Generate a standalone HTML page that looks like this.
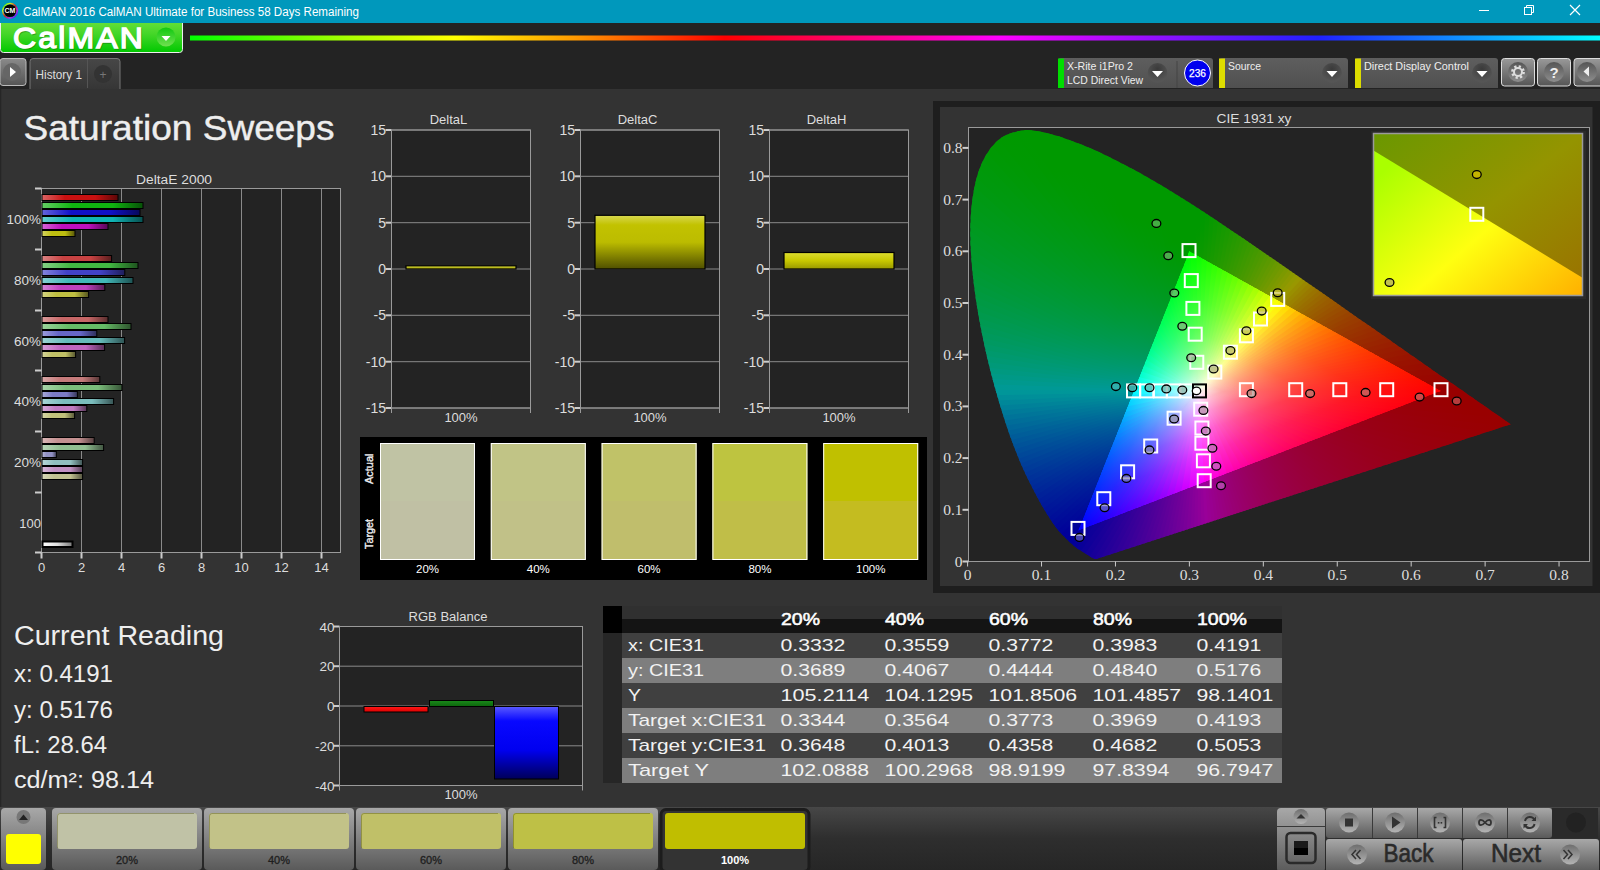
<!DOCTYPE html><html><head><meta charset="utf-8"><style>html,body{margin:0;padding:0;background:#333;overflow:hidden}svg{display:block;font-family:"Liberation Sans",sans-serif}</style></head><body><svg width="1600" height="870" viewBox="0 0 1600 870"><defs><linearGradient id="gbtn" x1="0" x2="0" y1="0" y2="1"><stop offset="0" stop-color="#74e442"/><stop offset="0.5" stop-color="#44d628"/><stop offset="1" stop-color="#00c800"/></linearGradient>
<linearGradient id="gcirc" x1="0" x2="0" y1="0" y2="1"><stop offset="0" stop-color="#10c810"/><stop offset="1" stop-color="#70e050"/></linearGradient>
<linearGradient id="rainbow" x1="0" x2="1" y1="0" y2="0"><stop offset="0" stop-color="#00ff00"/><stop offset="0.113" stop-color="#aaff00"/><stop offset="0.188" stop-color="#ffff00"/><stop offset="0.273" stop-color="#ff9900"/><stop offset="0.379" stop-color="#ff0000"/><stop offset="0.504" stop-color="#ff00a0"/><stop offset="0.574" stop-color="#ff00ff"/><stop offset="0.8" stop-color="#2020ff"/><stop offset="1" stop-color="#00ffff"/></linearGradient>
<linearGradient id="rainbowc" x1="0" x2="1" y1="0" y2="1"><stop offset="0" stop-color="#00ff00"/><stop offset="0.25" stop-color="#ffff00"/><stop offset="0.5" stop-color="#ff0000"/><stop offset="0.75" stop-color="#ff00ff"/><stop offset="1" stop-color="#0000ff"/></linearGradient>
<linearGradient id="gray1" x1="0" x2="0" y1="0" y2="1"><stop offset="0" stop-color="#8a8a8a"/><stop offset="1" stop-color="#555"/></linearGradient>
<linearGradient id="tabg" x1="0" x2="0" y1="0" y2="1"><stop offset="0" stop-color="#474747"/><stop offset="1" stop-color="#333"/></linearGradient>
<linearGradient id="tb" x1="0" x2="0" y1="0" y2="1"><stop offset="0" stop-color="#5e5e5e"/><stop offset="1" stop-color="#505050"/></linearGradient>
<radialGradient id="ddc" cx="0.5" cy="0.3" r="0.6"><stop offset="0" stop-color="#3a3a3a"/><stop offset="1" stop-color="#555"/></radialGradient>
<linearGradient id="btn2" x1="0" x2="0" y1="0" y2="1"><stop offset="0" stop-color="#999"/><stop offset="1" stop-color="#555"/></linearGradient>
<linearGradient id="tcg" x1="0" x2="0" y1="0" y2="1"><stop offset="0" stop-color="#555"/><stop offset="1" stop-color="#8e8e8e"/></linearGradient>
<linearGradient id="deb1" x1="0" x2="1" y1="0" y2="0"><stop offset="0" stop-color="#db6464"/><stop offset="0.3" stop-color="#c81010"/><stop offset="0.7" stop-color="#c81010"/><stop offset="1" stop-color="#5a0707"/></linearGradient>
<linearGradient id="deb2" x1="0" x2="1" y1="0" y2="0"><stop offset="0" stop-color="#64ce64"/><stop offset="0.3" stop-color="#10b410"/><stop offset="0.7" stop-color="#10b410"/><stop offset="1" stop-color="#075107"/></linearGradient>
<linearGradient id="deb3" x1="0" x2="1" y1="0" y2="0"><stop offset="0" stop-color="#6464db"/><stop offset="0.3" stop-color="#1010c8"/><stop offset="0.7" stop-color="#1010c8"/><stop offset="1" stop-color="#07075a"/></linearGradient>
<linearGradient id="deb4" x1="0" x2="1" y1="0" y2="0"><stop offset="0" stop-color="#64cece"/><stop offset="0.3" stop-color="#10b4b4"/><stop offset="0.7" stop-color="#10b4b4"/><stop offset="1" stop-color="#075151"/></linearGradient>
<linearGradient id="deb5" x1="0" x2="1" y1="0" y2="0"><stop offset="0" stop-color="#d564d5"/><stop offset="0.3" stop-color="#be10be"/><stop offset="0.7" stop-color="#be10be"/><stop offset="1" stop-color="#550755"/></linearGradient>
<linearGradient id="deb6" x1="0" x2="1" y1="0" y2="0"><stop offset="0" stop-color="#d5d564"/><stop offset="0.3" stop-color="#bebe10"/><stop offset="0.7" stop-color="#bebe10"/><stop offset="1" stop-color="#555507"/></linearGradient>
<linearGradient id="deb7" x1="0" x2="1" y1="0" y2="0"><stop offset="0" stop-color="#db8484"/><stop offset="0.3" stop-color="#c74242"/><stop offset="0.7" stop-color="#c74242"/><stop offset="1" stop-color="#5a1e1e"/></linearGradient>
<linearGradient id="deb8" x1="0" x2="1" y1="0" y2="0"><stop offset="0" stop-color="#84d184"/><stop offset="0.3" stop-color="#42b842"/><stop offset="0.7" stop-color="#42b842"/><stop offset="1" stop-color="#1e531e"/></linearGradient>
<linearGradient id="deb9" x1="0" x2="1" y1="0" y2="0"><stop offset="0" stop-color="#8484db"/><stop offset="0.3" stop-color="#4242c7"/><stop offset="0.7" stop-color="#4242c7"/><stop offset="1" stop-color="#1e1e5a"/></linearGradient>
<linearGradient id="deb10" x1="0" x2="1" y1="0" y2="0"><stop offset="0" stop-color="#84d1d1"/><stop offset="0.3" stop-color="#42b8b8"/><stop offset="0.7" stop-color="#42b8b8"/><stop offset="1" stop-color="#1e5353"/></linearGradient>
<linearGradient id="deb11" x1="0" x2="1" y1="0" y2="0"><stop offset="0" stop-color="#d584d5"/><stop offset="0.3" stop-color="#bf42bf"/><stop offset="0.7" stop-color="#bf42bf"/><stop offset="1" stop-color="#561e56"/></linearGradient>
<linearGradient id="deb12" x1="0" x2="1" y1="0" y2="0"><stop offset="0" stop-color="#d5d584"/><stop offset="0.3" stop-color="#bfbf42"/><stop offset="0.7" stop-color="#bfbf42"/><stop offset="1" stop-color="#56561e"/></linearGradient>
<linearGradient id="deb13" x1="0" x2="1" y1="0" y2="0"><stop offset="0" stop-color="#da9c9c"/><stop offset="0.3" stop-color="#c66666"/><stop offset="0.7" stop-color="#c66666"/><stop offset="1" stop-color="#592e2e"/></linearGradient>
<linearGradient id="deb14" x1="0" x2="1" y1="0" y2="0"><stop offset="0" stop-color="#9cd39c"/><stop offset="0.3" stop-color="#66bb66"/><stop offset="0.7" stop-color="#66bb66"/><stop offset="1" stop-color="#2e542e"/></linearGradient>
<linearGradient id="deb15" x1="0" x2="1" y1="0" y2="0"><stop offset="0" stop-color="#9c9cda"/><stop offset="0.3" stop-color="#6666c6"/><stop offset="0.7" stop-color="#6666c6"/><stop offset="1" stop-color="#2e2e59"/></linearGradient>
<linearGradient id="deb16" x1="0" x2="1" y1="0" y2="0"><stop offset="0" stop-color="#9cd3d3"/><stop offset="0.3" stop-color="#66bbbb"/><stop offset="0.7" stop-color="#66bbbb"/><stop offset="1" stop-color="#2e5454"/></linearGradient>
<linearGradient id="deb17" x1="0" x2="1" y1="0" y2="0"><stop offset="0" stop-color="#d69cd6"/><stop offset="0.3" stop-color="#c066c0"/><stop offset="0.7" stop-color="#c066c0"/><stop offset="1" stop-color="#562e56"/></linearGradient>
<linearGradient id="deb18" x1="0" x2="1" y1="0" y2="0"><stop offset="0" stop-color="#d6d69c"/><stop offset="0.3" stop-color="#c0c066"/><stop offset="0.7" stop-color="#c0c066"/><stop offset="1" stop-color="#56562e"/></linearGradient>
<linearGradient id="deb19" x1="0" x2="1" y1="0" y2="0"><stop offset="0" stop-color="#d9a9a9"/><stop offset="0.3" stop-color="#c57b7b"/><stop offset="0.7" stop-color="#c57b7b"/><stop offset="1" stop-color="#593737"/></linearGradient>
<linearGradient id="deb20" x1="0" x2="1" y1="0" y2="0"><stop offset="0" stop-color="#a9d4a9"/><stop offset="0.3" stop-color="#7bbd7b"/><stop offset="0.7" stop-color="#7bbd7b"/><stop offset="1" stop-color="#375537"/></linearGradient>
<linearGradient id="deb21" x1="0" x2="1" y1="0" y2="0"><stop offset="0" stop-color="#a9a9d9"/><stop offset="0.3" stop-color="#7b7bc5"/><stop offset="0.7" stop-color="#7b7bc5"/><stop offset="1" stop-color="#373759"/></linearGradient>
<linearGradient id="deb22" x1="0" x2="1" y1="0" y2="0"><stop offset="0" stop-color="#a9d4d4"/><stop offset="0.3" stop-color="#7bbdbd"/><stop offset="0.7" stop-color="#7bbdbd"/><stop offset="1" stop-color="#375555"/></linearGradient>
<linearGradient id="deb23" x1="0" x2="1" y1="0" y2="0"><stop offset="0" stop-color="#d7a9d7"/><stop offset="0.3" stop-color="#c17bc1"/><stop offset="0.7" stop-color="#c17bc1"/><stop offset="1" stop-color="#573757"/></linearGradient>
<linearGradient id="deb24" x1="0" x2="1" y1="0" y2="0"><stop offset="0" stop-color="#d7d7a9"/><stop offset="0.3" stop-color="#c1c17b"/><stop offset="0.7" stop-color="#c1c17b"/><stop offset="1" stop-color="#575737"/></linearGradient>
<linearGradient id="deb25" x1="0" x2="1" y1="0" y2="0"><stop offset="0" stop-color="#d9b8b8"/><stop offset="0.3" stop-color="#c49191"/><stop offset="0.7" stop-color="#c49191"/><stop offset="1" stop-color="#584141"/></linearGradient>
<linearGradient id="deb26" x1="0" x2="1" y1="0" y2="0"><stop offset="0" stop-color="#b8d5b8"/><stop offset="0.3" stop-color="#91bf91"/><stop offset="0.7" stop-color="#91bf91"/><stop offset="1" stop-color="#415641"/></linearGradient>
<linearGradient id="deb27" x1="0" x2="1" y1="0" y2="0"><stop offset="0" stop-color="#b8b8d9"/><stop offset="0.3" stop-color="#9191c4"/><stop offset="0.7" stop-color="#9191c4"/><stop offset="1" stop-color="#414158"/></linearGradient>
<linearGradient id="deb28" x1="0" x2="1" y1="0" y2="0"><stop offset="0" stop-color="#b8d5d5"/><stop offset="0.3" stop-color="#91bfbf"/><stop offset="0.7" stop-color="#91bfbf"/><stop offset="1" stop-color="#415656"/></linearGradient>
<linearGradient id="deb29" x1="0" x2="1" y1="0" y2="0"><stop offset="0" stop-color="#d7b8d7"/><stop offset="0.3" stop-color="#c291c2"/><stop offset="0.7" stop-color="#c291c2"/><stop offset="1" stop-color="#574157"/></linearGradient>
<linearGradient id="deb30" x1="0" x2="1" y1="0" y2="0"><stop offset="0" stop-color="#d7d7b8"/><stop offset="0.3" stop-color="#c2c291"/><stop offset="0.7" stop-color="#c2c291"/><stop offset="1" stop-color="#575741"/></linearGradient>
<linearGradient id="debw" x1="0" x2="1" y1="0" y2="0"><stop offset="0" stop-color="#fff"/><stop offset="0.5" stop-color="#ddd"/><stop offset="1" stop-color="#777"/></linearGradient>
<linearGradient id="dyl" x1="0" x2="0" y1="0" y2="1"><stop offset="0" stop-color="#dede40"/><stop offset="1" stop-color="#a0a000"/></linearGradient>
<linearGradient id="dyc" x1="0" x2="0" y1="0" y2="1"><stop offset="0" stop-color="#d8d850"/><stop offset="0.18" stop-color="#c2c200"/><stop offset="0.5" stop-color="#bcbc00"/><stop offset="0.8" stop-color="#7a7a00"/><stop offset="1" stop-color="#505000"/></linearGradient>
<linearGradient id="dyh" x1="0" x2="0" y1="0" y2="1"><stop offset="0" stop-color="#dcdc30"/><stop offset="0.5" stop-color="#c8c800"/><stop offset="1" stop-color="#989800"/></linearGradient>
<clipPath id="horse"><path d="M1096.3 558.9 C1096.3 558.9 1096.2 558.9 1096.1 559.0 C1096.0 559.0 1095.9 559.0 1095.7 559.0 C1095.6 559.0 1095.4 559.0 1095.2 559.0 C1095.0 559.0 1094.8 559.0 1094.3 558.9 C1093.9 558.7 1093.3 558.4 1092.5 557.9 C1091.6 557.4 1090.7 556.8 1089.1 555.9 C1087.6 554.9 1085.9 554.0 1083.4 552.3 C1080.9 550.7 1078.1 549.6 1074.1 546.1 C1070.1 542.7 1063.6 536.5 1059.3 531.6 C1055.1 526.7 1052.7 523.1 1048.6 516.6 C1044.6 510.2 1040.1 502.7 1035.1 492.9 C1030.1 483.1 1024.0 471.7 1018.4 457.7 C1012.7 443.8 1006.7 427.3 1001.2 409.0 C995.6 390.7 989.6 369.1 985.0 348.1 C980.4 327.2 976.1 304.0 973.7 283.1 C971.2 262.3 969.8 241.2 970.5 223.0 C971.2 204.7 973.6 187.2 977.9 173.6 C982.2 160.1 988.9 148.9 996.4 141.7 C1003.8 134.5 1013.3 131.6 1022.5 130.4 C1031.8 129.2 1042.1 132.0 1052.0 134.4 C1061.9 136.8 1072.3 141.0 1082.0 144.8 C1091.7 148.7 1101.0 153.0 1110.2 157.4 C1119.4 161.9 1128.4 166.6 1137.3 171.5 C1146.3 176.5 1155.2 181.7 1164.1 187.0 C1173.0 192.4 1181.8 197.9 1190.6 203.6 C1199.4 209.2 1208.2 215.0 1217.0 220.8 C1225.8 226.7 1234.6 232.7 1243.4 238.6 C1252.2 244.6 1261.0 250.7 1269.8 256.7 C1278.5 262.7 1287.3 268.7 1295.9 274.7 C1304.6 280.7 1313.1 286.7 1321.6 292.6 C1330.0 298.4 1338.4 304.3 1346.5 309.9 C1354.6 315.6 1362.6 321.2 1370.4 326.6 C1378.1 332.0 1385.7 337.2 1392.8 342.2 C1400.0 347.2 1406.9 352.1 1413.3 356.5 C1419.7 361.0 1425.6 365.0 1431.1 368.9 C1436.7 372.8 1442.0 376.5 1446.8 379.8 C1451.6 383.1 1455.9 386.1 1459.8 388.8 C1463.8 391.6 1467.2 394.0 1470.4 396.2 C1473.6 398.4 1476.3 400.4 1478.8 402.1 C1481.4 403.9 1483.5 405.4 1485.6 406.8 C1487.6 408.2 1489.3 409.4 1491.0 410.5 C1492.6 411.7 1494.1 412.7 1495.5 413.7 C1496.8 414.6 1498.0 415.5 1499.2 416.3 C1500.3 417.0 1501.3 417.7 1502.1 418.3 C1503.0 418.9 1503.7 419.4 1504.3 419.8 C1505.0 420.3 1505.5 420.7 1506.0 421.0 C1506.5 421.4 1506.5 421.4 1507.3 421.9 C1508.1 422.5 1510.2 423.9 1510.8 424.3 Z"/></clipPath>
<linearGradient id="w1" gradientUnits="userSpaceOnUse" x1="1198.8" y1="391.4" x2="1438.1" y2="389.4"><stop offset="0" stop-color="#ffffff"/><stop offset="0.1" stop-color="#ffa8a8"/><stop offset="0.25" stop-color="#ff6564"/><stop offset="0.45" stop-color="#ff3635"/><stop offset="0.7" stop-color="#ff1715"/><stop offset="1.0" stop-color="#ff0100"/></linearGradient>
<linearGradient id="w2" gradientUnits="userSpaceOnUse" x1="1198.8" y1="391.4" x2="1432.9" y2="386.5"><stop offset="0" stop-color="#ffffff"/><stop offset="0.1" stop-color="#ffaba9"/><stop offset="0.25" stop-color="#ff6865"/><stop offset="0.45" stop-color="#ff3936"/><stop offset="0.7" stop-color="#ff1a16"/><stop offset="1.0" stop-color="#ff0400"/></linearGradient>
<linearGradient id="w3" gradientUnits="userSpaceOnUse" x1="1198.8" y1="391.4" x2="1427.7" y2="383.6"><stop offset="0" stop-color="#ffffff"/><stop offset="0.1" stop-color="#ffadaa"/><stop offset="0.25" stop-color="#ff6b66"/><stop offset="0.45" stop-color="#ff3d37"/><stop offset="0.7" stop-color="#ff1d16"/><stop offset="1.0" stop-color="#ff0800"/></linearGradient>
<linearGradient id="w4" gradientUnits="userSpaceOnUse" x1="1198.8" y1="391.4" x2="1422.4" y2="380.7"><stop offset="0" stop-color="#ffffff"/><stop offset="0.1" stop-color="#ffafac"/><stop offset="0.25" stop-color="#ff6e68"/><stop offset="0.45" stop-color="#ff4038"/><stop offset="0.7" stop-color="#ff2117"/><stop offset="1.0" stop-color="#ff0b00"/></linearGradient>
<linearGradient id="w5" gradientUnits="userSpaceOnUse" x1="1198.8" y1="391.4" x2="1417.2" y2="377.8"><stop offset="0" stop-color="#ffffff"/><stop offset="0.1" stop-color="#ffb2ad"/><stop offset="0.25" stop-color="#ff7269"/><stop offset="0.45" stop-color="#ff4439"/><stop offset="0.7" stop-color="#ff2417"/><stop offset="1.0" stop-color="#ff0e00"/></linearGradient>
<linearGradient id="w6" gradientUnits="userSpaceOnUse" x1="1198.8" y1="391.4" x2="1412.0" y2="374.9"><stop offset="0" stop-color="#ffffff"/><stop offset="0.1" stop-color="#ffb4ae"/><stop offset="0.25" stop-color="#ff756b"/><stop offset="0.45" stop-color="#ff483a"/><stop offset="0.7" stop-color="#ff2818"/><stop offset="1.0" stop-color="#ff1200"/></linearGradient>
<linearGradient id="w7" gradientUnits="userSpaceOnUse" x1="1198.8" y1="391.4" x2="1406.7" y2="372.0"><stop offset="0" stop-color="#ffffff"/><stop offset="0.1" stop-color="#ffb6b0"/><stop offset="0.25" stop-color="#ff796c"/><stop offset="0.45" stop-color="#ff4b3b"/><stop offset="0.7" stop-color="#ff2c18"/><stop offset="1.0" stop-color="#ff1600"/></linearGradient>
<linearGradient id="w8" gradientUnits="userSpaceOnUse" x1="1198.8" y1="391.4" x2="1401.5" y2="369.1"><stop offset="0" stop-color="#ffffff"/><stop offset="0.1" stop-color="#ffb9b1"/><stop offset="0.25" stop-color="#ff7c6e"/><stop offset="0.45" stop-color="#ff4f3c"/><stop offset="0.7" stop-color="#ff3019"/><stop offset="1.0" stop-color="#ff1a00"/></linearGradient>
<linearGradient id="w9" gradientUnits="userSpaceOnUse" x1="1198.8" y1="391.4" x2="1396.2" y2="366.2"><stop offset="0" stop-color="#ffffff"/><stop offset="0.1" stop-color="#ffbbb2"/><stop offset="0.25" stop-color="#ff806f"/><stop offset="0.45" stop-color="#ff543d"/><stop offset="0.7" stop-color="#ff3419"/><stop offset="1.0" stop-color="#ff1e00"/></linearGradient>
<linearGradient id="w10" gradientUnits="userSpaceOnUse" x1="1198.8" y1="391.4" x2="1391.0" y2="363.3"><stop offset="0" stop-color="#ffffff"/><stop offset="0.1" stop-color="#ffbeb4"/><stop offset="0.25" stop-color="#ff8471"/><stop offset="0.45" stop-color="#ff583e"/><stop offset="0.7" stop-color="#ff391a"/><stop offset="1.0" stop-color="#ff2200"/></linearGradient>
<linearGradient id="w11" gradientUnits="userSpaceOnUse" x1="1198.8" y1="391.4" x2="1385.8" y2="360.4"><stop offset="0" stop-color="#ffffff"/><stop offset="0.1" stop-color="#ffc0b5"/><stop offset="0.25" stop-color="#ff8872"/><stop offset="0.45" stop-color="#ff5d40"/><stop offset="0.7" stop-color="#ff3d1b"/><stop offset="1.0" stop-color="#ff2700"/></linearGradient>
<linearGradient id="w12" gradientUnits="userSpaceOnUse" x1="1198.8" y1="391.4" x2="1380.5" y2="357.4"><stop offset="0" stop-color="#ffffff"/><stop offset="0.1" stop-color="#ffc3b6"/><stop offset="0.25" stop-color="#ff8c74"/><stop offset="0.45" stop-color="#ff6141"/><stop offset="0.7" stop-color="#ff421b"/><stop offset="1.0" stop-color="#ff2b00"/></linearGradient>
<linearGradient id="w13" gradientUnits="userSpaceOnUse" x1="1198.8" y1="391.4" x2="1375.3" y2="354.5"><stop offset="0" stop-color="#ffffff"/><stop offset="0.1" stop-color="#ffc5b8"/><stop offset="0.25" stop-color="#ff9076"/><stop offset="0.45" stop-color="#ff6642"/><stop offset="0.7" stop-color="#ff471c"/><stop offset="1.0" stop-color="#ff3100"/></linearGradient>
<linearGradient id="w14" gradientUnits="userSpaceOnUse" x1="1198.8" y1="391.4" x2="1370.1" y2="351.6"><stop offset="0" stop-color="#ffffff"/><stop offset="0.1" stop-color="#ffc8b9"/><stop offset="0.25" stop-color="#ff9478"/><stop offset="0.45" stop-color="#ff6b44"/><stop offset="0.7" stop-color="#ff4d1d"/><stop offset="1.0" stop-color="#ff3600"/></linearGradient>
<linearGradient id="w15" gradientUnits="userSpaceOnUse" x1="1198.8" y1="391.4" x2="1364.8" y2="348.7"><stop offset="0" stop-color="#ffffff"/><stop offset="0.1" stop-color="#ffcbbb"/><stop offset="0.25" stop-color="#ff997a"/><stop offset="0.45" stop-color="#ff7145"/><stop offset="0.7" stop-color="#ff521d"/><stop offset="1.0" stop-color="#ff3c00"/></linearGradient>
<linearGradient id="w16" gradientUnits="userSpaceOnUse" x1="1198.8" y1="391.4" x2="1359.6" y2="345.8"><stop offset="0" stop-color="#ffffff"/><stop offset="0.1" stop-color="#ffcdbc"/><stop offset="0.25" stop-color="#ff9d7c"/><stop offset="0.45" stop-color="#ff7647"/><stop offset="0.7" stop-color="#ff581e"/><stop offset="1.0" stop-color="#ff4200"/></linearGradient>
<linearGradient id="w17" gradientUnits="userSpaceOnUse" x1="1198.8" y1="391.4" x2="1354.3" y2="342.9"><stop offset="0" stop-color="#ffffff"/><stop offset="0.1" stop-color="#ffd0be"/><stop offset="0.25" stop-color="#ffa27e"/><stop offset="0.45" stop-color="#ff7c48"/><stop offset="0.7" stop-color="#ff5e1f"/><stop offset="1.0" stop-color="#ff4800"/></linearGradient>
<linearGradient id="w18" gradientUnits="userSpaceOnUse" x1="1198.8" y1="391.4" x2="1349.1" y2="340.0"><stop offset="0" stop-color="#ffffff"/><stop offset="0.1" stop-color="#ffd3bf"/><stop offset="0.25" stop-color="#ffa780"/><stop offset="0.45" stop-color="#ff824a"/><stop offset="0.7" stop-color="#ff6520"/><stop offset="1.0" stop-color="#ff4f00"/></linearGradient>
<linearGradient id="w19" gradientUnits="userSpaceOnUse" x1="1198.8" y1="391.4" x2="1343.9" y2="337.1"><stop offset="0" stop-color="#ffffff"/><stop offset="0.1" stop-color="#ffd6c1"/><stop offset="0.25" stop-color="#ffac82"/><stop offset="0.45" stop-color="#ff884c"/><stop offset="0.7" stop-color="#ff6c21"/><stop offset="1.0" stop-color="#ff5600"/></linearGradient>
<linearGradient id="w20" gradientUnits="userSpaceOnUse" x1="1198.8" y1="391.4" x2="1338.6" y2="334.2"><stop offset="0" stop-color="#ffffff"/><stop offset="0.1" stop-color="#ffd9c3"/><stop offset="0.25" stop-color="#ffb184"/><stop offset="0.45" stop-color="#ff8f4d"/><stop offset="0.7" stop-color="#ff7422"/><stop offset="1.0" stop-color="#ff5e00"/></linearGradient>
<linearGradient id="w21" gradientUnits="userSpaceOnUse" x1="1198.8" y1="391.4" x2="1333.4" y2="331.3"><stop offset="0" stop-color="#ffffff"/><stop offset="0.1" stop-color="#ffdcc4"/><stop offset="0.25" stop-color="#ffb786"/><stop offset="0.45" stop-color="#ff964f"/><stop offset="0.7" stop-color="#ff7c23"/><stop offset="1.0" stop-color="#ff6700"/></linearGradient>
<linearGradient id="w22" gradientUnits="userSpaceOnUse" x1="1198.8" y1="391.4" x2="1328.2" y2="328.4"><stop offset="0" stop-color="#ffffff"/><stop offset="0.1" stop-color="#ffdfc6"/><stop offset="0.25" stop-color="#ffbd89"/><stop offset="0.45" stop-color="#ff9e51"/><stop offset="0.7" stop-color="#ff8424"/><stop offset="1.0" stop-color="#ff7000"/></linearGradient>
<linearGradient id="w23" gradientUnits="userSpaceOnUse" x1="1198.8" y1="391.4" x2="1322.9" y2="325.5"><stop offset="0" stop-color="#ffffff"/><stop offset="0.1" stop-color="#ffe2c8"/><stop offset="0.25" stop-color="#ffc28b"/><stop offset="0.45" stop-color="#ffa554"/><stop offset="0.7" stop-color="#ff8d25"/><stop offset="1.0" stop-color="#ff7a00"/></linearGradient>
<linearGradient id="w24" gradientUnits="userSpaceOnUse" x1="1198.8" y1="391.4" x2="1317.7" y2="322.5"><stop offset="0" stop-color="#ffffff"/><stop offset="0.1" stop-color="#ffe5c9"/><stop offset="0.25" stop-color="#ffc88d"/><stop offset="0.45" stop-color="#ffae56"/><stop offset="0.7" stop-color="#ff9727"/><stop offset="1.0" stop-color="#ff8400"/></linearGradient>
<linearGradient id="w25" gradientUnits="userSpaceOnUse" x1="1198.8" y1="391.4" x2="1312.5" y2="319.6"><stop offset="0" stop-color="#ffffff"/><stop offset="0.1" stop-color="#ffe8cb"/><stop offset="0.25" stop-color="#ffcf90"/><stop offset="0.45" stop-color="#ffb658"/><stop offset="0.7" stop-color="#ffa128"/><stop offset="1.0" stop-color="#ff9000"/></linearGradient>
<linearGradient id="w26" gradientUnits="userSpaceOnUse" x1="1198.8" y1="391.4" x2="1307.2" y2="316.7"><stop offset="0" stop-color="#ffffff"/><stop offset="0.1" stop-color="#ffeccd"/><stop offset="0.25" stop-color="#ffd593"/><stop offset="0.45" stop-color="#ffbf5b"/><stop offset="0.7" stop-color="#ffac29"/><stop offset="1.0" stop-color="#ff9c00"/></linearGradient>
<linearGradient id="w27" gradientUnits="userSpaceOnUse" x1="1198.8" y1="391.4" x2="1302.0" y2="313.8"><stop offset="0" stop-color="#ffffff"/><stop offset="0.1" stop-color="#ffefcf"/><stop offset="0.25" stop-color="#ffdc96"/><stop offset="0.45" stop-color="#ffc95d"/><stop offset="0.7" stop-color="#ffb82b"/><stop offset="1.0" stop-color="#ffaa00"/></linearGradient>
<linearGradient id="w28" gradientUnits="userSpaceOnUse" x1="1198.8" y1="391.4" x2="1296.7" y2="310.9"><stop offset="0" stop-color="#ffffff"/><stop offset="0.1" stop-color="#fff2d0"/><stop offset="0.25" stop-color="#ffe399"/><stop offset="0.45" stop-color="#ffd360"/><stop offset="0.7" stop-color="#ffc52d"/><stop offset="1.0" stop-color="#ffb900"/></linearGradient>
<linearGradient id="w29" gradientUnits="userSpaceOnUse" x1="1198.8" y1="391.4" x2="1291.5" y2="308.0"><stop offset="0" stop-color="#ffffff"/><stop offset="0.1" stop-color="#fff6d2"/><stop offset="0.25" stop-color="#ffea9c"/><stop offset="0.45" stop-color="#ffde63"/><stop offset="0.7" stop-color="#ffd32f"/><stop offset="1.0" stop-color="#ffca00"/></linearGradient>
<linearGradient id="w30" gradientUnits="userSpaceOnUse" x1="1198.8" y1="391.4" x2="1286.3" y2="305.1"><stop offset="0" stop-color="#ffffff"/><stop offset="0.1" stop-color="#fff9d4"/><stop offset="0.25" stop-color="#fff29f"/><stop offset="0.45" stop-color="#ffea67"/><stop offset="0.7" stop-color="#ffe331"/><stop offset="1.0" stop-color="#ffdc00"/></linearGradient>
<linearGradient id="w31" gradientUnits="userSpaceOnUse" x1="1198.8" y1="391.4" x2="1281.0" y2="302.2"><stop offset="0" stop-color="#ffffff"/><stop offset="0.1" stop-color="#fffdd6"/><stop offset="0.25" stop-color="#fffaa2"/><stop offset="0.45" stop-color="#fff66a"/><stop offset="0.7" stop-color="#fff333"/><stop offset="1.0" stop-color="#fff000"/></linearGradient>
<linearGradient id="w32" gradientUnits="userSpaceOnUse" x1="1198.8" y1="391.4" x2="1275.8" y2="299.3"><stop offset="0" stop-color="#ffffff"/><stop offset="0.1" stop-color="#feffd7"/><stop offset="0.25" stop-color="#fcffa4"/><stop offset="0.45" stop-color="#faff6c"/><stop offset="0.7" stop-color="#f9ff34"/><stop offset="1.0" stop-color="#f7ff00"/></linearGradient>
<linearGradient id="w33" gradientUnits="userSpaceOnUse" x1="1198.8" y1="391.4" x2="1270.6" y2="296.4"><stop offset="0" stop-color="#ffffff"/><stop offset="0.1" stop-color="#faffd6"/><stop offset="0.25" stop-color="#f4ffa2"/><stop offset="0.45" stop-color="#edff6a"/><stop offset="0.7" stop-color="#e7ff33"/><stop offset="1.0" stop-color="#e1ff00"/></linearGradient>
<linearGradient id="w34" gradientUnits="userSpaceOnUse" x1="1198.8" y1="391.4" x2="1265.3" y2="293.5"><stop offset="0" stop-color="#ffffff"/><stop offset="0.1" stop-color="#f7ffd5"/><stop offset="0.25" stop-color="#ecffa0"/><stop offset="0.45" stop-color="#e1ff68"/><stop offset="0.7" stop-color="#d6ff31"/><stop offset="1.0" stop-color="#ccff00"/></linearGradient>
<linearGradient id="w35" gradientUnits="userSpaceOnUse" x1="1198.8" y1="391.4" x2="1260.1" y2="290.6"><stop offset="0" stop-color="#ffffff"/><stop offset="0.1" stop-color="#f3ffd4"/><stop offset="0.25" stop-color="#e4ff9e"/><stop offset="0.45" stop-color="#d5ff66"/><stop offset="0.7" stop-color="#c6ff30"/><stop offset="1.0" stop-color="#b9ff00"/></linearGradient>
<linearGradient id="w36" gradientUnits="userSpaceOnUse" x1="1198.8" y1="391.4" x2="1254.8" y2="287.7"><stop offset="0" stop-color="#ffffff"/><stop offset="0.1" stop-color="#f0ffd3"/><stop offset="0.25" stop-color="#ddff9d"/><stop offset="0.45" stop-color="#c9ff64"/><stop offset="0.7" stop-color="#b7ff2f"/><stop offset="1.0" stop-color="#a6ff00"/></linearGradient>
<linearGradient id="w37" gradientUnits="userSpaceOnUse" x1="1198.8" y1="391.4" x2="1249.6" y2="284.7"><stop offset="0" stop-color="#ffffff"/><stop offset="0.1" stop-color="#ecffd2"/><stop offset="0.25" stop-color="#d5ff9b"/><stop offset="0.45" stop-color="#beff63"/><stop offset="0.7" stop-color="#a8ff2e"/><stop offset="1.0" stop-color="#95ff00"/></linearGradient>
<linearGradient id="w38" gradientUnits="userSpaceOnUse" x1="1198.8" y1="391.4" x2="1244.4" y2="281.8"><stop offset="0" stop-color="#ffffff"/><stop offset="0.1" stop-color="#e9ffd1"/><stop offset="0.25" stop-color="#ceff99"/><stop offset="0.45" stop-color="#b3ff61"/><stop offset="0.7" stop-color="#9aff2d"/><stop offset="1.0" stop-color="#84ff00"/></linearGradient>
<linearGradient id="w39" gradientUnits="userSpaceOnUse" x1="1198.8" y1="391.4" x2="1239.1" y2="278.9"><stop offset="0" stop-color="#ffffff"/><stop offset="0.1" stop-color="#e5ffd0"/><stop offset="0.25" stop-color="#c7ff98"/><stop offset="0.45" stop-color="#a8ff5f"/><stop offset="0.7" stop-color="#8cff2c"/><stop offset="1.0" stop-color="#74ff00"/></linearGradient>
<linearGradient id="w40" gradientUnits="userSpaceOnUse" x1="1198.8" y1="391.4" x2="1233.9" y2="276.0"><stop offset="0" stop-color="#ffffff"/><stop offset="0.1" stop-color="#e2ffcf"/><stop offset="0.25" stop-color="#c0ff96"/><stop offset="0.45" stop-color="#9eff5e"/><stop offset="0.7" stop-color="#80ff2b"/><stop offset="1.0" stop-color="#65ff00"/></linearGradient>
<linearGradient id="w41" gradientUnits="userSpaceOnUse" x1="1198.8" y1="391.4" x2="1228.7" y2="273.1"><stop offset="0" stop-color="#ffffff"/><stop offset="0.1" stop-color="#dfffce"/><stop offset="0.25" stop-color="#b9ff95"/><stop offset="0.45" stop-color="#94ff5c"/><stop offset="0.7" stop-color="#73ff2a"/><stop offset="1.0" stop-color="#57ff00"/></linearGradient>
<linearGradient id="w42" gradientUnits="userSpaceOnUse" x1="1198.8" y1="391.4" x2="1223.4" y2="270.2"><stop offset="0" stop-color="#ffffff"/><stop offset="0.1" stop-color="#dbffcd"/><stop offset="0.25" stop-color="#b2ff93"/><stop offset="0.45" stop-color="#8aff5b"/><stop offset="0.7" stop-color="#67ff2a"/><stop offset="1.0" stop-color="#4aff00"/></linearGradient>
<linearGradient id="w43" gradientUnits="userSpaceOnUse" x1="1198.8" y1="391.4" x2="1218.2" y2="267.3"><stop offset="0" stop-color="#ffffff"/><stop offset="0.1" stop-color="#d8ffcc"/><stop offset="0.25" stop-color="#acff92"/><stop offset="0.45" stop-color="#81ff5a"/><stop offset="0.7" stop-color="#5cff29"/><stop offset="1.0" stop-color="#3dff00"/></linearGradient>
<linearGradient id="w44" gradientUnits="userSpaceOnUse" x1="1198.8" y1="391.4" x2="1213.0" y2="264.4"><stop offset="0" stop-color="#ffffff"/><stop offset="0.1" stop-color="#d5ffcb"/><stop offset="0.25" stop-color="#a5ff90"/><stop offset="0.45" stop-color="#78ff58"/><stop offset="0.7" stop-color="#51ff28"/><stop offset="1.0" stop-color="#31ff00"/></linearGradient>
<linearGradient id="w45" gradientUnits="userSpaceOnUse" x1="1198.8" y1="391.4" x2="1207.7" y2="261.5"><stop offset="0" stop-color="#ffffff"/><stop offset="0.1" stop-color="#d2ffca"/><stop offset="0.25" stop-color="#9fff8f"/><stop offset="0.45" stop-color="#6fff57"/><stop offset="0.7" stop-color="#47ff27"/><stop offset="1.0" stop-color="#25ff00"/></linearGradient>
<linearGradient id="w46" gradientUnits="userSpaceOnUse" x1="1198.8" y1="391.4" x2="1202.5" y2="258.6"><stop offset="0" stop-color="#ffffff"/><stop offset="0.1" stop-color="#ceffc9"/><stop offset="0.25" stop-color="#99ff8d"/><stop offset="0.45" stop-color="#67ff56"/><stop offset="0.7" stop-color="#3cff26"/><stop offset="1.0" stop-color="#1aff00"/></linearGradient>
<linearGradient id="w47" gradientUnits="userSpaceOnUse" x1="1198.8" y1="391.4" x2="1197.2" y2="255.7"><stop offset="0" stop-color="#ffffff"/><stop offset="0.1" stop-color="#cbffc8"/><stop offset="0.25" stop-color="#93ff8c"/><stop offset="0.45" stop-color="#5fff54"/><stop offset="0.7" stop-color="#33ff26"/><stop offset="1.0" stop-color="#0fff00"/></linearGradient>
<linearGradient id="w48" gradientUnits="userSpaceOnUse" x1="1198.8" y1="391.4" x2="1192.0" y2="252.8"><stop offset="0" stop-color="#ffffff"/><stop offset="0.1" stop-color="#c8ffc7"/><stop offset="0.25" stop-color="#8dff8b"/><stop offset="0.45" stop-color="#57ff53"/><stop offset="0.7" stop-color="#29ff25"/><stop offset="1.0" stop-color="#05ff00"/></linearGradient>
<linearGradient id="w49" gradientUnits="userSpaceOnUse" x1="1198.8" y1="391.4" x2="1188.2" y2="254.2"><stop offset="0" stop-color="#ffffff"/><stop offset="0.1" stop-color="#c7ffc8"/><stop offset="0.25" stop-color="#8aff8c"/><stop offset="0.45" stop-color="#53ff55"/><stop offset="0.7" stop-color="#25ff27"/><stop offset="1.0" stop-color="#00ff03"/></linearGradient>
<linearGradient id="w50" gradientUnits="userSpaceOnUse" x1="1198.8" y1="391.4" x2="1185.9" y2="260.0"><stop offset="0" stop-color="#ffffff"/><stop offset="0.1" stop-color="#c8ffca"/><stop offset="0.25" stop-color="#8cff90"/><stop offset="0.45" stop-color="#54ff5a"/><stop offset="0.7" stop-color="#26ff2d"/><stop offset="1.0" stop-color="#00ff08"/></linearGradient>
<linearGradient id="w51" gradientUnits="userSpaceOnUse" x1="1198.8" y1="391.4" x2="1183.6" y2="265.8"><stop offset="0" stop-color="#ffffff"/><stop offset="0.1" stop-color="#c9ffcc"/><stop offset="0.25" stop-color="#8dff93"/><stop offset="0.45" stop-color="#56ff5f"/><stop offset="0.7" stop-color="#26ff32"/><stop offset="1.0" stop-color="#00ff0e"/></linearGradient>
<linearGradient id="w52" gradientUnits="userSpaceOnUse" x1="1198.8" y1="391.4" x2="1181.3" y2="271.7"><stop offset="0" stop-color="#ffffff"/><stop offset="0.1" stop-color="#caffce"/><stop offset="0.25" stop-color="#8fff97"/><stop offset="0.45" stop-color="#57ff64"/><stop offset="0.7" stop-color="#27ff38"/><stop offset="1.0" stop-color="#00ff14"/></linearGradient>
<linearGradient id="w53" gradientUnits="userSpaceOnUse" x1="1198.8" y1="391.4" x2="1179.0" y2="277.5"><stop offset="0" stop-color="#ffffff"/><stop offset="0.1" stop-color="#cbffd0"/><stop offset="0.25" stop-color="#90ff9b"/><stop offset="0.45" stop-color="#58ff69"/><stop offset="0.7" stop-color="#28ff3e"/><stop offset="1.0" stop-color="#00ff1a"/></linearGradient>
<linearGradient id="w54" gradientUnits="userSpaceOnUse" x1="1198.8" y1="391.4" x2="1176.7" y2="283.3"><stop offset="0" stop-color="#ffffff"/><stop offset="0.1" stop-color="#ccffd2"/><stop offset="0.25" stop-color="#91ffa0"/><stop offset="0.45" stop-color="#5aff6f"/><stop offset="0.7" stop-color="#29ff44"/><stop offset="1.0" stop-color="#00ff21"/></linearGradient>
<linearGradient id="w55" gradientUnits="userSpaceOnUse" x1="1198.8" y1="391.4" x2="1174.4" y2="289.1"><stop offset="0" stop-color="#ffffff"/><stop offset="0.1" stop-color="#cdffd5"/><stop offset="0.25" stop-color="#93ffa4"/><stop offset="0.45" stop-color="#5bff74"/><stop offset="0.7" stop-color="#29ff4b"/><stop offset="1.0" stop-color="#00ff28"/></linearGradient>
<linearGradient id="w56" gradientUnits="userSpaceOnUse" x1="1198.8" y1="391.4" x2="1172.1" y2="294.9"><stop offset="0" stop-color="#ffffff"/><stop offset="0.1" stop-color="#ceffd7"/><stop offset="0.25" stop-color="#94ffa8"/><stop offset="0.45" stop-color="#5cff7a"/><stop offset="0.7" stop-color="#2aff51"/><stop offset="1.0" stop-color="#00ff2f"/></linearGradient>
<linearGradient id="w57" gradientUnits="userSpaceOnUse" x1="1198.8" y1="391.4" x2="1169.8" y2="300.7"><stop offset="0" stop-color="#ffffff"/><stop offset="0.1" stop-color="#cfffd9"/><stop offset="0.25" stop-color="#96ffac"/><stop offset="0.45" stop-color="#5eff80"/><stop offset="0.7" stop-color="#2bff58"/><stop offset="1.0" stop-color="#00ff36"/></linearGradient>
<linearGradient id="w58" gradientUnits="userSpaceOnUse" x1="1198.8" y1="391.4" x2="1167.4" y2="306.6"><stop offset="0" stop-color="#ffffff"/><stop offset="0.1" stop-color="#d0ffdb"/><stop offset="0.25" stop-color="#98ffb1"/><stop offset="0.45" stop-color="#5fff86"/><stop offset="0.7" stop-color="#2cff60"/><stop offset="1.0" stop-color="#00ff3e"/></linearGradient>
<linearGradient id="w59" gradientUnits="userSpaceOnUse" x1="1198.8" y1="391.4" x2="1165.1" y2="312.4"><stop offset="0" stop-color="#ffffff"/><stop offset="0.1" stop-color="#d1ffde"/><stop offset="0.25" stop-color="#99ffb5"/><stop offset="0.45" stop-color="#61ff8d"/><stop offset="0.7" stop-color="#2dff67"/><stop offset="1.0" stop-color="#00ff47"/></linearGradient>
<linearGradient id="w60" gradientUnits="userSpaceOnUse" x1="1198.8" y1="391.4" x2="1162.8" y2="318.2"><stop offset="0" stop-color="#ffffff"/><stop offset="0.1" stop-color="#d2ffe0"/><stop offset="0.25" stop-color="#9bffba"/><stop offset="0.45" stop-color="#63ff93"/><stop offset="0.7" stop-color="#2eff6f"/><stop offset="1.0" stop-color="#00ff50"/></linearGradient>
<linearGradient id="w61" gradientUnits="userSpaceOnUse" x1="1198.8" y1="391.4" x2="1160.5" y2="324.0"><stop offset="0" stop-color="#ffffff"/><stop offset="0.1" stop-color="#d3ffe2"/><stop offset="0.25" stop-color="#9dffbf"/><stop offset="0.45" stop-color="#64ff9a"/><stop offset="0.7" stop-color="#2fff78"/><stop offset="1.0" stop-color="#00ff59"/></linearGradient>
<linearGradient id="w62" gradientUnits="userSpaceOnUse" x1="1198.8" y1="391.4" x2="1158.2" y2="329.8"><stop offset="0" stop-color="#ffffff"/><stop offset="0.1" stop-color="#d4ffe5"/><stop offset="0.25" stop-color="#9effc4"/><stop offset="0.45" stop-color="#66ffa1"/><stop offset="0.7" stop-color="#30ff80"/><stop offset="1.0" stop-color="#00ff63"/></linearGradient>
<linearGradient id="w63" gradientUnits="userSpaceOnUse" x1="1198.8" y1="391.4" x2="1155.9" y2="335.6"><stop offset="0" stop-color="#ffffff"/><stop offset="0.1" stop-color="#d5ffe7"/><stop offset="0.25" stop-color="#a0ffc9"/><stop offset="0.45" stop-color="#68ffa9"/><stop offset="0.7" stop-color="#31ff8a"/><stop offset="1.0" stop-color="#00ff6d"/></linearGradient>
<linearGradient id="w64" gradientUnits="userSpaceOnUse" x1="1198.8" y1="391.4" x2="1153.6" y2="341.5"><stop offset="0" stop-color="#ffffff"/><stop offset="0.1" stop-color="#d6ffe9"/><stop offset="0.25" stop-color="#a2ffce"/><stop offset="0.45" stop-color="#6affb0"/><stop offset="0.7" stop-color="#33ff93"/><stop offset="1.0" stop-color="#00ff78"/></linearGradient>
<linearGradient id="w65" gradientUnits="userSpaceOnUse" x1="1198.8" y1="391.4" x2="1151.3" y2="347.3"><stop offset="0" stop-color="#ffffff"/><stop offset="0.1" stop-color="#d7ffec"/><stop offset="0.25" stop-color="#a4ffd3"/><stop offset="0.45" stop-color="#6cffb8"/><stop offset="0.7" stop-color="#34ff9d"/><stop offset="1.0" stop-color="#00ff84"/></linearGradient>
<linearGradient id="w66" gradientUnits="userSpaceOnUse" x1="1198.8" y1="391.4" x2="1149.0" y2="353.1"><stop offset="0" stop-color="#ffffff"/><stop offset="0.1" stop-color="#d8ffee"/><stop offset="0.25" stop-color="#a6ffd8"/><stop offset="0.45" stop-color="#6effc0"/><stop offset="0.7" stop-color="#35ffa8"/><stop offset="1.0" stop-color="#00ff91"/></linearGradient>
<linearGradient id="w67" gradientUnits="userSpaceOnUse" x1="1198.8" y1="391.4" x2="1146.6" y2="358.9"><stop offset="0" stop-color="#ffffff"/><stop offset="0.1" stop-color="#d9fff1"/><stop offset="0.25" stop-color="#a7ffde"/><stop offset="0.45" stop-color="#70ffc9"/><stop offset="0.7" stop-color="#37ffb3"/><stop offset="1.0" stop-color="#00ff9e"/></linearGradient>
<linearGradient id="w68" gradientUnits="userSpaceOnUse" x1="1198.8" y1="391.4" x2="1144.3" y2="364.7"><stop offset="0" stop-color="#ffffff"/><stop offset="0.1" stop-color="#dafff3"/><stop offset="0.25" stop-color="#a9ffe3"/><stop offset="0.45" stop-color="#72ffd2"/><stop offset="0.7" stop-color="#38ffbf"/><stop offset="1.0" stop-color="#00ffad"/></linearGradient>
<linearGradient id="w69" gradientUnits="userSpaceOnUse" x1="1198.8" y1="391.4" x2="1142.0" y2="370.5"><stop offset="0" stop-color="#ffffff"/><stop offset="0.1" stop-color="#dbfff6"/><stop offset="0.25" stop-color="#abffe9"/><stop offset="0.45" stop-color="#74ffdb"/><stop offset="0.7" stop-color="#3affcb"/><stop offset="1.0" stop-color="#00ffbc"/></linearGradient>
<linearGradient id="w70" gradientUnits="userSpaceOnUse" x1="1198.8" y1="391.4" x2="1139.7" y2="376.3"><stop offset="0" stop-color="#ffffff"/><stop offset="0.1" stop-color="#dcfff8"/><stop offset="0.25" stop-color="#aeffef"/><stop offset="0.45" stop-color="#76ffe4"/><stop offset="0.7" stop-color="#3bffd9"/><stop offset="1.0" stop-color="#00ffcd"/></linearGradient>
<linearGradient id="w71" gradientUnits="userSpaceOnUse" x1="1198.8" y1="391.4" x2="1137.4" y2="382.2"><stop offset="0" stop-color="#ffffff"/><stop offset="0.1" stop-color="#defffb"/><stop offset="0.25" stop-color="#b0fff5"/><stop offset="0.45" stop-color="#79ffee"/><stop offset="0.7" stop-color="#3dffe7"/><stop offset="1.0" stop-color="#00ffdf"/></linearGradient>
<linearGradient id="w72" gradientUnits="userSpaceOnUse" x1="1198.8" y1="391.4" x2="1135.1" y2="388.0"><stop offset="0" stop-color="#ffffff"/><stop offset="0.1" stop-color="#dffffd"/><stop offset="0.25" stop-color="#b2fffb"/><stop offset="0.45" stop-color="#7bfff8"/><stop offset="0.7" stop-color="#3ffff5"/><stop offset="1.0" stop-color="#00fff2"/></linearGradient>
<linearGradient id="w73" gradientUnits="userSpaceOnUse" x1="1198.8" y1="391.4" x2="1132.8" y2="393.8"><stop offset="0" stop-color="#ffffff"/><stop offset="0.1" stop-color="#dffeff"/><stop offset="0.25" stop-color="#b2fdff"/><stop offset="0.45" stop-color="#7cfbff"/><stop offset="0.7" stop-color="#40f9ff"/><stop offset="1.0" stop-color="#00f7ff"/></linearGradient>
<linearGradient id="w74" gradientUnits="userSpaceOnUse" x1="1198.8" y1="391.4" x2="1130.5" y2="399.6"><stop offset="0" stop-color="#ffffff"/><stop offset="0.1" stop-color="#defbff"/><stop offset="0.25" stop-color="#b0f6ff"/><stop offset="0.45" stop-color="#7af0ff"/><stop offset="0.7" stop-color="#3eeaff"/><stop offset="1.0" stop-color="#00e3ff"/></linearGradient>
<linearGradient id="w75" gradientUnits="userSpaceOnUse" x1="1198.8" y1="391.4" x2="1128.2" y2="405.4"><stop offset="0" stop-color="#ffffff"/><stop offset="0.1" stop-color="#ddf9ff"/><stop offset="0.25" stop-color="#aef0ff"/><stop offset="0.45" stop-color="#77e6ff"/><stop offset="0.7" stop-color="#3cdcff"/><stop offset="1.0" stop-color="#00d1ff"/></linearGradient>
<linearGradient id="w76" gradientUnits="userSpaceOnUse" x1="1198.8" y1="391.4" x2="1125.9" y2="411.2"><stop offset="0" stop-color="#ffffff"/><stop offset="0.1" stop-color="#dcf6ff"/><stop offset="0.25" stop-color="#aceaff"/><stop offset="0.45" stop-color="#75ddff"/><stop offset="0.7" stop-color="#3aceff"/><stop offset="1.0" stop-color="#00c0ff"/></linearGradient>
<linearGradient id="w77" gradientUnits="userSpaceOnUse" x1="1198.8" y1="391.4" x2="1123.5" y2="417.1"><stop offset="0" stop-color="#ffffff"/><stop offset="0.1" stop-color="#dbf4ff"/><stop offset="0.25" stop-color="#aae5ff"/><stop offset="0.45" stop-color="#72d4ff"/><stop offset="0.7" stop-color="#39c2ff"/><stop offset="1.0" stop-color="#00b0ff"/></linearGradient>
<linearGradient id="w78" gradientUnits="userSpaceOnUse" x1="1198.8" y1="391.4" x2="1121.2" y2="422.9"><stop offset="0" stop-color="#ffffff"/><stop offset="0.1" stop-color="#d9f1ff"/><stop offset="0.25" stop-color="#a8dfff"/><stop offset="0.45" stop-color="#70cbff"/><stop offset="0.7" stop-color="#37b6ff"/><stop offset="1.0" stop-color="#00a1ff"/></linearGradient>
<linearGradient id="w79" gradientUnits="userSpaceOnUse" x1="1198.8" y1="391.4" x2="1118.9" y2="428.7"><stop offset="0" stop-color="#ffffff"/><stop offset="0.1" stop-color="#d8efff"/><stop offset="0.25" stop-color="#a6daff"/><stop offset="0.45" stop-color="#6ec2ff"/><stop offset="0.7" stop-color="#36aaff"/><stop offset="1.0" stop-color="#0094ff"/></linearGradient>
<linearGradient id="w80" gradientUnits="userSpaceOnUse" x1="1198.8" y1="391.4" x2="1116.6" y2="434.5"><stop offset="0" stop-color="#ffffff"/><stop offset="0.1" stop-color="#d7ecff"/><stop offset="0.25" stop-color="#a4d4ff"/><stop offset="0.45" stop-color="#6cbaff"/><stop offset="0.7" stop-color="#34a0ff"/><stop offset="1.0" stop-color="#0087ff"/></linearGradient>
<linearGradient id="w81" gradientUnits="userSpaceOnUse" x1="1198.8" y1="391.4" x2="1114.3" y2="440.3"><stop offset="0" stop-color="#ffffff"/><stop offset="0.1" stop-color="#d6eaff"/><stop offset="0.25" stop-color="#a2cfff"/><stop offset="0.45" stop-color="#6ab2ff"/><stop offset="0.7" stop-color="#3395ff"/><stop offset="1.0" stop-color="#007bff"/></linearGradient>
<linearGradient id="w82" gradientUnits="userSpaceOnUse" x1="1198.8" y1="391.4" x2="1112.0" y2="446.1"><stop offset="0" stop-color="#ffffff"/><stop offset="0.1" stop-color="#d5e7ff"/><stop offset="0.25" stop-color="#a1caff"/><stop offset="0.45" stop-color="#68aaff"/><stop offset="0.7" stop-color="#328bff"/><stop offset="1.0" stop-color="#006fff"/></linearGradient>
<linearGradient id="w83" gradientUnits="userSpaceOnUse" x1="1198.8" y1="391.4" x2="1109.7" y2="452.0"><stop offset="0" stop-color="#ffffff"/><stop offset="0.1" stop-color="#d4e5ff"/><stop offset="0.25" stop-color="#9fc5ff"/><stop offset="0.45" stop-color="#67a3ff"/><stop offset="0.7" stop-color="#3182ff"/><stop offset="1.0" stop-color="#0065ff"/></linearGradient>
<linearGradient id="w84" gradientUnits="userSpaceOnUse" x1="1198.8" y1="391.4" x2="1107.4" y2="457.8"><stop offset="0" stop-color="#ffffff"/><stop offset="0.1" stop-color="#d3e3ff"/><stop offset="0.25" stop-color="#9dc0ff"/><stop offset="0.45" stop-color="#659cff"/><stop offset="0.7" stop-color="#3079ff"/><stop offset="1.0" stop-color="#005bff"/></linearGradient>
<linearGradient id="w85" gradientUnits="userSpaceOnUse" x1="1198.8" y1="391.4" x2="1105.1" y2="463.6"><stop offset="0" stop-color="#ffffff"/><stop offset="0.1" stop-color="#d2e0ff"/><stop offset="0.25" stop-color="#9bbbff"/><stop offset="0.45" stop-color="#6395ff"/><stop offset="0.7" stop-color="#2e71ff"/><stop offset="1.0" stop-color="#0051ff"/></linearGradient>
<linearGradient id="w86" gradientUnits="userSpaceOnUse" x1="1198.8" y1="391.4" x2="1102.8" y2="469.4"><stop offset="0" stop-color="#ffffff"/><stop offset="0.1" stop-color="#d1deff"/><stop offset="0.25" stop-color="#9ab6ff"/><stop offset="0.45" stop-color="#618eff"/><stop offset="0.7" stop-color="#2d69ff"/><stop offset="1.0" stop-color="#0048ff"/></linearGradient>
<linearGradient id="w87" gradientUnits="userSpaceOnUse" x1="1198.8" y1="391.4" x2="1100.4" y2="475.2"><stop offset="0" stop-color="#ffffff"/><stop offset="0.1" stop-color="#d0dcff"/><stop offset="0.25" stop-color="#98b2ff"/><stop offset="0.45" stop-color="#6088ff"/><stop offset="0.7" stop-color="#2d61ff"/><stop offset="1.0" stop-color="#0040ff"/></linearGradient>
<linearGradient id="w88" gradientUnits="userSpaceOnUse" x1="1198.8" y1="391.4" x2="1098.1" y2="481.0"><stop offset="0" stop-color="#ffffff"/><stop offset="0.1" stop-color="#cfdaff"/><stop offset="0.25" stop-color="#97adff"/><stop offset="0.45" stop-color="#5e81ff"/><stop offset="0.7" stop-color="#2c5aff"/><stop offset="1.0" stop-color="#0037ff"/></linearGradient>
<linearGradient id="w89" gradientUnits="userSpaceOnUse" x1="1198.8" y1="391.4" x2="1095.8" y2="486.9"><stop offset="0" stop-color="#ffffff"/><stop offset="0.1" stop-color="#ced7ff"/><stop offset="0.25" stop-color="#95a9ff"/><stop offset="0.45" stop-color="#5d7bff"/><stop offset="0.7" stop-color="#2b52ff"/><stop offset="1.0" stop-color="#0030ff"/></linearGradient>
<linearGradient id="w90" gradientUnits="userSpaceOnUse" x1="1198.8" y1="391.4" x2="1093.5" y2="492.7"><stop offset="0" stop-color="#ffffff"/><stop offset="0.1" stop-color="#cdd5ff"/><stop offset="0.25" stop-color="#94a5ff"/><stop offset="0.45" stop-color="#5b75ff"/><stop offset="0.7" stop-color="#2a4cff"/><stop offset="1.0" stop-color="#0028ff"/></linearGradient>
<linearGradient id="w91" gradientUnits="userSpaceOnUse" x1="1198.8" y1="391.4" x2="1091.2" y2="498.5"><stop offset="0" stop-color="#ffffff"/><stop offset="0.1" stop-color="#ccd3ff"/><stop offset="0.25" stop-color="#92a0ff"/><stop offset="0.45" stop-color="#5a70ff"/><stop offset="0.7" stop-color="#2945ff"/><stop offset="1.0" stop-color="#0021ff"/></linearGradient>
<linearGradient id="w92" gradientUnits="userSpaceOnUse" x1="1198.8" y1="391.4" x2="1088.9" y2="504.3"><stop offset="0" stop-color="#ffffff"/><stop offset="0.1" stop-color="#cbd1ff"/><stop offset="0.25" stop-color="#919cff"/><stop offset="0.45" stop-color="#596aff"/><stop offset="0.7" stop-color="#283fff"/><stop offset="1.0" stop-color="#001bff"/></linearGradient>
<linearGradient id="w93" gradientUnits="userSpaceOnUse" x1="1198.8" y1="391.4" x2="1086.6" y2="510.1"><stop offset="0" stop-color="#ffffff"/><stop offset="0.1" stop-color="#cacfff"/><stop offset="0.25" stop-color="#8f98ff"/><stop offset="0.45" stop-color="#5765ff"/><stop offset="0.7" stop-color="#2739ff"/><stop offset="1.0" stop-color="#0014ff"/></linearGradient>
<linearGradient id="w94" gradientUnits="userSpaceOnUse" x1="1198.8" y1="391.4" x2="1084.3" y2="515.9"><stop offset="0" stop-color="#ffffff"/><stop offset="0.1" stop-color="#c9ccff"/><stop offset="0.25" stop-color="#8e94ff"/><stop offset="0.45" stop-color="#5660ff"/><stop offset="0.7" stop-color="#2733ff"/><stop offset="1.0" stop-color="#000eff"/></linearGradient>
<linearGradient id="w95" gradientUnits="userSpaceOnUse" x1="1198.8" y1="391.4" x2="1082.0" y2="521.8"><stop offset="0" stop-color="#ffffff"/><stop offset="0.1" stop-color="#c8caff"/><stop offset="0.25" stop-color="#8c90ff"/><stop offset="0.45" stop-color="#555aff"/><stop offset="0.7" stop-color="#262dff"/><stop offset="1.0" stop-color="#0008ff"/></linearGradient>
<linearGradient id="w96" gradientUnits="userSpaceOnUse" x1="1198.8" y1="391.4" x2="1079.7" y2="527.6"><stop offset="0" stop-color="#ffffff"/><stop offset="0.1" stop-color="#c8c8ff"/><stop offset="0.25" stop-color="#8b8cff"/><stop offset="0.45" stop-color="#5456ff"/><stop offset="0.7" stop-color="#2528ff"/><stop offset="1.0" stop-color="#0003ff"/></linearGradient>
<linearGradient id="w97" gradientUnits="userSpaceOnUse" x1="1198.8" y1="391.4" x2="1082.3" y2="529.0"><stop offset="0" stop-color="#ffffff"/><stop offset="0.1" stop-color="#c9c8ff"/><stop offset="0.25" stop-color="#8d8bff"/><stop offset="0.45" stop-color="#5754ff"/><stop offset="0.7" stop-color="#2a25ff"/><stop offset="1.0" stop-color="#0500ff"/></linearGradient>
<linearGradient id="w98" gradientUnits="userSpaceOnUse" x1="1198.8" y1="391.4" x2="1089.8" y2="526.1"><stop offset="0" stop-color="#ffffff"/><stop offset="0.1" stop-color="#ccc8ff"/><stop offset="0.25" stop-color="#938cff"/><stop offset="0.45" stop-color="#5f55ff"/><stop offset="0.7" stop-color="#3326ff"/><stop offset="1.0" stop-color="#0f00ff"/></linearGradient>
<linearGradient id="w99" gradientUnits="userSpaceOnUse" x1="1198.8" y1="391.4" x2="1097.4" y2="523.2"><stop offset="0" stop-color="#ffffff"/><stop offset="0.1" stop-color="#cfc9ff"/><stop offset="0.25" stop-color="#998eff"/><stop offset="0.45" stop-color="#6756ff"/><stop offset="0.7" stop-color="#3d27ff"/><stop offset="1.0" stop-color="#1a00ff"/></linearGradient>
<linearGradient id="w100" gradientUnits="userSpaceOnUse" x1="1198.8" y1="391.4" x2="1104.9" y2="520.3"><stop offset="0" stop-color="#ffffff"/><stop offset="0.1" stop-color="#d2caff"/><stop offset="0.25" stop-color="#a08fff"/><stop offset="0.45" stop-color="#7057ff"/><stop offset="0.7" stop-color="#4727ff"/><stop offset="1.0" stop-color="#2500ff"/></linearGradient>
<linearGradient id="w101" gradientUnits="userSpaceOnUse" x1="1198.8" y1="391.4" x2="1112.5" y2="517.4"><stop offset="0" stop-color="#ffffff"/><stop offset="0.1" stop-color="#d5cbff"/><stop offset="0.25" stop-color="#a691ff"/><stop offset="0.45" stop-color="#7959ff"/><stop offset="0.7" stop-color="#5228ff"/><stop offset="1.0" stop-color="#3100ff"/></linearGradient>
<linearGradient id="w102" gradientUnits="userSpaceOnUse" x1="1198.8" y1="391.4" x2="1120.0" y2="514.5"><stop offset="0" stop-color="#ffffff"/><stop offset="0.1" stop-color="#d8ccff"/><stop offset="0.25" stop-color="#ac92ff"/><stop offset="0.45" stop-color="#825aff"/><stop offset="0.7" stop-color="#5d29ff"/><stop offset="1.0" stop-color="#3e00ff"/></linearGradient>
<linearGradient id="w103" gradientUnits="userSpaceOnUse" x1="1198.8" y1="391.4" x2="1127.6" y2="511.6"><stop offset="0" stop-color="#ffffff"/><stop offset="0.1" stop-color="#dccdff"/><stop offset="0.25" stop-color="#b394ff"/><stop offset="0.45" stop-color="#8b5cff"/><stop offset="0.7" stop-color="#682aff"/><stop offset="1.0" stop-color="#4b00ff"/></linearGradient>
<linearGradient id="w104" gradientUnits="userSpaceOnUse" x1="1198.8" y1="391.4" x2="1135.1" y2="508.7"><stop offset="0" stop-color="#ffffff"/><stop offset="0.1" stop-color="#dfceff"/><stop offset="0.25" stop-color="#ba95ff"/><stop offset="0.45" stop-color="#955dff"/><stop offset="0.7" stop-color="#742bff"/><stop offset="1.0" stop-color="#5800ff"/></linearGradient>
<linearGradient id="w105" gradientUnits="userSpaceOnUse" x1="1198.8" y1="391.4" x2="1142.6" y2="505.8"><stop offset="0" stop-color="#ffffff"/><stop offset="0.1" stop-color="#e2cfff"/><stop offset="0.25" stop-color="#c197ff"/><stop offset="0.45" stop-color="#9f5eff"/><stop offset="0.7" stop-color="#812cff"/><stop offset="1.0" stop-color="#6600ff"/></linearGradient>
<linearGradient id="w106" gradientUnits="userSpaceOnUse" x1="1198.8" y1="391.4" x2="1150.2" y2="502.9"><stop offset="0" stop-color="#ffffff"/><stop offset="0.1" stop-color="#e6d0ff"/><stop offset="0.25" stop-color="#c898ff"/><stop offset="0.45" stop-color="#a960ff"/><stop offset="0.7" stop-color="#8d2dff"/><stop offset="1.0" stop-color="#7500ff"/></linearGradient>
<linearGradient id="w107" gradientUnits="userSpaceOnUse" x1="1198.8" y1="391.4" x2="1157.7" y2="499.9"><stop offset="0" stop-color="#ffffff"/><stop offset="0.1" stop-color="#e9d1ff"/><stop offset="0.25" stop-color="#cf9aff"/><stop offset="0.45" stop-color="#b462ff"/><stop offset="0.7" stop-color="#9b2eff"/><stop offset="1.0" stop-color="#8500ff"/></linearGradient>
<linearGradient id="w108" gradientUnits="userSpaceOnUse" x1="1198.8" y1="391.4" x2="1165.3" y2="497.0"><stop offset="0" stop-color="#ffffff"/><stop offset="0.1" stop-color="#ecd2ff"/><stop offset="0.25" stop-color="#d69bff"/><stop offset="0.45" stop-color="#bf63ff"/><stop offset="0.7" stop-color="#a92fff"/><stop offset="1.0" stop-color="#9600ff"/></linearGradient>
<linearGradient id="w109" gradientUnits="userSpaceOnUse" x1="1198.8" y1="391.4" x2="1172.8" y2="494.1"><stop offset="0" stop-color="#ffffff"/><stop offset="0.1" stop-color="#f0d3ff"/><stop offset="0.25" stop-color="#dd9dff"/><stop offset="0.45" stop-color="#ca65ff"/><stop offset="0.7" stop-color="#b830ff"/><stop offset="1.0" stop-color="#a800ff"/></linearGradient>
<linearGradient id="w110" gradientUnits="userSpaceOnUse" x1="1198.8" y1="391.4" x2="1180.4" y2="491.2"><stop offset="0" stop-color="#ffffff"/><stop offset="0.1" stop-color="#f3d4ff"/><stop offset="0.25" stop-color="#e59fff"/><stop offset="0.45" stop-color="#d667ff"/><stop offset="0.7" stop-color="#c731ff"/><stop offset="1.0" stop-color="#ba00ff"/></linearGradient>
<linearGradient id="w111" gradientUnits="userSpaceOnUse" x1="1198.8" y1="391.4" x2="1187.9" y2="488.3"><stop offset="0" stop-color="#ffffff"/><stop offset="0.1" stop-color="#f7d5ff"/><stop offset="0.25" stop-color="#eda1ff"/><stop offset="0.45" stop-color="#e268ff"/><stop offset="0.7" stop-color="#d832ff"/><stop offset="1.0" stop-color="#ce00ff"/></linearGradient>
<linearGradient id="w112" gradientUnits="userSpaceOnUse" x1="1198.8" y1="391.4" x2="1195.5" y2="485.4"><stop offset="0" stop-color="#ffffff"/><stop offset="0.1" stop-color="#fad6ff"/><stop offset="0.25" stop-color="#f5a2ff"/><stop offset="0.45" stop-color="#ef6aff"/><stop offset="0.7" stop-color="#e933ff"/><stop offset="1.0" stop-color="#e300ff"/></linearGradient>
<linearGradient id="w113" gradientUnits="userSpaceOnUse" x1="1198.8" y1="391.4" x2="1203.0" y2="482.5"><stop offset="0" stop-color="#ffffff"/><stop offset="0.1" stop-color="#fed7ff"/><stop offset="0.25" stop-color="#fda4ff"/><stop offset="0.45" stop-color="#fc6cff"/><stop offset="0.7" stop-color="#fb34ff"/><stop offset="1.0" stop-color="#f900ff"/></linearGradient>
<linearGradient id="w114" gradientUnits="userSpaceOnUse" x1="1198.8" y1="391.4" x2="1210.6" y2="479.6"><stop offset="0" stop-color="#ffffff"/><stop offset="0.1" stop-color="#ffd6fc"/><stop offset="0.25" stop-color="#ffa2f9"/><stop offset="0.45" stop-color="#ff6af5"/><stop offset="0.7" stop-color="#ff33f1"/><stop offset="1.0" stop-color="#ff00ee"/></linearGradient>
<linearGradient id="w115" gradientUnits="userSpaceOnUse" x1="1198.8" y1="391.4" x2="1218.1" y2="476.7"><stop offset="0" stop-color="#ffffff"/><stop offset="0.1" stop-color="#ffd4f9"/><stop offset="0.25" stop-color="#ff9ff1"/><stop offset="0.45" stop-color="#ff67e9"/><stop offset="0.7" stop-color="#ff31e1"/><stop offset="1.0" stop-color="#ff00da"/></linearGradient>
<linearGradient id="w116" gradientUnits="userSpaceOnUse" x1="1198.8" y1="391.4" x2="1225.7" y2="473.8"><stop offset="0" stop-color="#ffffff"/><stop offset="0.1" stop-color="#ffd2f5"/><stop offset="0.25" stop-color="#ff9ce9"/><stop offset="0.45" stop-color="#ff63dd"/><stop offset="0.7" stop-color="#ff2fd2"/><stop offset="1.0" stop-color="#ff00c8"/></linearGradient>
<linearGradient id="w117" gradientUnits="userSpaceOnUse" x1="1198.8" y1="391.4" x2="1233.2" y2="470.9"><stop offset="0" stop-color="#ffffff"/><stop offset="0.1" stop-color="#ffd0f2"/><stop offset="0.25" stop-color="#ff99e2"/><stop offset="0.45" stop-color="#ff60d2"/><stop offset="0.7" stop-color="#ff2dc4"/><stop offset="1.0" stop-color="#ff00b7"/></linearGradient>
<linearGradient id="w118" gradientUnits="userSpaceOnUse" x1="1198.8" y1="391.4" x2="1240.8" y2="468.0"><stop offset="0" stop-color="#ffffff"/><stop offset="0.1" stop-color="#ffcfef"/><stop offset="0.25" stop-color="#ff96db"/><stop offset="0.45" stop-color="#ff5dc8"/><stop offset="0.7" stop-color="#ff2bb7"/><stop offset="1.0" stop-color="#ff00a8"/></linearGradient>
<linearGradient id="w119" gradientUnits="userSpaceOnUse" x1="1198.8" y1="391.4" x2="1248.3" y2="465.0"><stop offset="0" stop-color="#ffffff"/><stop offset="0.1" stop-color="#ffcdeb"/><stop offset="0.25" stop-color="#ff93d5"/><stop offset="0.45" stop-color="#ff5bbe"/><stop offset="0.7" stop-color="#ff29ab"/><stop offset="1.0" stop-color="#ff009b"/></linearGradient>
<linearGradient id="w120" gradientUnits="userSpaceOnUse" x1="1198.8" y1="391.4" x2="1255.8" y2="462.1"><stop offset="0" stop-color="#ffffff"/><stop offset="0.1" stop-color="#ffcbe8"/><stop offset="0.25" stop-color="#ff90ce"/><stop offset="0.45" stop-color="#ff58b5"/><stop offset="0.7" stop-color="#ff28a0"/><stop offset="1.0" stop-color="#ff008e"/></linearGradient>
<linearGradient id="w121" gradientUnits="userSpaceOnUse" x1="1198.8" y1="391.4" x2="1263.4" y2="459.2"><stop offset="0" stop-color="#ffffff"/><stop offset="0.1" stop-color="#ffc9e5"/><stop offset="0.25" stop-color="#ff8ec8"/><stop offset="0.45" stop-color="#ff56ad"/><stop offset="0.7" stop-color="#ff2796"/><stop offset="1.0" stop-color="#ff0083"/></linearGradient>
<linearGradient id="w122" gradientUnits="userSpaceOnUse" x1="1198.8" y1="391.4" x2="1270.9" y2="456.3"><stop offset="0" stop-color="#ffffff"/><stop offset="0.1" stop-color="#ffc8e2"/><stop offset="0.25" stop-color="#ff8bc2"/><stop offset="0.45" stop-color="#ff54a5"/><stop offset="0.7" stop-color="#ff258c"/><stop offset="1.0" stop-color="#ff0079"/></linearGradient>
<linearGradient id="w123" gradientUnits="userSpaceOnUse" x1="1198.8" y1="391.4" x2="1278.5" y2="453.4"><stop offset="0" stop-color="#ffffff"/><stop offset="0.1" stop-color="#ffc6df"/><stop offset="0.25" stop-color="#ff89bc"/><stop offset="0.45" stop-color="#ff519d"/><stop offset="0.7" stop-color="#ff2483"/><stop offset="1.0" stop-color="#ff006f"/></linearGradient>
<linearGradient id="w124" gradientUnits="userSpaceOnUse" x1="1198.8" y1="391.4" x2="1286.0" y2="450.5"><stop offset="0" stop-color="#ffffff"/><stop offset="0.1" stop-color="#ffc4dc"/><stop offset="0.25" stop-color="#ff86b6"/><stop offset="0.45" stop-color="#ff4f96"/><stop offset="0.7" stop-color="#ff237b"/><stop offset="1.0" stop-color="#ff0066"/></linearGradient>
<linearGradient id="w125" gradientUnits="userSpaceOnUse" x1="1198.8" y1="391.4" x2="1293.6" y2="447.6"><stop offset="0" stop-color="#ffffff"/><stop offset="0.1" stop-color="#ffc3d9"/><stop offset="0.25" stop-color="#ff84b1"/><stop offset="0.45" stop-color="#ff4e8f"/><stop offset="0.7" stop-color="#ff2273"/><stop offset="1.0" stop-color="#ff005d"/></linearGradient>
<linearGradient id="w126" gradientUnits="userSpaceOnUse" x1="1198.8" y1="391.4" x2="1301.1" y2="444.7"><stop offset="0" stop-color="#ffffff"/><stop offset="0.1" stop-color="#ffc1d6"/><stop offset="0.25" stop-color="#ff82ac"/><stop offset="0.45" stop-color="#ff4c88"/><stop offset="0.7" stop-color="#ff216b"/><stop offset="1.0" stop-color="#ff0056"/></linearGradient>
<linearGradient id="w127" gradientUnits="userSpaceOnUse" x1="1198.8" y1="391.4" x2="1308.7" y2="441.8"><stop offset="0" stop-color="#ffffff"/><stop offset="0.1" stop-color="#ffbfd3"/><stop offset="0.25" stop-color="#ff80a7"/><stop offset="0.45" stop-color="#ff4a82"/><stop offset="0.7" stop-color="#ff2064"/><stop offset="1.0" stop-color="#ff004e"/></linearGradient>
<linearGradient id="w128" gradientUnits="userSpaceOnUse" x1="1198.8" y1="391.4" x2="1316.2" y2="438.9"><stop offset="0" stop-color="#ffffff"/><stop offset="0.1" stop-color="#ffbed0"/><stop offset="0.25" stop-color="#ff7ea2"/><stop offset="0.45" stop-color="#ff487b"/><stop offset="0.7" stop-color="#ff1f5e"/><stop offset="1.0" stop-color="#ff0048"/></linearGradient>
<linearGradient id="w129" gradientUnits="userSpaceOnUse" x1="1198.8" y1="391.4" x2="1323.8" y2="436.0"><stop offset="0" stop-color="#ffffff"/><stop offset="0.1" stop-color="#ffbccd"/><stop offset="0.25" stop-color="#ff7c9d"/><stop offset="0.45" stop-color="#ff4776"/><stop offset="0.7" stop-color="#ff1e58"/><stop offset="1.0" stop-color="#ff0041"/></linearGradient>
<linearGradient id="w130" gradientUnits="userSpaceOnUse" x1="1198.8" y1="391.4" x2="1331.3" y2="433.1"><stop offset="0" stop-color="#ffffff"/><stop offset="0.1" stop-color="#ffbbcb"/><stop offset="0.25" stop-color="#ff7a99"/><stop offset="0.45" stop-color="#ff4570"/><stop offset="0.7" stop-color="#ff1d52"/><stop offset="1.0" stop-color="#ff003b"/></linearGradient>
<linearGradient id="w131" gradientUnits="userSpaceOnUse" x1="1198.8" y1="391.4" x2="1338.9" y2="430.1"><stop offset="0" stop-color="#ffffff"/><stop offset="0.1" stop-color="#ffb9c8"/><stop offset="0.25" stop-color="#ff7894"/><stop offset="0.45" stop-color="#ff446b"/><stop offset="0.7" stop-color="#ff1d4c"/><stop offset="1.0" stop-color="#ff0035"/></linearGradient>
<linearGradient id="w132" gradientUnits="userSpaceOnUse" x1="1198.8" y1="391.4" x2="1346.4" y2="427.2"><stop offset="0" stop-color="#ffffff"/><stop offset="0.1" stop-color="#ffb8c5"/><stop offset="0.25" stop-color="#ff7690"/><stop offset="0.45" stop-color="#ff4266"/><stop offset="0.7" stop-color="#ff1c47"/><stop offset="1.0" stop-color="#ff0030"/></linearGradient>
<linearGradient id="w133" gradientUnits="userSpaceOnUse" x1="1198.8" y1="391.4" x2="1354.0" y2="424.3"><stop offset="0" stop-color="#ffffff"/><stop offset="0.1" stop-color="#ffb6c3"/><stop offset="0.25" stop-color="#ff748c"/><stop offset="0.45" stop-color="#ff4161"/><stop offset="0.7" stop-color="#ff1b42"/><stop offset="1.0" stop-color="#ff002b"/></linearGradient>
<linearGradient id="w134" gradientUnits="userSpaceOnUse" x1="1198.8" y1="391.4" x2="1361.5" y2="421.4"><stop offset="0" stop-color="#ffffff"/><stop offset="0.1" stop-color="#ffb5c0"/><stop offset="0.25" stop-color="#ff7288"/><stop offset="0.45" stop-color="#ff405c"/><stop offset="0.7" stop-color="#ff1b3d"/><stop offset="1.0" stop-color="#ff0026"/></linearGradient>
<linearGradient id="w135" gradientUnits="userSpaceOnUse" x1="1198.8" y1="391.4" x2="1369.1" y2="418.5"><stop offset="0" stop-color="#ffffff"/><stop offset="0.1" stop-color="#ffb4be"/><stop offset="0.25" stop-color="#ff7184"/><stop offset="0.45" stop-color="#ff3e58"/><stop offset="0.7" stop-color="#ff1a38"/><stop offset="1.0" stop-color="#ff0022"/></linearGradient>
<linearGradient id="w136" gradientUnits="userSpaceOnUse" x1="1198.8" y1="391.4" x2="1376.6" y2="415.6"><stop offset="0" stop-color="#ffffff"/><stop offset="0.1" stop-color="#ffb2bb"/><stop offset="0.25" stop-color="#ff6f80"/><stop offset="0.45" stop-color="#ff3d53"/><stop offset="0.7" stop-color="#ff1934"/><stop offset="1.0" stop-color="#ff001d"/></linearGradient>
<linearGradient id="w137" gradientUnits="userSpaceOnUse" x1="1198.8" y1="391.4" x2="1384.1" y2="412.7"><stop offset="0" stop-color="#ffffff"/><stop offset="0.1" stop-color="#ffb1b9"/><stop offset="0.25" stop-color="#ff6e7c"/><stop offset="0.45" stop-color="#ff3c4f"/><stop offset="0.7" stop-color="#ff1930"/><stop offset="1.0" stop-color="#ff0019"/></linearGradient>
<linearGradient id="w138" gradientUnits="userSpaceOnUse" x1="1198.8" y1="391.4" x2="1391.7" y2="409.8"><stop offset="0" stop-color="#ffffff"/><stop offset="0.1" stop-color="#ffb0b6"/><stop offset="0.25" stop-color="#ff6c78"/><stop offset="0.45" stop-color="#ff3b4b"/><stop offset="0.7" stop-color="#ff182c"/><stop offset="1.0" stop-color="#ff0015"/></linearGradient>
<linearGradient id="w139" gradientUnits="userSpaceOnUse" x1="1198.8" y1="391.4" x2="1399.2" y2="406.9"><stop offset="0" stop-color="#ffffff"/><stop offset="0.1" stop-color="#ffaeb4"/><stop offset="0.25" stop-color="#ff6b75"/><stop offset="0.45" stop-color="#ff3a47"/><stop offset="0.7" stop-color="#ff1828"/><stop offset="1.0" stop-color="#ff0012"/></linearGradient>
<linearGradient id="w140" gradientUnits="userSpaceOnUse" x1="1198.8" y1="391.4" x2="1406.8" y2="404.0"><stop offset="0" stop-color="#ffffff"/><stop offset="0.1" stop-color="#ffadb1"/><stop offset="0.25" stop-color="#ff6971"/><stop offset="0.45" stop-color="#ff3944"/><stop offset="0.7" stop-color="#ff1724"/><stop offset="1.0" stop-color="#ff000e"/></linearGradient>
<linearGradient id="w141" gradientUnits="userSpaceOnUse" x1="1198.8" y1="391.4" x2="1414.3" y2="401.1"><stop offset="0" stop-color="#ffffff"/><stop offset="0.1" stop-color="#ffacaf"/><stop offset="0.25" stop-color="#ff686e"/><stop offset="0.45" stop-color="#ff3840"/><stop offset="0.7" stop-color="#ff1721"/><stop offset="1.0" stop-color="#ff000b"/></linearGradient>
<linearGradient id="w142" gradientUnits="userSpaceOnUse" x1="1198.8" y1="391.4" x2="1421.9" y2="398.2"><stop offset="0" stop-color="#ffffff"/><stop offset="0.1" stop-color="#ffaaad"/><stop offset="0.25" stop-color="#ff666b"/><stop offset="0.45" stop-color="#ff373d"/><stop offset="0.7" stop-color="#ff161d"/><stop offset="1.0" stop-color="#ff0008"/></linearGradient>
<linearGradient id="w143" gradientUnits="userSpaceOnUse" x1="1198.8" y1="391.4" x2="1429.4" y2="395.3"><stop offset="0" stop-color="#ffffff"/><stop offset="0.1" stop-color="#ffa9ab"/><stop offset="0.25" stop-color="#ff6568"/><stop offset="0.45" stop-color="#ff3639"/><stop offset="0.7" stop-color="#ff161a"/><stop offset="1.0" stop-color="#ff0004"/></linearGradient>
<linearGradient id="w144" gradientUnits="userSpaceOnUse" x1="1198.8" y1="391.4" x2="1437.0" y2="392.3"><stop offset="0" stop-color="#ffffff"/><stop offset="0.1" stop-color="#ffa8a8"/><stop offset="0.25" stop-color="#ff6465"/><stop offset="0.45" stop-color="#ff3536"/><stop offset="0.7" stop-color="#ff1517"/><stop offset="1.0" stop-color="#ff0001"/></linearGradient>
<linearGradient id="o145" gradientUnits="userSpaceOnUse" x1="1436.1" y1="388.3" x2="1458.6" y2="388.0"><stop offset="0.00" stop-color="#990200"/><stop offset="0.20" stop-color="#990100"/><stop offset="0.40" stop-color="#990000"/><stop offset="0.60" stop-color="#990000"/><stop offset="0.80" stop-color="#990000"/><stop offset="1.00" stop-color="#990000"/></linearGradient>
<linearGradient id="o146" gradientUnits="userSpaceOnUse" x1="1425.6" y1="382.5" x2="1449.3" y2="381.6"><stop offset="0.00" stop-color="#990500"/><stop offset="0.20" stop-color="#990500"/><stop offset="0.40" stop-color="#990400"/><stop offset="0.60" stop-color="#990300"/><stop offset="0.80" stop-color="#990300"/><stop offset="1.00" stop-color="#990200"/></linearGradient>
<linearGradient id="o147" gradientUnits="userSpaceOnUse" x1="1416.0" y1="377.2" x2="1440.7" y2="375.6"><stop offset="0.00" stop-color="#990900"/><stop offset="0.20" stop-color="#990800"/><stop offset="0.40" stop-color="#990800"/><stop offset="0.60" stop-color="#990700"/><stop offset="0.80" stop-color="#990600"/><stop offset="1.00" stop-color="#990600"/></linearGradient>
<linearGradient id="o148" gradientUnits="userSpaceOnUse" x1="1407.2" y1="372.3" x2="1432.6" y2="369.9"><stop offset="0.00" stop-color="#990d00"/><stop offset="0.20" stop-color="#990c00"/><stop offset="0.40" stop-color="#990b00"/><stop offset="0.60" stop-color="#990a00"/><stop offset="0.80" stop-color="#990a00"/><stop offset="1.00" stop-color="#990900"/></linearGradient>
<linearGradient id="o149" gradientUnits="userSpaceOnUse" x1="1399.0" y1="367.7" x2="1425.0" y2="364.6"><stop offset="0.00" stop-color="#991000"/><stop offset="0.20" stop-color="#991000"/><stop offset="0.40" stop-color="#990f00"/><stop offset="0.60" stop-color="#990e00"/><stop offset="0.80" stop-color="#990d00"/><stop offset="1.00" stop-color="#990c00"/></linearGradient>
<linearGradient id="o150" gradientUnits="userSpaceOnUse" x1="1391.4" y1="363.5" x2="1417.8" y2="359.6"><stop offset="0.00" stop-color="#991400"/><stop offset="0.20" stop-color="#991300"/><stop offset="0.40" stop-color="#991200"/><stop offset="0.60" stop-color="#991200"/><stop offset="0.80" stop-color="#991100"/><stop offset="1.00" stop-color="#991000"/></linearGradient>
<linearGradient id="o151" gradientUnits="userSpaceOnUse" x1="1384.3" y1="359.5" x2="1411.1" y2="354.9"><stop offset="0.00" stop-color="#991800"/><stop offset="0.20" stop-color="#991700"/><stop offset="0.40" stop-color="#991600"/><stop offset="0.60" stop-color="#991500"/><stop offset="0.80" stop-color="#991400"/><stop offset="1.00" stop-color="#991300"/></linearGradient>
<linearGradient id="o152" gradientUnits="userSpaceOnUse" x1="1377.6" y1="355.8" x2="1404.7" y2="350.5"><stop offset="0.00" stop-color="#991c00"/><stop offset="0.20" stop-color="#991b00"/><stop offset="0.40" stop-color="#991a00"/><stop offset="0.60" stop-color="#991900"/><stop offset="0.80" stop-color="#991800"/><stop offset="1.00" stop-color="#991700"/></linearGradient>
<linearGradient id="o153" gradientUnits="userSpaceOnUse" x1="1371.4" y1="352.4" x2="1398.6" y2="346.2"><stop offset="0.00" stop-color="#992000"/><stop offset="0.20" stop-color="#991e00"/><stop offset="0.40" stop-color="#991d00"/><stop offset="0.60" stop-color="#991c00"/><stop offset="0.80" stop-color="#991b00"/><stop offset="1.00" stop-color="#991b00"/></linearGradient>
<linearGradient id="o154" gradientUnits="userSpaceOnUse" x1="1365.5" y1="349.1" x2="1392.8" y2="342.1"><stop offset="0.00" stop-color="#992300"/><stop offset="0.20" stop-color="#992200"/><stop offset="0.40" stop-color="#992100"/><stop offset="0.60" stop-color="#992000"/><stop offset="0.80" stop-color="#991f00"/><stop offset="1.00" stop-color="#991e00"/></linearGradient>
<linearGradient id="o155" gradientUnits="userSpaceOnUse" x1="1359.9" y1="346.0" x2="1387.2" y2="338.3"><stop offset="0.00" stop-color="#992700"/><stop offset="0.20" stop-color="#992600"/><stop offset="0.40" stop-color="#992500"/><stop offset="0.60" stop-color="#992400"/><stop offset="0.80" stop-color="#992300"/><stop offset="1.00" stop-color="#992200"/></linearGradient>
<linearGradient id="o156" gradientUnits="userSpaceOnUse" x1="1354.6" y1="343.0" x2="1381.9" y2="334.6"><stop offset="0.00" stop-color="#992b00"/><stop offset="0.20" stop-color="#992a00"/><stop offset="0.40" stop-color="#992900"/><stop offset="0.60" stop-color="#992800"/><stop offset="0.80" stop-color="#992700"/><stop offset="1.00" stop-color="#992600"/></linearGradient>
<linearGradient id="o157" gradientUnits="userSpaceOnUse" x1="1349.5" y1="340.2" x2="1376.7" y2="331.0"><stop offset="0.00" stop-color="#992f00"/><stop offset="0.20" stop-color="#992e00"/><stop offset="0.40" stop-color="#992d00"/><stop offset="0.60" stop-color="#992c00"/><stop offset="0.80" stop-color="#992a00"/><stop offset="1.00" stop-color="#992900"/></linearGradient>
<linearGradient id="o158" gradientUnits="userSpaceOnUse" x1="1344.7" y1="337.6" x2="1371.8" y2="327.6"><stop offset="0.00" stop-color="#993300"/><stop offset="0.20" stop-color="#993200"/><stop offset="0.40" stop-color="#993100"/><stop offset="0.60" stop-color="#993000"/><stop offset="0.80" stop-color="#992e00"/><stop offset="1.00" stop-color="#992d00"/></linearGradient>
<linearGradient id="o159" gradientUnits="userSpaceOnUse" x1="1340.1" y1="335.0" x2="1367.1" y2="324.3"><stop offset="0.00" stop-color="#993700"/><stop offset="0.20" stop-color="#993600"/><stop offset="0.40" stop-color="#993500"/><stop offset="0.60" stop-color="#993400"/><stop offset="0.80" stop-color="#993200"/><stop offset="1.00" stop-color="#993100"/></linearGradient>
<linearGradient id="o160" gradientUnits="userSpaceOnUse" x1="1335.7" y1="332.6" x2="1362.5" y2="321.1"><stop offset="0.00" stop-color="#993b00"/><stop offset="0.20" stop-color="#993a00"/><stop offset="0.40" stop-color="#993900"/><stop offset="0.60" stop-color="#993800"/><stop offset="0.80" stop-color="#993700"/><stop offset="1.00" stop-color="#993500"/></linearGradient>
<linearGradient id="o161" gradientUnits="userSpaceOnUse" x1="1331.5" y1="330.2" x2="1358.0" y2="318.0"><stop offset="0.00" stop-color="#994000"/><stop offset="0.20" stop-color="#993e00"/><stop offset="0.40" stop-color="#993d00"/><stop offset="0.60" stop-color="#993c00"/><stop offset="0.80" stop-color="#993b00"/><stop offset="1.00" stop-color="#993a00"/></linearGradient>
<linearGradient id="o162" gradientUnits="userSpaceOnUse" x1="1327.4" y1="328.0" x2="1353.7" y2="315.0"><stop offset="0.00" stop-color="#994400"/><stop offset="0.20" stop-color="#994300"/><stop offset="0.40" stop-color="#994100"/><stop offset="0.60" stop-color="#994000"/><stop offset="0.80" stop-color="#993f00"/><stop offset="1.00" stop-color="#993e00"/></linearGradient>
<linearGradient id="o163" gradientUnits="userSpaceOnUse" x1="1323.5" y1="325.8" x2="1349.6" y2="312.1"><stop offset="0.00" stop-color="#994800"/><stop offset="0.20" stop-color="#994700"/><stop offset="0.40" stop-color="#994600"/><stop offset="0.60" stop-color="#994500"/><stop offset="0.80" stop-color="#994300"/><stop offset="1.00" stop-color="#994200"/></linearGradient>
<linearGradient id="o164" gradientUnits="userSpaceOnUse" x1="1319.7" y1="323.7" x2="1345.5" y2="309.2"><stop offset="0.00" stop-color="#994d00"/><stop offset="0.20" stop-color="#994c00"/><stop offset="0.40" stop-color="#994a00"/><stop offset="0.60" stop-color="#994900"/><stop offset="0.80" stop-color="#994800"/><stop offset="1.00" stop-color="#994700"/></linearGradient>
<linearGradient id="o165" gradientUnits="userSpaceOnUse" x1="1316.0" y1="321.6" x2="1341.5" y2="306.5"><stop offset="0.00" stop-color="#995100"/><stop offset="0.20" stop-color="#995000"/><stop offset="0.40" stop-color="#994f00"/><stop offset="0.60" stop-color="#994e00"/><stop offset="0.80" stop-color="#994d00"/><stop offset="1.00" stop-color="#994c00"/></linearGradient>
<linearGradient id="o166" gradientUnits="userSpaceOnUse" x1="1312.5" y1="319.7" x2="1337.7" y2="303.8"><stop offset="0.00" stop-color="#995600"/><stop offset="0.20" stop-color="#995500"/><stop offset="0.40" stop-color="#995400"/><stop offset="0.60" stop-color="#995300"/><stop offset="0.80" stop-color="#995200"/><stop offset="1.00" stop-color="#995100"/></linearGradient>
<linearGradient id="o167" gradientUnits="userSpaceOnUse" x1="1309.0" y1="317.7" x2="1333.9" y2="301.1"><stop offset="0.00" stop-color="#995b00"/><stop offset="0.20" stop-color="#995a00"/><stop offset="0.40" stop-color="#995900"/><stop offset="0.60" stop-color="#995800"/><stop offset="0.80" stop-color="#995700"/><stop offset="1.00" stop-color="#995600"/></linearGradient>
<linearGradient id="o168" gradientUnits="userSpaceOnUse" x1="1305.7" y1="315.9" x2="1330.2" y2="298.5"><stop offset="0.00" stop-color="#996000"/><stop offset="0.20" stop-color="#995f00"/><stop offset="0.40" stop-color="#995e00"/><stop offset="0.60" stop-color="#995d00"/><stop offset="0.80" stop-color="#995c00"/><stop offset="1.00" stop-color="#995b00"/></linearGradient>
<linearGradient id="o169" gradientUnits="userSpaceOnUse" x1="1302.4" y1="314.0" x2="1326.5" y2="296.0"><stop offset="0.00" stop-color="#996500"/><stop offset="0.20" stop-color="#996400"/><stop offset="0.40" stop-color="#996300"/><stop offset="0.60" stop-color="#996200"/><stop offset="0.80" stop-color="#996100"/><stop offset="1.00" stop-color="#996000"/></linearGradient>
<linearGradient id="o170" gradientUnits="userSpaceOnUse" x1="1299.2" y1="312.3" x2="1323.0" y2="293.5"><stop offset="0.00" stop-color="#996b00"/><stop offset="0.20" stop-color="#996a00"/><stop offset="0.40" stop-color="#996900"/><stop offset="0.60" stop-color="#996800"/><stop offset="0.80" stop-color="#996700"/><stop offset="1.00" stop-color="#996600"/></linearGradient>
<linearGradient id="o171" gradientUnits="userSpaceOnUse" x1="1296.0" y1="310.5" x2="1319.4" y2="291.1"><stop offset="0.00" stop-color="#997000"/><stop offset="0.20" stop-color="#996f00"/><stop offset="0.40" stop-color="#996e00"/><stop offset="0.60" stop-color="#996e00"/><stop offset="0.80" stop-color="#996d00"/><stop offset="1.00" stop-color="#996c00"/></linearGradient>
<linearGradient id="o172" gradientUnits="userSpaceOnUse" x1="1293.0" y1="308.8" x2="1316.0" y2="288.6"><stop offset="0.00" stop-color="#997600"/><stop offset="0.20" stop-color="#997500"/><stop offset="0.40" stop-color="#997400"/><stop offset="0.60" stop-color="#997400"/><stop offset="0.80" stop-color="#997300"/><stop offset="1.00" stop-color="#997200"/></linearGradient>
<linearGradient id="o173" gradientUnits="userSpaceOnUse" x1="1289.9" y1="307.1" x2="1312.5" y2="286.3"><stop offset="0.00" stop-color="#997c00"/><stop offset="0.20" stop-color="#997b00"/><stop offset="0.40" stop-color="#997b00"/><stop offset="0.60" stop-color="#997a00"/><stop offset="0.80" stop-color="#997900"/><stop offset="1.00" stop-color="#997900"/></linearGradient>
<linearGradient id="o174" gradientUnits="userSpaceOnUse" x1="1287.0" y1="305.5" x2="1309.1" y2="283.9"><stop offset="0.00" stop-color="#998200"/><stop offset="0.20" stop-color="#998200"/><stop offset="0.40" stop-color="#998100"/><stop offset="0.60" stop-color="#998100"/><stop offset="0.80" stop-color="#998000"/><stop offset="1.00" stop-color="#998000"/></linearGradient>
<linearGradient id="o175" gradientUnits="userSpaceOnUse" x1="1284.1" y1="303.9" x2="1305.8" y2="281.6"><stop offset="0.00" stop-color="#998900"/><stop offset="0.20" stop-color="#998800"/><stop offset="0.40" stop-color="#998800"/><stop offset="0.60" stop-color="#998800"/><stop offset="0.80" stop-color="#998700"/><stop offset="1.00" stop-color="#998700"/></linearGradient>
<linearGradient id="o176" gradientUnits="userSpaceOnUse" x1="1281.2" y1="302.3" x2="1302.4" y2="279.3"><stop offset="0.00" stop-color="#999000"/><stop offset="0.20" stop-color="#999000"/><stop offset="0.40" stop-color="#998f00"/><stop offset="0.60" stop-color="#998f00"/><stop offset="0.80" stop-color="#998f00"/><stop offset="1.00" stop-color="#998f00"/></linearGradient>
<linearGradient id="o177" gradientUnits="userSpaceOnUse" x1="1278.3" y1="300.7" x2="1299.1" y2="277.0"><stop offset="0.00" stop-color="#999700"/><stop offset="0.20" stop-color="#999700"/><stop offset="0.40" stop-color="#999700"/><stop offset="0.60" stop-color="#999700"/><stop offset="0.80" stop-color="#999700"/><stop offset="1.00" stop-color="#999700"/></linearGradient>
<linearGradient id="o178" gradientUnits="userSpaceOnUse" x1="1275.5" y1="299.1" x2="1295.9" y2="274.7"><stop offset="0.00" stop-color="#949900"/><stop offset="0.20" stop-color="#939900"/><stop offset="0.40" stop-color="#939900"/><stop offset="0.60" stop-color="#939900"/><stop offset="0.80" stop-color="#939900"/><stop offset="1.00" stop-color="#939900"/></linearGradient>
<linearGradient id="o179" gradientUnits="userSpaceOnUse" x1="1272.7" y1="297.6" x2="1292.6" y2="272.4"><stop offset="0.00" stop-color="#8c9900"/><stop offset="0.20" stop-color="#8c9900"/><stop offset="0.40" stop-color="#8c9900"/><stop offset="0.60" stop-color="#8b9900"/><stop offset="0.80" stop-color="#8b9900"/><stop offset="1.00" stop-color="#8b9900"/></linearGradient>
<linearGradient id="o180" gradientUnits="userSpaceOnUse" x1="1270.0" y1="296.1" x2="1289.3" y2="270.2"><stop offset="0.00" stop-color="#869900"/><stop offset="0.20" stop-color="#859900"/><stop offset="0.40" stop-color="#849900"/><stop offset="0.60" stop-color="#849900"/><stop offset="0.80" stop-color="#839900"/><stop offset="1.00" stop-color="#839900"/></linearGradient>
<linearGradient id="o181" gradientUnits="userSpaceOnUse" x1="1267.2" y1="294.5" x2="1286.1" y2="267.9"><stop offset="0.00" stop-color="#7f9900"/><stop offset="0.20" stop-color="#7e9900"/><stop offset="0.40" stop-color="#7d9900"/><stop offset="0.60" stop-color="#7d9900"/><stop offset="0.80" stop-color="#7c9900"/><stop offset="1.00" stop-color="#7b9900"/></linearGradient>
<linearGradient id="o182" gradientUnits="userSpaceOnUse" x1="1264.5" y1="293.0" x2="1282.8" y2="265.7"><stop offset="0.00" stop-color="#799900"/><stop offset="0.20" stop-color="#789900"/><stop offset="0.40" stop-color="#779900"/><stop offset="0.60" stop-color="#769900"/><stop offset="0.80" stop-color="#759900"/><stop offset="1.00" stop-color="#749900"/></linearGradient>
<linearGradient id="o183" gradientUnits="userSpaceOnUse" x1="1261.8" y1="291.5" x2="1279.5" y2="263.4"><stop offset="0.00" stop-color="#739900"/><stop offset="0.20" stop-color="#719900"/><stop offset="0.40" stop-color="#709900"/><stop offset="0.60" stop-color="#6f9900"/><stop offset="0.80" stop-color="#6e9900"/><stop offset="1.00" stop-color="#6d9900"/></linearGradient>
<linearGradient id="o184" gradientUnits="userSpaceOnUse" x1="1259.1" y1="290.0" x2="1276.3" y2="261.2"><stop offset="0.00" stop-color="#6d9900"/><stop offset="0.20" stop-color="#6b9900"/><stop offset="0.40" stop-color="#6a9900"/><stop offset="0.60" stop-color="#699900"/><stop offset="0.80" stop-color="#689900"/><stop offset="1.00" stop-color="#679900"/></linearGradient>
<linearGradient id="o185" gradientUnits="userSpaceOnUse" x1="1256.4" y1="288.5" x2="1273.0" y2="258.9"><stop offset="0.00" stop-color="#679900"/><stop offset="0.20" stop-color="#659900"/><stop offset="0.40" stop-color="#649900"/><stop offset="0.60" stop-color="#639900"/><stop offset="0.80" stop-color="#619900"/><stop offset="1.00" stop-color="#609900"/></linearGradient>
<linearGradient id="o186" gradientUnits="userSpaceOnUse" x1="1253.7" y1="287.0" x2="1269.7" y2="256.6"><stop offset="0.00" stop-color="#619900"/><stop offset="0.20" stop-color="#609900"/><stop offset="0.40" stop-color="#5e9900"/><stop offset="0.60" stop-color="#5d9900"/><stop offset="0.80" stop-color="#5b9900"/><stop offset="1.00" stop-color="#5a9900"/></linearGradient>
<linearGradient id="o187" gradientUnits="userSpaceOnUse" x1="1251.0" y1="285.5" x2="1266.4" y2="254.4"><stop offset="0.00" stop-color="#5c9900"/><stop offset="0.20" stop-color="#5a9900"/><stop offset="0.40" stop-color="#589900"/><stop offset="0.60" stop-color="#579900"/><stop offset="0.80" stop-color="#559900"/><stop offset="1.00" stop-color="#549900"/></linearGradient>
<linearGradient id="o188" gradientUnits="userSpaceOnUse" x1="1248.3" y1="284.0" x2="1263.0" y2="252.1"><stop offset="0.00" stop-color="#579900"/><stop offset="0.20" stop-color="#559900"/><stop offset="0.40" stop-color="#539900"/><stop offset="0.60" stop-color="#519900"/><stop offset="0.80" stop-color="#4f9900"/><stop offset="1.00" stop-color="#4e9900"/></linearGradient>
<linearGradient id="o189" gradientUnits="userSpaceOnUse" x1="1245.6" y1="282.5" x2="1259.6" y2="249.7"><stop offset="0.00" stop-color="#519900"/><stop offset="0.20" stop-color="#4f9900"/><stop offset="0.40" stop-color="#4d9900"/><stop offset="0.60" stop-color="#4b9900"/><stop offset="0.80" stop-color="#4a9900"/><stop offset="1.00" stop-color="#489900"/></linearGradient>
<linearGradient id="o190" gradientUnits="userSpaceOnUse" x1="1242.8" y1="281.0" x2="1256.2" y2="247.4"><stop offset="0.00" stop-color="#4c9900"/><stop offset="0.20" stop-color="#4a9900"/><stop offset="0.40" stop-color="#489900"/><stop offset="0.60" stop-color="#469900"/><stop offset="0.80" stop-color="#449900"/><stop offset="1.00" stop-color="#429900"/></linearGradient>
<linearGradient id="o191" gradientUnits="userSpaceOnUse" x1="1240.1" y1="279.5" x2="1252.8" y2="245.0"><stop offset="0.00" stop-color="#479900"/><stop offset="0.20" stop-color="#459900"/><stop offset="0.40" stop-color="#439900"/><stop offset="0.60" stop-color="#419900"/><stop offset="0.80" stop-color="#3f9900"/><stop offset="1.00" stop-color="#3d9900"/></linearGradient>
<linearGradient id="o192" gradientUnits="userSpaceOnUse" x1="1237.3" y1="277.9" x2="1249.3" y2="242.6"><stop offset="0.00" stop-color="#439900"/><stop offset="0.20" stop-color="#409900"/><stop offset="0.40" stop-color="#3e9900"/><stop offset="0.60" stop-color="#3c9900"/><stop offset="0.80" stop-color="#399900"/><stop offset="1.00" stop-color="#379900"/></linearGradient>
<linearGradient id="o193" gradientUnits="userSpaceOnUse" x1="1234.5" y1="276.4" x2="1245.7" y2="240.2"><stop offset="0.00" stop-color="#3e9900"/><stop offset="0.20" stop-color="#3b9900"/><stop offset="0.40" stop-color="#399900"/><stop offset="0.60" stop-color="#369900"/><stop offset="0.80" stop-color="#349900"/><stop offset="1.00" stop-color="#329900"/></linearGradient>
<linearGradient id="o194" gradientUnits="userSpaceOnUse" x1="1231.7" y1="274.8" x2="1242.1" y2="237.7"><stop offset="0.00" stop-color="#399900"/><stop offset="0.20" stop-color="#369900"/><stop offset="0.40" stop-color="#349900"/><stop offset="0.60" stop-color="#319900"/><stop offset="0.80" stop-color="#2f9900"/><stop offset="1.00" stop-color="#2d9900"/></linearGradient>
<linearGradient id="o195" gradientUnits="userSpaceOnUse" x1="1228.8" y1="273.2" x2="1238.4" y2="235.3"><stop offset="0.00" stop-color="#359900"/><stop offset="0.20" stop-color="#329900"/><stop offset="0.40" stop-color="#2f9900"/><stop offset="0.60" stop-color="#2c9900"/><stop offset="0.80" stop-color="#2a9900"/><stop offset="1.00" stop-color="#289900"/></linearGradient>
<linearGradient id="o196" gradientUnits="userSpaceOnUse" x1="1225.9" y1="271.6" x2="1234.7" y2="232.8"><stop offset="0.00" stop-color="#309900"/><stop offset="0.20" stop-color="#2d9900"/><stop offset="0.40" stop-color="#2a9900"/><stop offset="0.60" stop-color="#289900"/><stop offset="0.80" stop-color="#259900"/><stop offset="1.00" stop-color="#239900"/></linearGradient>
<linearGradient id="o197" gradientUnits="userSpaceOnUse" x1="1222.9" y1="269.9" x2="1230.8" y2="230.2"><stop offset="0.00" stop-color="#2c9900"/><stop offset="0.20" stop-color="#289900"/><stop offset="0.40" stop-color="#269900"/><stop offset="0.60" stop-color="#239900"/><stop offset="0.80" stop-color="#209900"/><stop offset="1.00" stop-color="#1e9900"/></linearGradient>
<linearGradient id="o198" gradientUnits="userSpaceOnUse" x1="1219.9" y1="268.3" x2="1226.9" y2="227.5"><stop offset="0.00" stop-color="#279900"/><stop offset="0.20" stop-color="#249900"/><stop offset="0.40" stop-color="#219900"/><stop offset="0.60" stop-color="#1e9900"/><stop offset="0.80" stop-color="#1b9900"/><stop offset="1.00" stop-color="#199900"/></linearGradient>
<linearGradient id="o199" gradientUnits="userSpaceOnUse" x1="1216.9" y1="266.6" x2="1222.9" y2="224.9"><stop offset="0.00" stop-color="#239900"/><stop offset="0.20" stop-color="#1f9900"/><stop offset="0.40" stop-color="#1c9900"/><stop offset="0.60" stop-color="#199900"/><stop offset="0.80" stop-color="#179900"/><stop offset="1.00" stop-color="#149900"/></linearGradient>
<linearGradient id="o200" gradientUnits="userSpaceOnUse" x1="1213.8" y1="264.8" x2="1218.8" y2="222.1"><stop offset="0.00" stop-color="#1e9900"/><stop offset="0.20" stop-color="#1b9900"/><stop offset="0.40" stop-color="#189900"/><stop offset="0.60" stop-color="#159900"/><stop offset="0.80" stop-color="#129900"/><stop offset="1.00" stop-color="#0f9900"/></linearGradient>
<linearGradient id="o201" gradientUnits="userSpaceOnUse" x1="1210.6" y1="263.1" x2="1214.6" y2="219.3"><stop offset="0.00" stop-color="#1a9900"/><stop offset="0.20" stop-color="#169900"/><stop offset="0.40" stop-color="#139900"/><stop offset="0.60" stop-color="#109900"/><stop offset="0.80" stop-color="#0d9900"/><stop offset="1.00" stop-color="#0b9900"/></linearGradient>
<linearGradient id="o202" gradientUnits="userSpaceOnUse" x1="1207.3" y1="261.3" x2="1210.2" y2="216.5"><stop offset="0.00" stop-color="#169900"/><stop offset="0.20" stop-color="#129900"/><stop offset="0.40" stop-color="#0f9900"/><stop offset="0.60" stop-color="#0b9900"/><stop offset="0.80" stop-color="#099900"/><stop offset="1.00" stop-color="#069900"/></linearGradient>
<linearGradient id="o203" gradientUnits="userSpaceOnUse" x1="1204.0" y1="259.4" x2="1205.8" y2="213.5"><stop offset="0.00" stop-color="#119900"/><stop offset="0.20" stop-color="#0e9900"/><stop offset="0.40" stop-color="#0a9900"/><stop offset="0.60" stop-color="#079900"/><stop offset="0.80" stop-color="#049900"/><stop offset="1.00" stop-color="#019900"/></linearGradient>
<linearGradient id="o204" gradientUnits="userSpaceOnUse" x1="1200.5" y1="257.5" x2="1201.1" y2="210.5"><stop offset="0.00" stop-color="#0d9900"/><stop offset="0.20" stop-color="#099900"/><stop offset="0.40" stop-color="#069900"/><stop offset="0.60" stop-color="#029900"/><stop offset="0.80" stop-color="#009900"/><stop offset="1.00" stop-color="#009900"/></linearGradient>
<linearGradient id="o205" gradientUnits="userSpaceOnUse" x1="1197.0" y1="255.5" x2="1196.4" y2="207.4"><stop offset="0.00" stop-color="#099900"/><stop offset="0.20" stop-color="#059900"/><stop offset="0.40" stop-color="#019900"/><stop offset="0.60" stop-color="#009900"/><stop offset="0.80" stop-color="#009900"/><stop offset="1.00" stop-color="#009900"/></linearGradient>
<linearGradient id="o206" gradientUnits="userSpaceOnUse" x1="1193.4" y1="253.5" x2="1191.4" y2="204.1"><stop offset="0.00" stop-color="#059900"/><stop offset="0.20" stop-color="#009900"/><stop offset="0.40" stop-color="#009900"/><stop offset="0.60" stop-color="#009900"/><stop offset="0.80" stop-color="#009900"/><stop offset="1.00" stop-color="#009900"/></linearGradient>
<linearGradient id="o207" gradientUnits="userSpaceOnUse" x1="1189.6" y1="251.4" x2="1186.3" y2="200.9"><stop offset="0.00" stop-color="#009900"/><stop offset="0.20" stop-color="#009900"/><stop offset="0.40" stop-color="#009900"/><stop offset="0.60" stop-color="#009900"/><stop offset="0.80" stop-color="#009900"/><stop offset="1.00" stop-color="#009900"/></linearGradient>
<linearGradient id="o208" gradientUnits="userSpaceOnUse" x1="1186.6" y1="258.4" x2="1181.0" y2="197.6"><stop offset="0.00" stop-color="#009904"/><stop offset="0.20" stop-color="#009900"/><stop offset="0.40" stop-color="#009900"/><stop offset="0.60" stop-color="#009900"/><stop offset="0.80" stop-color="#009900"/><stop offset="1.00" stop-color="#009900"/></linearGradient>
<linearGradient id="o209" gradientUnits="userSpaceOnUse" x1="1183.8" y1="265.3" x2="1175.4" y2="194.1"><stop offset="0.00" stop-color="#009908"/><stop offset="0.20" stop-color="#009902"/><stop offset="0.40" stop-color="#009900"/><stop offset="0.60" stop-color="#009900"/><stop offset="0.80" stop-color="#009900"/><stop offset="1.00" stop-color="#009900"/></linearGradient>
<linearGradient id="o210" gradientUnits="userSpaceOnUse" x1="1181.4" y1="271.4" x2="1169.6" y2="190.5"><stop offset="0.00" stop-color="#00990c"/><stop offset="0.20" stop-color="#009904"/><stop offset="0.40" stop-color="#009900"/><stop offset="0.60" stop-color="#009900"/><stop offset="0.80" stop-color="#009900"/><stop offset="1.00" stop-color="#009900"/></linearGradient>
<linearGradient id="o211" gradientUnits="userSpaceOnUse" x1="1179.1" y1="277.1" x2="1163.6" y2="186.8"><stop offset="0.00" stop-color="#00990f"/><stop offset="0.20" stop-color="#009907"/><stop offset="0.40" stop-color="#009900"/><stop offset="0.60" stop-color="#009900"/><stop offset="0.80" stop-color="#009900"/><stop offset="1.00" stop-color="#009900"/></linearGradient>
<linearGradient id="o212" gradientUnits="userSpaceOnUse" x1="1177.1" y1="282.3" x2="1157.3" y2="183.1"><stop offset="0.00" stop-color="#009913"/><stop offset="0.20" stop-color="#009909"/><stop offset="0.40" stop-color="#009901"/><stop offset="0.60" stop-color="#009900"/><stop offset="0.80" stop-color="#009900"/><stop offset="1.00" stop-color="#009900"/></linearGradient>
<linearGradient id="o213" gradientUnits="userSpaceOnUse" x1="1175.2" y1="287.1" x2="1150.8" y2="179.3"><stop offset="0.00" stop-color="#009916"/><stop offset="0.20" stop-color="#00990b"/><stop offset="0.40" stop-color="#009902"/><stop offset="0.60" stop-color="#009900"/><stop offset="0.80" stop-color="#009900"/><stop offset="1.00" stop-color="#009900"/></linearGradient>
<linearGradient id="o214" gradientUnits="userSpaceOnUse" x1="1173.4" y1="291.5" x2="1143.9" y2="175.3"><stop offset="0.00" stop-color="#00991a"/><stop offset="0.20" stop-color="#00990d"/><stop offset="0.40" stop-color="#009904"/><stop offset="0.60" stop-color="#009900"/><stop offset="0.80" stop-color="#009900"/><stop offset="1.00" stop-color="#009900"/></linearGradient>
<linearGradient id="o215" gradientUnits="userSpaceOnUse" x1="1171.8" y1="295.7" x2="1136.7" y2="171.2"><stop offset="0.00" stop-color="#00991d"/><stop offset="0.20" stop-color="#00990f"/><stop offset="0.40" stop-color="#009905"/><stop offset="0.60" stop-color="#009900"/><stop offset="0.80" stop-color="#009900"/><stop offset="1.00" stop-color="#009900"/></linearGradient>
<linearGradient id="o216" gradientUnits="userSpaceOnUse" x1="1170.2" y1="299.5" x2="1129.2" y2="167.3"><stop offset="0.00" stop-color="#009920"/><stop offset="0.20" stop-color="#009911"/><stop offset="0.40" stop-color="#009906"/><stop offset="0.60" stop-color="#009900"/><stop offset="0.80" stop-color="#009900"/><stop offset="1.00" stop-color="#009900"/></linearGradient>
<linearGradient id="o217" gradientUnits="userSpaceOnUse" x1="1168.8" y1="303.1" x2="1121.3" y2="163.2"><stop offset="0.00" stop-color="#009923"/><stop offset="0.20" stop-color="#009913"/><stop offset="0.40" stop-color="#009907"/><stop offset="0.60" stop-color="#009900"/><stop offset="0.80" stop-color="#009900"/><stop offset="1.00" stop-color="#009900"/></linearGradient>
<linearGradient id="o218" gradientUnits="userSpaceOnUse" x1="1167.5" y1="306.5" x2="1113.0" y2="158.9"><stop offset="0.00" stop-color="#009925"/><stop offset="0.20" stop-color="#009915"/><stop offset="0.40" stop-color="#009908"/><stop offset="0.60" stop-color="#009900"/><stop offset="0.80" stop-color="#009900"/><stop offset="1.00" stop-color="#009900"/></linearGradient>
<linearGradient id="o219" gradientUnits="userSpaceOnUse" x1="1166.2" y1="309.7" x2="1104.4" y2="154.8"><stop offset="0.00" stop-color="#009928"/><stop offset="0.20" stop-color="#009916"/><stop offset="0.40" stop-color="#009909"/><stop offset="0.60" stop-color="#009900"/><stop offset="0.80" stop-color="#009900"/><stop offset="1.00" stop-color="#009900"/></linearGradient>
<linearGradient id="o220" gradientUnits="userSpaceOnUse" x1="1165.0" y1="312.7" x2="1095.4" y2="150.8"><stop offset="0.00" stop-color="#00992b"/><stop offset="0.20" stop-color="#009918"/><stop offset="0.40" stop-color="#00990a"/><stop offset="0.60" stop-color="#009900"/><stop offset="0.80" stop-color="#009900"/><stop offset="1.00" stop-color="#009900"/></linearGradient>
<linearGradient id="o221" gradientUnits="userSpaceOnUse" x1="1163.8" y1="315.6" x2="1085.9" y2="146.6"><stop offset="0.00" stop-color="#00992d"/><stop offset="0.20" stop-color="#009919"/><stop offset="0.40" stop-color="#00990b"/><stop offset="0.60" stop-color="#009901"/><stop offset="0.80" stop-color="#009900"/><stop offset="1.00" stop-color="#009900"/></linearGradient>
<linearGradient id="o222" gradientUnits="userSpaceOnUse" x1="1162.8" y1="318.4" x2="1076.2" y2="142.8"><stop offset="0.00" stop-color="#009930"/><stop offset="0.20" stop-color="#00991b"/><stop offset="0.40" stop-color="#00990c"/><stop offset="0.60" stop-color="#009902"/><stop offset="0.80" stop-color="#009900"/><stop offset="1.00" stop-color="#009900"/></linearGradient>
<linearGradient id="o223" gradientUnits="userSpaceOnUse" x1="1161.7" y1="321.0" x2="1066.1" y2="139.3"><stop offset="0.00" stop-color="#009932"/><stop offset="0.20" stop-color="#00991c"/><stop offset="0.40" stop-color="#00990d"/><stop offset="0.60" stop-color="#009903"/><stop offset="0.80" stop-color="#009900"/><stop offset="1.00" stop-color="#009900"/></linearGradient>
<linearGradient id="o224" gradientUnits="userSpaceOnUse" x1="1160.7" y1="323.5" x2="1055.5" y2="135.6"><stop offset="0.00" stop-color="#009935"/><stop offset="0.20" stop-color="#00991e"/><stop offset="0.40" stop-color="#00990e"/><stop offset="0.60" stop-color="#009904"/><stop offset="0.80" stop-color="#009900"/><stop offset="1.00" stop-color="#009900"/></linearGradient>
<linearGradient id="o225" gradientUnits="userSpaceOnUse" x1="1159.8" y1="325.9" x2="1045.3" y2="133.5"><stop offset="0.00" stop-color="#009937"/><stop offset="0.20" stop-color="#00991f"/><stop offset="0.40" stop-color="#00990f"/><stop offset="0.60" stop-color="#009905"/><stop offset="0.80" stop-color="#009900"/><stop offset="1.00" stop-color="#009900"/></linearGradient>
<linearGradient id="o226" gradientUnits="userSpaceOnUse" x1="1158.9" y1="328.1" x2="1035.2" y2="132.1"><stop offset="0.00" stop-color="#00993a"/><stop offset="0.20" stop-color="#009921"/><stop offset="0.40" stop-color="#009911"/><stop offset="0.60" stop-color="#009906"/><stop offset="0.80" stop-color="#009900"/><stop offset="1.00" stop-color="#009900"/></linearGradient>
<linearGradient id="o227" gradientUnits="userSpaceOnUse" x1="1158.0" y1="330.4" x2="1024.6" y2="130.7"><stop offset="0.00" stop-color="#00993c"/><stop offset="0.20" stop-color="#009922"/><stop offset="0.40" stop-color="#009912"/><stop offset="0.60" stop-color="#009907"/><stop offset="0.80" stop-color="#009900"/><stop offset="1.00" stop-color="#009900"/></linearGradient>
<linearGradient id="o228" gradientUnits="userSpaceOnUse" x1="1157.1" y1="332.5" x2="1016.2" y2="133.1"><stop offset="0.00" stop-color="#00993e"/><stop offset="0.20" stop-color="#009924"/><stop offset="0.40" stop-color="#009914"/><stop offset="0.60" stop-color="#009909"/><stop offset="0.80" stop-color="#009901"/><stop offset="1.00" stop-color="#009900"/></linearGradient>
<linearGradient id="o229" gradientUnits="userSpaceOnUse" x1="1156.3" y1="334.5" x2="1008.4" y2="136.5"><stop offset="0.00" stop-color="#009940"/><stop offset="0.20" stop-color="#009926"/><stop offset="0.40" stop-color="#009916"/><stop offset="0.60" stop-color="#00990b"/><stop offset="0.80" stop-color="#009903"/><stop offset="1.00" stop-color="#009900"/></linearGradient>
<linearGradient id="o230" gradientUnits="userSpaceOnUse" x1="1155.5" y1="336.5" x2="1000.5" y2="139.9"><stop offset="0.00" stop-color="#009943"/><stop offset="0.20" stop-color="#009928"/><stop offset="0.40" stop-color="#009918"/><stop offset="0.60" stop-color="#00990c"/><stop offset="0.80" stop-color="#009904"/><stop offset="1.00" stop-color="#009900"/></linearGradient>
<linearGradient id="o231" gradientUnits="userSpaceOnUse" x1="1154.8" y1="338.5" x2="994.2" y2="145.4"><stop offset="0.00" stop-color="#009945"/><stop offset="0.20" stop-color="#00992a"/><stop offset="0.40" stop-color="#00991a"/><stop offset="0.60" stop-color="#00990f"/><stop offset="0.80" stop-color="#009907"/><stop offset="1.00" stop-color="#009901"/></linearGradient>
<linearGradient id="o232" gradientUnits="userSpaceOnUse" x1="1154.0" y1="340.4" x2="989.8" y2="153.1"><stop offset="0.00" stop-color="#009947"/><stop offset="0.20" stop-color="#00992d"/><stop offset="0.40" stop-color="#00991c"/><stop offset="0.60" stop-color="#009911"/><stop offset="0.80" stop-color="#009909"/><stop offset="1.00" stop-color="#009903"/></linearGradient>
<linearGradient id="o233" gradientUnits="userSpaceOnUse" x1="1153.3" y1="342.2" x2="985.4" y2="160.6"><stop offset="0.00" stop-color="#009949"/><stop offset="0.20" stop-color="#00992f"/><stop offset="0.40" stop-color="#00991f"/><stop offset="0.60" stop-color="#009914"/><stop offset="0.80" stop-color="#00990c"/><stop offset="1.00" stop-color="#009906"/></linearGradient>
<linearGradient id="o234" gradientUnits="userSpaceOnUse" x1="1152.6" y1="344.0" x2="981.1" y2="168.0"><stop offset="0.00" stop-color="#00994b"/><stop offset="0.20" stop-color="#009931"/><stop offset="0.40" stop-color="#009921"/><stop offset="0.60" stop-color="#009916"/><stop offset="0.80" stop-color="#00990f"/><stop offset="1.00" stop-color="#009909"/></linearGradient>
<linearGradient id="o235" gradientUnits="userSpaceOnUse" x1="1151.9" y1="345.7" x2="977.5" y2="175.9"><stop offset="0.00" stop-color="#00994d"/><stop offset="0.20" stop-color="#009934"/><stop offset="0.40" stop-color="#009924"/><stop offset="0.60" stop-color="#009919"/><stop offset="0.80" stop-color="#009911"/><stop offset="1.00" stop-color="#00990b"/></linearGradient>
<linearGradient id="o236" gradientUnits="userSpaceOnUse" x1="1151.2" y1="347.4" x2="976.1" y2="185.6"><stop offset="0.00" stop-color="#009950"/><stop offset="0.20" stop-color="#009937"/><stop offset="0.40" stop-color="#009927"/><stop offset="0.60" stop-color="#00991c"/><stop offset="0.80" stop-color="#009914"/><stop offset="1.00" stop-color="#00990e"/></linearGradient>
<linearGradient id="o237" gradientUnits="userSpaceOnUse" x1="1150.5" y1="349.1" x2="974.7" y2="194.9"><stop offset="0.00" stop-color="#009952"/><stop offset="0.20" stop-color="#009939"/><stop offset="0.40" stop-color="#00992a"/><stop offset="0.60" stop-color="#00991f"/><stop offset="0.80" stop-color="#009918"/><stop offset="1.00" stop-color="#009912"/></linearGradient>
<linearGradient id="o238" gradientUnits="userSpaceOnUse" x1="1149.9" y1="350.7" x2="973.3" y2="203.9"><stop offset="0.00" stop-color="#009954"/><stop offset="0.20" stop-color="#00993c"/><stop offset="0.40" stop-color="#00992d"/><stop offset="0.60" stop-color="#009922"/><stop offset="0.80" stop-color="#00991b"/><stop offset="1.00" stop-color="#009915"/></linearGradient>
<linearGradient id="o239" gradientUnits="userSpaceOnUse" x1="1149.2" y1="352.4" x2="972.0" y2="212.7"><stop offset="0.00" stop-color="#009956"/><stop offset="0.20" stop-color="#00993f"/><stop offset="0.40" stop-color="#009930"/><stop offset="0.60" stop-color="#009926"/><stop offset="0.80" stop-color="#00991e"/><stop offset="1.00" stop-color="#009918"/></linearGradient>
<linearGradient id="o240" gradientUnits="userSpaceOnUse" x1="1148.6" y1="353.9" x2="970.8" y2="221.1"><stop offset="0.00" stop-color="#009958"/><stop offset="0.20" stop-color="#009942"/><stop offset="0.40" stop-color="#009933"/><stop offset="0.60" stop-color="#009929"/><stop offset="0.80" stop-color="#009921"/><stop offset="1.00" stop-color="#00991b"/></linearGradient>
<linearGradient id="o241" gradientUnits="userSpaceOnUse" x1="1148.0" y1="355.5" x2="970.9" y2="230.3"><stop offset="0.00" stop-color="#00995a"/><stop offset="0.20" stop-color="#009945"/><stop offset="0.40" stop-color="#009936"/><stop offset="0.60" stop-color="#00992c"/><stop offset="0.80" stop-color="#009925"/><stop offset="1.00" stop-color="#00991f"/></linearGradient>
<linearGradient id="o242" gradientUnits="userSpaceOnUse" x1="1147.4" y1="357.1" x2="971.4" y2="239.4"><stop offset="0.00" stop-color="#00995c"/><stop offset="0.20" stop-color="#009948"/><stop offset="0.40" stop-color="#00993a"/><stop offset="0.60" stop-color="#009930"/><stop offset="0.80" stop-color="#009928"/><stop offset="1.00" stop-color="#009923"/></linearGradient>
<linearGradient id="o243" gradientUnits="userSpaceOnUse" x1="1146.8" y1="358.6" x2="971.8" y2="248.2"><stop offset="0.00" stop-color="#00995f"/><stop offset="0.20" stop-color="#00994b"/><stop offset="0.40" stop-color="#00993d"/><stop offset="0.60" stop-color="#009933"/><stop offset="0.80" stop-color="#00992c"/><stop offset="1.00" stop-color="#009926"/></linearGradient>
<linearGradient id="o244" gradientUnits="userSpaceOnUse" x1="1146.2" y1="360.1" x2="972.3" y2="256.6"><stop offset="0.00" stop-color="#009961"/><stop offset="0.20" stop-color="#00994d"/><stop offset="0.40" stop-color="#009940"/><stop offset="0.60" stop-color="#009937"/><stop offset="0.80" stop-color="#009930"/><stop offset="1.00" stop-color="#00992a"/></linearGradient>
<linearGradient id="o245" gradientUnits="userSpaceOnUse" x1="1145.6" y1="361.6" x2="972.7" y2="264.8"><stop offset="0.00" stop-color="#009963"/><stop offset="0.20" stop-color="#009950"/><stop offset="0.40" stop-color="#009944"/><stop offset="0.60" stop-color="#00993b"/><stop offset="0.80" stop-color="#009933"/><stop offset="1.00" stop-color="#00992e"/></linearGradient>
<linearGradient id="o246" gradientUnits="userSpaceOnUse" x1="1145.0" y1="363.1" x2="973.1" y2="272.7"><stop offset="0.00" stop-color="#009965"/><stop offset="0.20" stop-color="#009954"/><stop offset="0.40" stop-color="#009947"/><stop offset="0.60" stop-color="#00993e"/><stop offset="0.80" stop-color="#009937"/><stop offset="1.00" stop-color="#009932"/></linearGradient>
<linearGradient id="o247" gradientUnits="userSpaceOnUse" x1="1144.4" y1="364.6" x2="973.5" y2="280.3"><stop offset="0.00" stop-color="#009968"/><stop offset="0.20" stop-color="#009957"/><stop offset="0.40" stop-color="#00994b"/><stop offset="0.60" stop-color="#009942"/><stop offset="0.80" stop-color="#00993b"/><stop offset="1.00" stop-color="#009936"/></linearGradient>
<linearGradient id="o248" gradientUnits="userSpaceOnUse" x1="1143.8" y1="366.1" x2="974.5" y2="288.0"><stop offset="0.00" stop-color="#00996a"/><stop offset="0.20" stop-color="#00995a"/><stop offset="0.40" stop-color="#00994e"/><stop offset="0.60" stop-color="#009946"/><stop offset="0.80" stop-color="#00993f"/><stop offset="1.00" stop-color="#00993a"/></linearGradient>
<linearGradient id="o249" gradientUnits="userSpaceOnUse" x1="1143.2" y1="367.5" x2="975.8" y2="295.6"><stop offset="0.00" stop-color="#00996c"/><stop offset="0.20" stop-color="#00995d"/><stop offset="0.40" stop-color="#009952"/><stop offset="0.60" stop-color="#00994a"/><stop offset="0.80" stop-color="#009944"/><stop offset="1.00" stop-color="#00993e"/></linearGradient>
<linearGradient id="o250" gradientUnits="userSpaceOnUse" x1="1142.6" y1="369.0" x2="977.1" y2="303.0"><stop offset="0.00" stop-color="#00996e"/><stop offset="0.20" stop-color="#009960"/><stop offset="0.40" stop-color="#009956"/><stop offset="0.60" stop-color="#00994e"/><stop offset="0.80" stop-color="#009948"/><stop offset="1.00" stop-color="#009943"/></linearGradient>
<linearGradient id="o251" gradientUnits="userSpaceOnUse" x1="1142.1" y1="370.5" x2="978.4" y2="310.1"><stop offset="0.00" stop-color="#009971"/><stop offset="0.20" stop-color="#009964"/><stop offset="0.40" stop-color="#00995a"/><stop offset="0.60" stop-color="#009952"/><stop offset="0.80" stop-color="#00994c"/><stop offset="1.00" stop-color="#009947"/></linearGradient>
<linearGradient id="o252" gradientUnits="userSpaceOnUse" x1="1141.5" y1="372.0" x2="979.6" y2="317.0"><stop offset="0.00" stop-color="#009973"/><stop offset="0.20" stop-color="#009967"/><stop offset="0.40" stop-color="#00995e"/><stop offset="0.60" stop-color="#009956"/><stop offset="0.80" stop-color="#009951"/><stop offset="1.00" stop-color="#00994c"/></linearGradient>
<linearGradient id="o253" gradientUnits="userSpaceOnUse" x1="1140.9" y1="373.4" x2="980.7" y2="323.7"><stop offset="0.00" stop-color="#009976"/><stop offset="0.20" stop-color="#00996a"/><stop offset="0.40" stop-color="#009962"/><stop offset="0.60" stop-color="#00995b"/><stop offset="0.80" stop-color="#009955"/><stop offset="1.00" stop-color="#009951"/></linearGradient>
<linearGradient id="o254" gradientUnits="userSpaceOnUse" x1="1140.3" y1="374.9" x2="981.9" y2="330.2"><stop offset="0.00" stop-color="#009978"/><stop offset="0.20" stop-color="#00996e"/><stop offset="0.40" stop-color="#009966"/><stop offset="0.60" stop-color="#00995f"/><stop offset="0.80" stop-color="#00995a"/><stop offset="1.00" stop-color="#009956"/></linearGradient>
<linearGradient id="o255" gradientUnits="userSpaceOnUse" x1="1139.7" y1="376.4" x2="983.0" y2="336.6"><stop offset="0.00" stop-color="#00997b"/><stop offset="0.20" stop-color="#009971"/><stop offset="0.40" stop-color="#00996a"/><stop offset="0.60" stop-color="#009964"/><stop offset="0.80" stop-color="#00995f"/><stop offset="1.00" stop-color="#00995b"/></linearGradient>
<linearGradient id="o256" gradientUnits="userSpaceOnUse" x1="1139.1" y1="377.9" x2="984.0" y2="342.8"><stop offset="0.00" stop-color="#00997e"/><stop offset="0.20" stop-color="#009975"/><stop offset="0.40" stop-color="#00996e"/><stop offset="0.60" stop-color="#009969"/><stop offset="0.80" stop-color="#009964"/><stop offset="1.00" stop-color="#009960"/></linearGradient>
<linearGradient id="o257" gradientUnits="userSpaceOnUse" x1="1138.5" y1="379.4" x2="985.2" y2="348.9"><stop offset="0.00" stop-color="#009981"/><stop offset="0.20" stop-color="#009979"/><stop offset="0.40" stop-color="#009972"/><stop offset="0.60" stop-color="#00996e"/><stop offset="0.80" stop-color="#009969"/><stop offset="1.00" stop-color="#009966"/></linearGradient>
<linearGradient id="o258" gradientUnits="userSpaceOnUse" x1="1137.9" y1="380.9" x2="986.8" y2="355.0"><stop offset="0.00" stop-color="#009983"/><stop offset="0.20" stop-color="#00997c"/><stop offset="0.40" stop-color="#009977"/><stop offset="0.60" stop-color="#009973"/><stop offset="0.80" stop-color="#00996f"/><stop offset="1.00" stop-color="#00996c"/></linearGradient>
<linearGradient id="o259" gradientUnits="userSpaceOnUse" x1="1137.3" y1="382.5" x2="988.4" y2="360.9"><stop offset="0.00" stop-color="#009986"/><stop offset="0.20" stop-color="#009980"/><stop offset="0.40" stop-color="#00997c"/><stop offset="0.60" stop-color="#009978"/><stop offset="0.80" stop-color="#009975"/><stop offset="1.00" stop-color="#009972"/></linearGradient>
<linearGradient id="o260" gradientUnits="userSpaceOnUse" x1="1136.7" y1="384.1" x2="989.9" y2="366.7"><stop offset="0.00" stop-color="#009989"/><stop offset="0.20" stop-color="#009985"/><stop offset="0.40" stop-color="#009981"/><stop offset="0.60" stop-color="#00997d"/><stop offset="0.80" stop-color="#00997b"/><stop offset="1.00" stop-color="#009978"/></linearGradient>
<linearGradient id="o261" gradientUnits="userSpaceOnUse" x1="1136.0" y1="385.6" x2="991.4" y2="372.4"><stop offset="0.00" stop-color="#00998d"/><stop offset="0.20" stop-color="#009989"/><stop offset="0.40" stop-color="#009986"/><stop offset="0.60" stop-color="#009983"/><stop offset="0.80" stop-color="#009981"/><stop offset="1.00" stop-color="#00997f"/></linearGradient>
<linearGradient id="o262" gradientUnits="userSpaceOnUse" x1="1135.4" y1="387.3" x2="992.9" y2="377.9"><stop offset="0.00" stop-color="#009990"/><stop offset="0.20" stop-color="#00998d"/><stop offset="0.40" stop-color="#00998b"/><stop offset="0.60" stop-color="#009989"/><stop offset="0.80" stop-color="#009987"/><stop offset="1.00" stop-color="#009986"/></linearGradient>
<linearGradient id="o263" gradientUnits="userSpaceOnUse" x1="1134.7" y1="388.9" x2="994.4" y2="383.4"><stop offset="0.00" stop-color="#009993"/><stop offset="0.20" stop-color="#009992"/><stop offset="0.40" stop-color="#009990"/><stop offset="0.60" stop-color="#00998f"/><stop offset="0.80" stop-color="#00998e"/><stop offset="1.00" stop-color="#00998d"/></linearGradient>
<linearGradient id="o264" gradientUnits="userSpaceOnUse" x1="1134.1" y1="390.6" x2="995.8" y2="388.7"><stop offset="0.00" stop-color="#009997"/><stop offset="0.20" stop-color="#009996"/><stop offset="0.40" stop-color="#009996"/><stop offset="0.60" stop-color="#009995"/><stop offset="0.80" stop-color="#009995"/><stop offset="1.00" stop-color="#009994"/></linearGradient>
<linearGradient id="o265" gradientUnits="userSpaceOnUse" x1="1133.4" y1="392.3" x2="997.2" y2="394.0"><stop offset="0.00" stop-color="#009799"/><stop offset="0.20" stop-color="#009799"/><stop offset="0.40" stop-color="#009799"/><stop offset="0.60" stop-color="#009699"/><stop offset="0.80" stop-color="#009699"/><stop offset="1.00" stop-color="#009699"/></linearGradient>
<linearGradient id="o266" gradientUnits="userSpaceOnUse" x1="1132.7" y1="394.0" x2="998.6" y2="399.3"><stop offset="0.00" stop-color="#009499"/><stop offset="0.20" stop-color="#009299"/><stop offset="0.40" stop-color="#009199"/><stop offset="0.60" stop-color="#009099"/><stop offset="0.80" stop-color="#008f99"/><stop offset="1.00" stop-color="#008e99"/></linearGradient>
<linearGradient id="o267" gradientUnits="userSpaceOnUse" x1="1132.0" y1="395.8" x2="1000.0" y2="404.4"><stop offset="0.00" stop-color="#009099"/><stop offset="0.20" stop-color="#008d99"/><stop offset="0.40" stop-color="#008b99"/><stop offset="0.60" stop-color="#008a99"/><stop offset="0.80" stop-color="#008899"/><stop offset="1.00" stop-color="#008799"/></linearGradient>
<linearGradient id="o268" gradientUnits="userSpaceOnUse" x1="1131.3" y1="397.6" x2="1001.4" y2="409.5"><stop offset="0.00" stop-color="#008c99"/><stop offset="0.20" stop-color="#008999"/><stop offset="0.40" stop-color="#008699"/><stop offset="0.60" stop-color="#008499"/><stop offset="0.80" stop-color="#008199"/><stop offset="1.00" stop-color="#008099"/></linearGradient>
<linearGradient id="o269" gradientUnits="userSpaceOnUse" x1="1130.5" y1="399.5" x2="1003.1" y2="414.6"><stop offset="0.00" stop-color="#008999"/><stop offset="0.20" stop-color="#008499"/><stop offset="0.40" stop-color="#008199"/><stop offset="0.60" stop-color="#007e99"/><stop offset="0.80" stop-color="#007b99"/><stop offset="1.00" stop-color="#007999"/></linearGradient>
<linearGradient id="o270" gradientUnits="userSpaceOnUse" x1="1129.8" y1="401.4" x2="1004.9" y2="419.5"><stop offset="0.00" stop-color="#008599"/><stop offset="0.20" stop-color="#008099"/><stop offset="0.40" stop-color="#007c99"/><stop offset="0.60" stop-color="#007899"/><stop offset="0.80" stop-color="#007599"/><stop offset="1.00" stop-color="#007399"/></linearGradient>
<linearGradient id="o271" gradientUnits="userSpaceOnUse" x1="1129.0" y1="403.4" x2="1006.6" y2="424.4"><stop offset="0.00" stop-color="#008199"/><stop offset="0.20" stop-color="#007b99"/><stop offset="0.40" stop-color="#007799"/><stop offset="0.60" stop-color="#007399"/><stop offset="0.80" stop-color="#006f99"/><stop offset="1.00" stop-color="#006c99"/></linearGradient>
<linearGradient id="o272" gradientUnits="userSpaceOnUse" x1="1128.2" y1="405.5" x2="1008.3" y2="429.3"><stop offset="0.00" stop-color="#007d99"/><stop offset="0.20" stop-color="#007799"/><stop offset="0.40" stop-color="#007299"/><stop offset="0.60" stop-color="#006e99"/><stop offset="0.80" stop-color="#006a99"/><stop offset="1.00" stop-color="#006699"/></linearGradient>
<linearGradient id="o273" gradientUnits="userSpaceOnUse" x1="1127.3" y1="407.6" x2="1010.0" y2="434.1"><stop offset="0.00" stop-color="#007999"/><stop offset="0.20" stop-color="#007399"/><stop offset="0.40" stop-color="#006d99"/><stop offset="0.60" stop-color="#006899"/><stop offset="0.80" stop-color="#006499"/><stop offset="1.00" stop-color="#006199"/></linearGradient>
<linearGradient id="o274" gradientUnits="userSpaceOnUse" x1="1126.4" y1="409.8" x2="1011.7" y2="438.9"><stop offset="0.00" stop-color="#007699"/><stop offset="0.20" stop-color="#006e99"/><stop offset="0.40" stop-color="#006899"/><stop offset="0.60" stop-color="#006399"/><stop offset="0.80" stop-color="#005f99"/><stop offset="1.00" stop-color="#005b99"/></linearGradient>
<linearGradient id="o275" gradientUnits="userSpaceOnUse" x1="1125.5" y1="412.1" x2="1013.4" y2="443.7"><stop offset="0.00" stop-color="#007299"/><stop offset="0.20" stop-color="#006a99"/><stop offset="0.40" stop-color="#006499"/><stop offset="0.60" stop-color="#005f99"/><stop offset="0.80" stop-color="#005a99"/><stop offset="1.00" stop-color="#005699"/></linearGradient>
<linearGradient id="o276" gradientUnits="userSpaceOnUse" x1="1124.6" y1="414.4" x2="1015.1" y2="448.4"><stop offset="0.00" stop-color="#006e99"/><stop offset="0.20" stop-color="#006699"/><stop offset="0.40" stop-color="#005f99"/><stop offset="0.60" stop-color="#005a99"/><stop offset="0.80" stop-color="#005599"/><stop offset="1.00" stop-color="#005199"/></linearGradient>
<linearGradient id="o277" gradientUnits="userSpaceOnUse" x1="1123.6" y1="416.9" x2="1016.8" y2="453.2"><stop offset="0.00" stop-color="#006a99"/><stop offset="0.20" stop-color="#006299"/><stop offset="0.40" stop-color="#005b99"/><stop offset="0.60" stop-color="#005599"/><stop offset="0.80" stop-color="#005099"/><stop offset="1.00" stop-color="#004c99"/></linearGradient>
<linearGradient id="o278" gradientUnits="userSpaceOnUse" x1="1122.6" y1="419.5" x2="1018.5" y2="457.9"><stop offset="0.00" stop-color="#006699"/><stop offset="0.20" stop-color="#005d99"/><stop offset="0.40" stop-color="#005699"/><stop offset="0.60" stop-color="#005099"/><stop offset="0.80" stop-color="#004b99"/><stop offset="1.00" stop-color="#004799"/></linearGradient>
<linearGradient id="o279" gradientUnits="userSpaceOnUse" x1="1121.5" y1="422.2" x2="1020.6" y2="462.5"><stop offset="0.00" stop-color="#006299"/><stop offset="0.20" stop-color="#005999"/><stop offset="0.40" stop-color="#005299"/><stop offset="0.60" stop-color="#004c99"/><stop offset="0.80" stop-color="#004799"/><stop offset="1.00" stop-color="#004299"/></linearGradient>
<linearGradient id="o280" gradientUnits="userSpaceOnUse" x1="1120.4" y1="425.1" x2="1022.8" y2="467.0"><stop offset="0.00" stop-color="#005e99"/><stop offset="0.20" stop-color="#005599"/><stop offset="0.40" stop-color="#004e99"/><stop offset="0.60" stop-color="#004799"/><stop offset="0.80" stop-color="#004299"/><stop offset="1.00" stop-color="#003d99"/></linearGradient>
<linearGradient id="o281" gradientUnits="userSpaceOnUse" x1="1119.2" y1="428.1" x2="1025.0" y2="471.5"><stop offset="0.00" stop-color="#005999"/><stop offset="0.20" stop-color="#005199"/><stop offset="0.40" stop-color="#004999"/><stop offset="0.60" stop-color="#004399"/><stop offset="0.80" stop-color="#003e99"/><stop offset="1.00" stop-color="#003999"/></linearGradient>
<linearGradient id="o282" gradientUnits="userSpaceOnUse" x1="1117.9" y1="431.3" x2="1027.1" y2="476.1"><stop offset="0.00" stop-color="#005599"/><stop offset="0.20" stop-color="#004c99"/><stop offset="0.40" stop-color="#004599"/><stop offset="0.60" stop-color="#003f99"/><stop offset="0.80" stop-color="#003999"/><stop offset="1.00" stop-color="#003499"/></linearGradient>
<linearGradient id="o283" gradientUnits="userSpaceOnUse" x1="1116.6" y1="434.7" x2="1029.3" y2="480.6"><stop offset="0.00" stop-color="#005199"/><stop offset="0.20" stop-color="#004899"/><stop offset="0.40" stop-color="#004199"/><stop offset="0.60" stop-color="#003b99"/><stop offset="0.80" stop-color="#003599"/><stop offset="1.00" stop-color="#003099"/></linearGradient>
<linearGradient id="o284" gradientUnits="userSpaceOnUse" x1="1115.1" y1="438.3" x2="1031.4" y2="485.1"><stop offset="0.00" stop-color="#004c99"/><stop offset="0.20" stop-color="#004499"/><stop offset="0.40" stop-color="#003d99"/><stop offset="0.60" stop-color="#003699"/><stop offset="0.80" stop-color="#003199"/><stop offset="1.00" stop-color="#002c99"/></linearGradient>
<linearGradient id="o285" gradientUnits="userSpaceOnUse" x1="1113.6" y1="442.1" x2="1033.6" y2="489.7"><stop offset="0.00" stop-color="#004899"/><stop offset="0.20" stop-color="#003f99"/><stop offset="0.40" stop-color="#003899"/><stop offset="0.60" stop-color="#003299"/><stop offset="0.80" stop-color="#002d99"/><stop offset="1.00" stop-color="#002899"/></linearGradient>
<linearGradient id="o286" gradientUnits="userSpaceOnUse" x1="1112.0" y1="446.2" x2="1035.8" y2="494.2"><stop offset="0.00" stop-color="#004399"/><stop offset="0.20" stop-color="#003b99"/><stop offset="0.40" stop-color="#003499"/><stop offset="0.60" stop-color="#002e99"/><stop offset="0.80" stop-color="#002999"/><stop offset="1.00" stop-color="#002499"/></linearGradient>
<linearGradient id="o287" gradientUnits="userSpaceOnUse" x1="1110.2" y1="450.6" x2="1038.4" y2="498.6"><stop offset="0.00" stop-color="#003e99"/><stop offset="0.20" stop-color="#003699"/><stop offset="0.40" stop-color="#003099"/><stop offset="0.60" stop-color="#002a99"/><stop offset="0.80" stop-color="#002499"/><stop offset="1.00" stop-color="#002099"/></linearGradient>
<linearGradient id="o288" gradientUnits="userSpaceOnUse" x1="1108.4" y1="455.3" x2="1040.9" y2="503.0"><stop offset="0.00" stop-color="#003999"/><stop offset="0.20" stop-color="#003299"/><stop offset="0.40" stop-color="#002b99"/><stop offset="0.60" stop-color="#002699"/><stop offset="0.80" stop-color="#002099"/><stop offset="1.00" stop-color="#001c99"/></linearGradient>
<linearGradient id="o289" gradientUnits="userSpaceOnUse" x1="1106.3" y1="460.5" x2="1043.4" y2="507.4"><stop offset="0.00" stop-color="#003499"/><stop offset="0.20" stop-color="#002d99"/><stop offset="0.40" stop-color="#002799"/><stop offset="0.60" stop-color="#002199"/><stop offset="0.80" stop-color="#001d99"/><stop offset="1.00" stop-color="#001899"/></linearGradient>
<linearGradient id="o290" gradientUnits="userSpaceOnUse" x1="1104.1" y1="466.1" x2="1045.9" y2="511.9"><stop offset="0.00" stop-color="#002e99"/><stop offset="0.20" stop-color="#002899"/><stop offset="0.40" stop-color="#002299"/><stop offset="0.60" stop-color="#001d99"/><stop offset="0.80" stop-color="#001999"/><stop offset="1.00" stop-color="#001499"/></linearGradient>
<linearGradient id="o291" gradientUnits="userSpaceOnUse" x1="1101.6" y1="472.2" x2="1048.5" y2="516.4"><stop offset="0.00" stop-color="#002999"/><stop offset="0.20" stop-color="#002399"/><stop offset="0.40" stop-color="#001e99"/><stop offset="0.60" stop-color="#001999"/><stop offset="0.80" stop-color="#001599"/><stop offset="1.00" stop-color="#001199"/></linearGradient>
<linearGradient id="o292" gradientUnits="userSpaceOnUse" x1="1099.0" y1="478.9" x2="1051.5" y2="520.6"><stop offset="0.00" stop-color="#002399"/><stop offset="0.20" stop-color="#001e99"/><stop offset="0.40" stop-color="#001999"/><stop offset="0.60" stop-color="#001599"/><stop offset="0.80" stop-color="#001199"/><stop offset="1.00" stop-color="#000d99"/></linearGradient>
<linearGradient id="o293" gradientUnits="userSpaceOnUse" x1="1096.0" y1="486.4" x2="1054.5" y2="524.8"><stop offset="0.00" stop-color="#001d99"/><stop offset="0.20" stop-color="#001899"/><stop offset="0.40" stop-color="#001499"/><stop offset="0.60" stop-color="#001099"/><stop offset="0.80" stop-color="#000d99"/><stop offset="1.00" stop-color="#000a99"/></linearGradient>
<linearGradient id="o294" gradientUnits="userSpaceOnUse" x1="1092.7" y1="494.8" x2="1057.5" y2="529.0"><stop offset="0.00" stop-color="#001799"/><stop offset="0.20" stop-color="#001399"/><stop offset="0.40" stop-color="#000f99"/><stop offset="0.60" stop-color="#000c99"/><stop offset="0.80" stop-color="#000999"/><stop offset="1.00" stop-color="#000699"/></linearGradient>
<linearGradient id="o295" gradientUnits="userSpaceOnUse" x1="1089.0" y1="504.1" x2="1060.8" y2="533.0"><stop offset="0.00" stop-color="#001099"/><stop offset="0.20" stop-color="#000d99"/><stop offset="0.40" stop-color="#000a99"/><stop offset="0.60" stop-color="#000899"/><stop offset="0.80" stop-color="#000599"/><stop offset="1.00" stop-color="#000399"/></linearGradient>
<linearGradient id="o296" gradientUnits="userSpaceOnUse" x1="1084.7" y1="514.8" x2="1064.5" y2="536.7"><stop offset="0.00" stop-color="#000999"/><stop offset="0.20" stop-color="#000799"/><stop offset="0.40" stop-color="#000599"/><stop offset="0.60" stop-color="#000399"/><stop offset="0.80" stop-color="#000199"/><stop offset="1.00" stop-color="#000099"/></linearGradient>
<linearGradient id="o297" gradientUnits="userSpaceOnUse" x1="1079.9" y1="527.0" x2="1068.2" y2="540.3"><stop offset="0.00" stop-color="#000299"/><stop offset="0.20" stop-color="#000199"/><stop offset="0.40" stop-color="#000099"/><stop offset="0.60" stop-color="#000099"/><stop offset="0.80" stop-color="#000099"/><stop offset="1.00" stop-color="#000099"/></linearGradient>
<linearGradient id="o298" gradientUnits="userSpaceOnUse" x1="1085.3" y1="527.9" x2="1071.9" y2="544.0"><stop offset="0.00" stop-color="#050099"/><stop offset="0.20" stop-color="#040099"/><stop offset="0.40" stop-color="#030099"/><stop offset="0.60" stop-color="#010099"/><stop offset="0.80" stop-color="#000099"/><stop offset="1.00" stop-color="#000099"/></linearGradient>
<linearGradient id="o299" gradientUnits="userSpaceOnUse" x1="1093.8" y1="524.6" x2="1075.9" y2="547.3"><stop offset="0.00" stop-color="#0d0099"/><stop offset="0.20" stop-color="#0b0099"/><stop offset="0.40" stop-color="#090099"/><stop offset="0.60" stop-color="#070099"/><stop offset="0.80" stop-color="#050099"/><stop offset="1.00" stop-color="#040099"/></linearGradient>
<linearGradient id="o300" gradientUnits="userSpaceOnUse" x1="1101.6" y1="521.6" x2="1080.2" y2="550.2"><stop offset="0.00" stop-color="#130099"/><stop offset="0.20" stop-color="#110099"/><stop offset="0.40" stop-color="#0f0099"/><stop offset="0.60" stop-color="#0d0099"/><stop offset="0.80" stop-color="#0a0099"/><stop offset="1.00" stop-color="#080099"/></linearGradient>
<linearGradient id="o301" gradientUnits="userSpaceOnUse" x1="1108.7" y1="518.8" x2="1084.5" y2="553.1"><stop offset="0.00" stop-color="#1a0099"/><stop offset="0.20" stop-color="#170099"/><stop offset="0.40" stop-color="#140099"/><stop offset="0.60" stop-color="#120099"/><stop offset="0.80" stop-color="#0f0099"/><stop offset="1.00" stop-color="#0d0099"/></linearGradient>
<linearGradient id="o302" gradientUnits="userSpaceOnUse" x1="1115.3" y1="516.3" x2="1089.0" y2="555.8"><stop offset="0.00" stop-color="#200099"/><stop offset="0.20" stop-color="#1d0099"/><stop offset="0.40" stop-color="#1a0099"/><stop offset="0.60" stop-color="#170099"/><stop offset="0.80" stop-color="#150099"/><stop offset="1.00" stop-color="#120099"/></linearGradient>
<linearGradient id="o303" gradientUnits="userSpaceOnUse" x1="1121.5" y1="513.9" x2="1093.4" y2="558.4"><stop offset="0.00" stop-color="#260099"/><stop offset="0.20" stop-color="#230099"/><stop offset="0.40" stop-color="#200099"/><stop offset="0.60" stop-color="#1c0099"/><stop offset="0.80" stop-color="#1a0099"/><stop offset="1.00" stop-color="#170099"/></linearGradient>
<linearGradient id="o304" gradientUnits="userSpaceOnUse" x1="1127.2" y1="511.7" x2="1099.8" y2="557.8"><stop offset="0.00" stop-color="#2c0099"/><stop offset="0.20" stop-color="#290099"/><stop offset="0.40" stop-color="#250099"/><stop offset="0.60" stop-color="#220099"/><stop offset="0.80" stop-color="#1f0099"/><stop offset="1.00" stop-color="#1d0099"/></linearGradient>
<linearGradient id="o305" gradientUnits="userSpaceOnUse" x1="1132.6" y1="509.6" x2="1106.9" y2="555.5"><stop offset="0.00" stop-color="#320099"/><stop offset="0.20" stop-color="#2f0099"/><stop offset="0.40" stop-color="#2b0099"/><stop offset="0.60" stop-color="#280099"/><stop offset="0.80" stop-color="#250099"/><stop offset="1.00" stop-color="#230099"/></linearGradient>
<linearGradient id="o306" gradientUnits="userSpaceOnUse" x1="1137.6" y1="507.7" x2="1113.6" y2="553.3"><stop offset="0.00" stop-color="#380099"/><stop offset="0.20" stop-color="#340099"/><stop offset="0.40" stop-color="#310099"/><stop offset="0.60" stop-color="#2e0099"/><stop offset="0.80" stop-color="#2b0099"/><stop offset="1.00" stop-color="#290099"/></linearGradient>
<linearGradient id="o307" gradientUnits="userSpaceOnUse" x1="1142.3" y1="505.9" x2="1120.0" y2="551.2"><stop offset="0.00" stop-color="#3d0099"/><stop offset="0.20" stop-color="#3a0099"/><stop offset="0.40" stop-color="#370099"/><stop offset="0.60" stop-color="#340099"/><stop offset="0.80" stop-color="#310099"/><stop offset="1.00" stop-color="#2f0099"/></linearGradient>
<linearGradient id="o308" gradientUnits="userSpaceOnUse" x1="1146.8" y1="504.2" x2="1126.0" y2="549.3"><stop offset="0.00" stop-color="#420099"/><stop offset="0.20" stop-color="#3f0099"/><stop offset="0.40" stop-color="#3c0099"/><stop offset="0.60" stop-color="#390099"/><stop offset="0.80" stop-color="#370099"/><stop offset="1.00" stop-color="#340099"/></linearGradient>
<linearGradient id="o309" gradientUnits="userSpaceOnUse" x1="1151.0" y1="502.5" x2="1131.8" y2="547.4"><stop offset="0.00" stop-color="#480099"/><stop offset="0.20" stop-color="#440099"/><stop offset="0.40" stop-color="#410099"/><stop offset="0.60" stop-color="#3f0099"/><stop offset="0.80" stop-color="#3c0099"/><stop offset="1.00" stop-color="#3a0099"/></linearGradient>
<linearGradient id="o310" gradientUnits="userSpaceOnUse" x1="1155.1" y1="501.0" x2="1137.3" y2="545.6"><stop offset="0.00" stop-color="#4d0099"/><stop offset="0.20" stop-color="#4a0099"/><stop offset="0.40" stop-color="#470099"/><stop offset="0.60" stop-color="#440099"/><stop offset="0.80" stop-color="#420099"/><stop offset="1.00" stop-color="#400099"/></linearGradient>
<linearGradient id="o311" gradientUnits="userSpaceOnUse" x1="1158.9" y1="499.5" x2="1142.5" y2="543.9"><stop offset="0.00" stop-color="#510099"/><stop offset="0.20" stop-color="#4f0099"/><stop offset="0.40" stop-color="#4c0099"/><stop offset="0.60" stop-color="#490099"/><stop offset="0.80" stop-color="#470099"/><stop offset="1.00" stop-color="#450099"/></linearGradient>
<linearGradient id="o312" gradientUnits="userSpaceOnUse" x1="1162.6" y1="498.1" x2="1147.6" y2="542.3"><stop offset="0.00" stop-color="#560099"/><stop offset="0.20" stop-color="#540099"/><stop offset="0.40" stop-color="#510099"/><stop offset="0.60" stop-color="#4f0099"/><stop offset="0.80" stop-color="#4d0099"/><stop offset="1.00" stop-color="#4a0099"/></linearGradient>
<linearGradient id="o313" gradientUnits="userSpaceOnUse" x1="1166.1" y1="496.7" x2="1152.4" y2="540.7"><stop offset="0.00" stop-color="#5b0099"/><stop offset="0.20" stop-color="#580099"/><stop offset="0.40" stop-color="#560099"/><stop offset="0.60" stop-color="#540099"/><stop offset="0.80" stop-color="#520099"/><stop offset="1.00" stop-color="#500099"/></linearGradient>
<linearGradient id="o314" gradientUnits="userSpaceOnUse" x1="1169.4" y1="495.4" x2="1157.1" y2="539.2"><stop offset="0.00" stop-color="#600099"/><stop offset="0.20" stop-color="#5d0099"/><stop offset="0.40" stop-color="#5b0099"/><stop offset="0.60" stop-color="#590099"/><stop offset="0.80" stop-color="#570099"/><stop offset="1.00" stop-color="#550099"/></linearGradient>
<linearGradient id="o315" gradientUnits="userSpaceOnUse" x1="1172.7" y1="494.2" x2="1161.6" y2="537.7"><stop offset="0.00" stop-color="#640099"/><stop offset="0.20" stop-color="#620099"/><stop offset="0.40" stop-color="#600099"/><stop offset="0.60" stop-color="#5e0099"/><stop offset="0.80" stop-color="#5c0099"/><stop offset="1.00" stop-color="#5a0099"/></linearGradient>
<linearGradient id="o316" gradientUnits="userSpaceOnUse" x1="1175.8" y1="493.0" x2="1166.0" y2="536.3"><stop offset="0.00" stop-color="#690099"/><stop offset="0.20" stop-color="#670099"/><stop offset="0.40" stop-color="#650099"/><stop offset="0.60" stop-color="#630099"/><stop offset="0.80" stop-color="#610099"/><stop offset="1.00" stop-color="#600099"/></linearGradient>
<linearGradient id="o317" gradientUnits="userSpaceOnUse" x1="1178.8" y1="491.8" x2="1170.2" y2="534.9"><stop offset="0.00" stop-color="#6d0099"/><stop offset="0.20" stop-color="#6b0099"/><stop offset="0.40" stop-color="#6a0099"/><stop offset="0.60" stop-color="#680099"/><stop offset="0.80" stop-color="#660099"/><stop offset="1.00" stop-color="#650099"/></linearGradient>
<linearGradient id="o318" gradientUnits="userSpaceOnUse" x1="1181.7" y1="490.7" x2="1174.4" y2="533.6"><stop offset="0.00" stop-color="#720099"/><stop offset="0.20" stop-color="#700099"/><stop offset="0.40" stop-color="#6e0099"/><stop offset="0.60" stop-color="#6d0099"/><stop offset="0.80" stop-color="#6b0099"/><stop offset="1.00" stop-color="#6a0099"/></linearGradient>
<linearGradient id="o319" gradientUnits="userSpaceOnUse" x1="1184.5" y1="489.6" x2="1178.4" y2="532.3"><stop offset="0.00" stop-color="#760099"/><stop offset="0.20" stop-color="#750099"/><stop offset="0.40" stop-color="#730099"/><stop offset="0.60" stop-color="#720099"/><stop offset="0.80" stop-color="#700099"/><stop offset="1.00" stop-color="#6f0099"/></linearGradient>
<linearGradient id="o320" gradientUnits="userSpaceOnUse" x1="1187.3" y1="488.6" x2="1182.3" y2="531.0"><stop offset="0.00" stop-color="#7b0099"/><stop offset="0.20" stop-color="#790099"/><stop offset="0.40" stop-color="#780099"/><stop offset="0.60" stop-color="#770099"/><stop offset="0.80" stop-color="#750099"/><stop offset="1.00" stop-color="#740099"/></linearGradient>
<linearGradient id="o321" gradientUnits="userSpaceOnUse" x1="1189.9" y1="487.5" x2="1186.1" y2="529.8"><stop offset="0.00" stop-color="#7f0099"/><stop offset="0.20" stop-color="#7e0099"/><stop offset="0.40" stop-color="#7c0099"/><stop offset="0.60" stop-color="#7b0099"/><stop offset="0.80" stop-color="#7a0099"/><stop offset="1.00" stop-color="#790099"/></linearGradient>
<linearGradient id="o322" gradientUnits="userSpaceOnUse" x1="1192.5" y1="486.5" x2="1189.8" y2="528.6"><stop offset="0.00" stop-color="#830099"/><stop offset="0.20" stop-color="#820099"/><stop offset="0.40" stop-color="#810099"/><stop offset="0.60" stop-color="#800099"/><stop offset="0.80" stop-color="#7f0099"/><stop offset="1.00" stop-color="#7f0099"/></linearGradient>
<linearGradient id="o323" gradientUnits="userSpaceOnUse" x1="1195.1" y1="485.6" x2="1193.4" y2="527.4"><stop offset="0.00" stop-color="#880099"/><stop offset="0.20" stop-color="#870099"/><stop offset="0.40" stop-color="#860099"/><stop offset="0.60" stop-color="#850099"/><stop offset="0.80" stop-color="#840099"/><stop offset="1.00" stop-color="#840099"/></linearGradient>
<linearGradient id="o324" gradientUnits="userSpaceOnUse" x1="1197.6" y1="484.6" x2="1197.0" y2="526.2"><stop offset="0.00" stop-color="#8c0099"/><stop offset="0.20" stop-color="#8b0099"/><stop offset="0.40" stop-color="#8b0099"/><stop offset="0.60" stop-color="#8a0099"/><stop offset="0.80" stop-color="#890099"/><stop offset="1.00" stop-color="#890099"/></linearGradient>
<linearGradient id="o325" gradientUnits="userSpaceOnUse" x1="1200.0" y1="483.7" x2="1200.5" y2="525.1"><stop offset="0.00" stop-color="#900099"/><stop offset="0.20" stop-color="#900099"/><stop offset="0.40" stop-color="#8f0099"/><stop offset="0.60" stop-color="#8f0099"/><stop offset="0.80" stop-color="#8e0099"/><stop offset="1.00" stop-color="#8e0099"/></linearGradient>
<linearGradient id="o326" gradientUnits="userSpaceOnUse" x1="1202.4" y1="482.7" x2="1204.0" y2="524.0"><stop offset="0.00" stop-color="#940099"/><stop offset="0.20" stop-color="#940099"/><stop offset="0.40" stop-color="#940099"/><stop offset="0.60" stop-color="#940099"/><stop offset="0.80" stop-color="#940099"/><stop offset="1.00" stop-color="#930099"/></linearGradient>
<linearGradient id="o327" gradientUnits="userSpaceOnUse" x1="1204.7" y1="481.8" x2="1207.4" y2="522.8"><stop offset="0.00" stop-color="#990099"/><stop offset="0.20" stop-color="#990099"/><stop offset="0.40" stop-color="#990099"/><stop offset="0.60" stop-color="#990099"/><stop offset="0.80" stop-color="#990099"/><stop offset="1.00" stop-color="#990099"/></linearGradient>
<linearGradient id="o328" gradientUnits="userSpaceOnUse" x1="1207.0" y1="481.0" x2="1210.8" y2="521.8"><stop offset="0.00" stop-color="#990095"/><stop offset="0.20" stop-color="#990095"/><stop offset="0.40" stop-color="#990095"/><stop offset="0.60" stop-color="#990094"/><stop offset="0.80" stop-color="#990094"/><stop offset="1.00" stop-color="#990094"/></linearGradient>
<linearGradient id="o329" gradientUnits="userSpaceOnUse" x1="1209.3" y1="480.1" x2="1214.1" y2="520.7"><stop offset="0.00" stop-color="#990091"/><stop offset="0.20" stop-color="#990091"/><stop offset="0.40" stop-color="#990090"/><stop offset="0.60" stop-color="#990090"/><stop offset="0.80" stop-color="#990090"/><stop offset="1.00" stop-color="#99008f"/></linearGradient>
<linearGradient id="o330" gradientUnits="userSpaceOnUse" x1="1211.5" y1="479.2" x2="1217.4" y2="519.6"><stop offset="0.00" stop-color="#99008d"/><stop offset="0.20" stop-color="#99008d"/><stop offset="0.40" stop-color="#99008c"/><stop offset="0.60" stop-color="#99008c"/><stop offset="0.80" stop-color="#99008b"/><stop offset="1.00" stop-color="#99008b"/></linearGradient>
<linearGradient id="o331" gradientUnits="userSpaceOnUse" x1="1213.7" y1="478.4" x2="1220.6" y2="518.5"><stop offset="0.00" stop-color="#99008a"/><stop offset="0.20" stop-color="#990089"/><stop offset="0.40" stop-color="#990088"/><stop offset="0.60" stop-color="#990087"/><stop offset="0.80" stop-color="#990087"/><stop offset="1.00" stop-color="#990086"/></linearGradient>
<linearGradient id="o332" gradientUnits="userSpaceOnUse" x1="1215.9" y1="477.5" x2="1223.9" y2="517.5"><stop offset="0.00" stop-color="#990086"/><stop offset="0.20" stop-color="#990085"/><stop offset="0.40" stop-color="#990084"/><stop offset="0.60" stop-color="#990083"/><stop offset="0.80" stop-color="#990083"/><stop offset="1.00" stop-color="#990082"/></linearGradient>
<linearGradient id="o333" gradientUnits="userSpaceOnUse" x1="1218.1" y1="476.7" x2="1227.1" y2="516.5"><stop offset="0.00" stop-color="#990083"/><stop offset="0.20" stop-color="#990082"/><stop offset="0.40" stop-color="#990081"/><stop offset="0.60" stop-color="#990080"/><stop offset="0.80" stop-color="#99007f"/><stop offset="1.00" stop-color="#99007e"/></linearGradient>
<linearGradient id="o334" gradientUnits="userSpaceOnUse" x1="1220.2" y1="475.9" x2="1230.3" y2="515.4"><stop offset="0.00" stop-color="#990080"/><stop offset="0.20" stop-color="#99007e"/><stop offset="0.40" stop-color="#99007d"/><stop offset="0.60" stop-color="#99007c"/><stop offset="0.80" stop-color="#99007b"/><stop offset="1.00" stop-color="#99007a"/></linearGradient>
<linearGradient id="o335" gradientUnits="userSpaceOnUse" x1="1222.4" y1="475.0" x2="1233.5" y2="514.4"><stop offset="0.00" stop-color="#99007c"/><stop offset="0.20" stop-color="#99007b"/><stop offset="0.40" stop-color="#99007a"/><stop offset="0.60" stop-color="#990079"/><stop offset="0.80" stop-color="#990078"/><stop offset="1.00" stop-color="#990077"/></linearGradient>
<linearGradient id="o336" gradientUnits="userSpaceOnUse" x1="1224.5" y1="474.2" x2="1236.6" y2="513.3"><stop offset="0.00" stop-color="#990079"/><stop offset="0.20" stop-color="#990078"/><stop offset="0.40" stop-color="#990077"/><stop offset="0.60" stop-color="#990075"/><stop offset="0.80" stop-color="#990074"/><stop offset="1.00" stop-color="#990073"/></linearGradient>
<linearGradient id="o337" gradientUnits="userSpaceOnUse" x1="1226.6" y1="473.4" x2="1239.8" y2="512.3"><stop offset="0.00" stop-color="#990076"/><stop offset="0.20" stop-color="#990075"/><stop offset="0.40" stop-color="#990073"/><stop offset="0.60" stop-color="#990072"/><stop offset="0.80" stop-color="#990071"/><stop offset="1.00" stop-color="#990070"/></linearGradient>
<linearGradient id="o338" gradientUnits="userSpaceOnUse" x1="1228.7" y1="472.6" x2="1243.0" y2="511.3"><stop offset="0.00" stop-color="#990074"/><stop offset="0.20" stop-color="#990072"/><stop offset="0.40" stop-color="#990070"/><stop offset="0.60" stop-color="#99006f"/><stop offset="0.80" stop-color="#99006e"/><stop offset="1.00" stop-color="#99006c"/></linearGradient>
<linearGradient id="o339" gradientUnits="userSpaceOnUse" x1="1230.8" y1="471.8" x2="1246.2" y2="510.2"><stop offset="0.00" stop-color="#990071"/><stop offset="0.20" stop-color="#99006f"/><stop offset="0.40" stop-color="#99006d"/><stop offset="0.60" stop-color="#99006c"/><stop offset="0.80" stop-color="#99006a"/><stop offset="1.00" stop-color="#990069"/></linearGradient>
<linearGradient id="o340" gradientUnits="userSpaceOnUse" x1="1233.0" y1="471.0" x2="1249.4" y2="509.2"><stop offset="0.00" stop-color="#99006e"/><stop offset="0.20" stop-color="#99006c"/><stop offset="0.40" stop-color="#99006b"/><stop offset="0.60" stop-color="#990069"/><stop offset="0.80" stop-color="#990067"/><stop offset="1.00" stop-color="#990066"/></linearGradient>
<linearGradient id="o341" gradientUnits="userSpaceOnUse" x1="1235.1" y1="470.1" x2="1252.6" y2="508.2"><stop offset="0.00" stop-color="#99006c"/><stop offset="0.20" stop-color="#99006a"/><stop offset="0.40" stop-color="#990068"/><stop offset="0.60" stop-color="#990066"/><stop offset="0.80" stop-color="#990064"/><stop offset="1.00" stop-color="#990063"/></linearGradient>
<linearGradient id="o342" gradientUnits="userSpaceOnUse" x1="1237.2" y1="469.3" x2="1255.8" y2="507.1"><stop offset="0.00" stop-color="#990069"/><stop offset="0.20" stop-color="#990067"/><stop offset="0.40" stop-color="#990065"/><stop offset="0.60" stop-color="#990063"/><stop offset="0.80" stop-color="#990062"/><stop offset="1.00" stop-color="#990060"/></linearGradient>
<linearGradient id="o343" gradientUnits="userSpaceOnUse" x1="1239.3" y1="468.5" x2="1259.1" y2="506.1"><stop offset="0.00" stop-color="#990067"/><stop offset="0.20" stop-color="#990064"/><stop offset="0.40" stop-color="#990062"/><stop offset="0.60" stop-color="#990061"/><stop offset="0.80" stop-color="#99005f"/><stop offset="1.00" stop-color="#99005d"/></linearGradient>
<linearGradient id="o344" gradientUnits="userSpaceOnUse" x1="1241.5" y1="467.7" x2="1262.4" y2="505.0"><stop offset="0.00" stop-color="#990064"/><stop offset="0.20" stop-color="#990062"/><stop offset="0.40" stop-color="#990060"/><stop offset="0.60" stop-color="#99005e"/><stop offset="0.80" stop-color="#99005c"/><stop offset="1.00" stop-color="#99005b"/></linearGradient>
<linearGradient id="o345" gradientUnits="userSpaceOnUse" x1="1243.7" y1="466.8" x2="1265.7" y2="503.9"><stop offset="0.00" stop-color="#990062"/><stop offset="0.20" stop-color="#99005f"/><stop offset="0.40" stop-color="#99005d"/><stop offset="0.60" stop-color="#99005b"/><stop offset="0.80" stop-color="#990059"/><stop offset="1.00" stop-color="#990058"/></linearGradient>
<linearGradient id="o346" gradientUnits="userSpaceOnUse" x1="1245.8" y1="466.0" x2="1269.1" y2="502.8"><stop offset="0.00" stop-color="#99005f"/><stop offset="0.20" stop-color="#99005d"/><stop offset="0.40" stop-color="#99005b"/><stop offset="0.60" stop-color="#990059"/><stop offset="0.80" stop-color="#990057"/><stop offset="1.00" stop-color="#990055"/></linearGradient>
<linearGradient id="o347" gradientUnits="userSpaceOnUse" x1="1248.0" y1="465.1" x2="1272.5" y2="501.7"><stop offset="0.00" stop-color="#99005d"/><stop offset="0.20" stop-color="#99005b"/><stop offset="0.40" stop-color="#990058"/><stop offset="0.60" stop-color="#990056"/><stop offset="0.80" stop-color="#990054"/><stop offset="1.00" stop-color="#990053"/></linearGradient>
<linearGradient id="o348" gradientUnits="userSpaceOnUse" x1="1250.3" y1="464.3" x2="1275.9" y2="500.6"><stop offset="0.00" stop-color="#99005b"/><stop offset="0.20" stop-color="#990058"/><stop offset="0.40" stop-color="#990056"/><stop offset="0.60" stop-color="#990054"/><stop offset="0.80" stop-color="#990052"/><stop offset="1.00" stop-color="#990050"/></linearGradient>
<linearGradient id="o349" gradientUnits="userSpaceOnUse" x1="1252.5" y1="463.4" x2="1279.5" y2="499.4"><stop offset="0.00" stop-color="#990059"/><stop offset="0.20" stop-color="#990056"/><stop offset="0.40" stop-color="#990054"/><stop offset="0.60" stop-color="#990051"/><stop offset="0.80" stop-color="#99004f"/><stop offset="1.00" stop-color="#99004e"/></linearGradient>
<linearGradient id="o350" gradientUnits="userSpaceOnUse" x1="1254.8" y1="462.5" x2="1283.0" y2="498.3"><stop offset="0.00" stop-color="#990056"/><stop offset="0.20" stop-color="#990054"/><stop offset="0.40" stop-color="#990051"/><stop offset="0.60" stop-color="#99004f"/><stop offset="0.80" stop-color="#99004d"/><stop offset="1.00" stop-color="#99004b"/></linearGradient>
<linearGradient id="o351" gradientUnits="userSpaceOnUse" x1="1257.2" y1="461.6" x2="1286.7" y2="497.1"><stop offset="0.00" stop-color="#990054"/><stop offset="0.20" stop-color="#990051"/><stop offset="0.40" stop-color="#99004f"/><stop offset="0.60" stop-color="#99004d"/><stop offset="0.80" stop-color="#99004a"/><stop offset="1.00" stop-color="#990049"/></linearGradient>
<linearGradient id="o352" gradientUnits="userSpaceOnUse" x1="1259.6" y1="460.7" x2="1290.4" y2="495.9"><stop offset="0.00" stop-color="#990052"/><stop offset="0.20" stop-color="#99004f"/><stop offset="0.40" stop-color="#99004d"/><stop offset="0.60" stop-color="#99004a"/><stop offset="0.80" stop-color="#990048"/><stop offset="1.00" stop-color="#990046"/></linearGradient>
<linearGradient id="o353" gradientUnits="userSpaceOnUse" x1="1262.0" y1="459.8" x2="1294.2" y2="494.7"><stop offset="0.00" stop-color="#990050"/><stop offset="0.20" stop-color="#99004d"/><stop offset="0.40" stop-color="#99004a"/><stop offset="0.60" stop-color="#990048"/><stop offset="0.80" stop-color="#990046"/><stop offset="1.00" stop-color="#990044"/></linearGradient>
<linearGradient id="o354" gradientUnits="userSpaceOnUse" x1="1264.5" y1="458.8" x2="1298.1" y2="493.4"><stop offset="0.00" stop-color="#99004e"/><stop offset="0.20" stop-color="#99004b"/><stop offset="0.40" stop-color="#990048"/><stop offset="0.60" stop-color="#990046"/><stop offset="0.80" stop-color="#990043"/><stop offset="1.00" stop-color="#990041"/></linearGradient>
<linearGradient id="o355" gradientUnits="userSpaceOnUse" x1="1267.0" y1="457.8" x2="1302.1" y2="492.1"><stop offset="0.00" stop-color="#99004c"/><stop offset="0.20" stop-color="#990048"/><stop offset="0.40" stop-color="#990046"/><stop offset="0.60" stop-color="#990043"/><stop offset="0.80" stop-color="#990041"/><stop offset="1.00" stop-color="#99003f"/></linearGradient>
<linearGradient id="o356" gradientUnits="userSpaceOnUse" x1="1269.6" y1="456.9" x2="1306.2" y2="490.7"><stop offset="0.00" stop-color="#990049"/><stop offset="0.20" stop-color="#990046"/><stop offset="0.40" stop-color="#990044"/><stop offset="0.60" stop-color="#990041"/><stop offset="0.80" stop-color="#99003f"/><stop offset="1.00" stop-color="#99003d"/></linearGradient>
<linearGradient id="o357" gradientUnits="userSpaceOnUse" x1="1272.2" y1="455.8" x2="1310.5" y2="489.4"><stop offset="0.00" stop-color="#990047"/><stop offset="0.20" stop-color="#990044"/><stop offset="0.40" stop-color="#990041"/><stop offset="0.60" stop-color="#99003f"/><stop offset="0.80" stop-color="#99003c"/><stop offset="1.00" stop-color="#99003a"/></linearGradient>
<linearGradient id="o358" gradientUnits="userSpaceOnUse" x1="1275.0" y1="454.8" x2="1314.9" y2="488.0"><stop offset="0.00" stop-color="#990045"/><stop offset="0.20" stop-color="#990042"/><stop offset="0.40" stop-color="#99003f"/><stop offset="0.60" stop-color="#99003d"/><stop offset="0.80" stop-color="#99003a"/><stop offset="1.00" stop-color="#990038"/></linearGradient>
<linearGradient id="o359" gradientUnits="userSpaceOnUse" x1="1277.8" y1="453.7" x2="1319.4" y2="486.5"><stop offset="0.00" stop-color="#990043"/><stop offset="0.20" stop-color="#990040"/><stop offset="0.40" stop-color="#99003d"/><stop offset="0.60" stop-color="#99003a"/><stop offset="0.80" stop-color="#990038"/><stop offset="1.00" stop-color="#990036"/></linearGradient>
<linearGradient id="o360" gradientUnits="userSpaceOnUse" x1="1280.7" y1="452.6" x2="1324.1" y2="485.0"><stop offset="0.00" stop-color="#990041"/><stop offset="0.20" stop-color="#99003e"/><stop offset="0.40" stop-color="#99003b"/><stop offset="0.60" stop-color="#990038"/><stop offset="0.80" stop-color="#990036"/><stop offset="1.00" stop-color="#990034"/></linearGradient>
<linearGradient id="o361" gradientUnits="userSpaceOnUse" x1="1283.7" y1="451.4" x2="1328.9" y2="483.4"><stop offset="0.00" stop-color="#99003f"/><stop offset="0.20" stop-color="#99003b"/><stop offset="0.40" stop-color="#990038"/><stop offset="0.60" stop-color="#990036"/><stop offset="0.80" stop-color="#990033"/><stop offset="1.00" stop-color="#990031"/></linearGradient>
<linearGradient id="o362" gradientUnits="userSpaceOnUse" x1="1286.8" y1="450.2" x2="1334.0" y2="481.7"><stop offset="0.00" stop-color="#99003d"/><stop offset="0.20" stop-color="#990039"/><stop offset="0.40" stop-color="#990036"/><stop offset="0.60" stop-color="#990033"/><stop offset="0.80" stop-color="#990031"/><stop offset="1.00" stop-color="#99002f"/></linearGradient>
<linearGradient id="o363" gradientUnits="userSpaceOnUse" x1="1290.0" y1="449.0" x2="1339.2" y2="480.0"><stop offset="0.00" stop-color="#99003a"/><stop offset="0.20" stop-color="#990037"/><stop offset="0.40" stop-color="#990034"/><stop offset="0.60" stop-color="#990031"/><stop offset="0.80" stop-color="#99002f"/><stop offset="1.00" stop-color="#99002d"/></linearGradient>
<linearGradient id="o364" gradientUnits="userSpaceOnUse" x1="1293.4" y1="447.7" x2="1344.7" y2="478.2"><stop offset="0.00" stop-color="#990038"/><stop offset="0.20" stop-color="#990035"/><stop offset="0.40" stop-color="#990032"/><stop offset="0.60" stop-color="#99002f"/><stop offset="0.80" stop-color="#99002c"/><stop offset="1.00" stop-color="#99002a"/></linearGradient>
<linearGradient id="o365" gradientUnits="userSpaceOnUse" x1="1296.9" y1="446.3" x2="1350.5" y2="476.4"><stop offset="0.00" stop-color="#990036"/><stop offset="0.20" stop-color="#990032"/><stop offset="0.40" stop-color="#99002f"/><stop offset="0.60" stop-color="#99002d"/><stop offset="0.80" stop-color="#99002a"/><stop offset="1.00" stop-color="#990028"/></linearGradient>
<linearGradient id="o366" gradientUnits="userSpaceOnUse" x1="1300.5" y1="444.9" x2="1356.5" y2="474.4"><stop offset="0.00" stop-color="#990034"/><stop offset="0.20" stop-color="#990030"/><stop offset="0.40" stop-color="#99002d"/><stop offset="0.60" stop-color="#99002a"/><stop offset="0.80" stop-color="#990028"/><stop offset="1.00" stop-color="#990026"/></linearGradient>
<linearGradient id="o367" gradientUnits="userSpaceOnUse" x1="1304.3" y1="443.5" x2="1362.9" y2="472.3"><stop offset="0.00" stop-color="#990032"/><stop offset="0.20" stop-color="#99002e"/><stop offset="0.40" stop-color="#99002b"/><stop offset="0.60" stop-color="#990028"/><stop offset="0.80" stop-color="#990025"/><stop offset="1.00" stop-color="#990023"/></linearGradient>
<linearGradient id="o368" gradientUnits="userSpaceOnUse" x1="1308.3" y1="441.9" x2="1369.6" y2="470.2"><stop offset="0.00" stop-color="#99002f"/><stop offset="0.20" stop-color="#99002c"/><stop offset="0.40" stop-color="#990028"/><stop offset="0.60" stop-color="#990026"/><stop offset="0.80" stop-color="#990023"/><stop offset="1.00" stop-color="#990021"/></linearGradient>
<linearGradient id="o369" gradientUnits="userSpaceOnUse" x1="1312.6" y1="440.3" x2="1376.7" y2="467.9"><stop offset="0.00" stop-color="#99002d"/><stop offset="0.20" stop-color="#990029"/><stop offset="0.40" stop-color="#990026"/><stop offset="0.60" stop-color="#990023"/><stop offset="0.80" stop-color="#990021"/><stop offset="1.00" stop-color="#99001e"/></linearGradient>
<linearGradient id="o370" gradientUnits="userSpaceOnUse" x1="1317.0" y1="438.6" x2="1384.3" y2="465.4"><stop offset="0.00" stop-color="#99002b"/><stop offset="0.20" stop-color="#990027"/><stop offset="0.40" stop-color="#990024"/><stop offset="0.60" stop-color="#990021"/><stop offset="0.80" stop-color="#99001e"/><stop offset="1.00" stop-color="#99001c"/></linearGradient>
<linearGradient id="o371" gradientUnits="userSpaceOnUse" x1="1321.7" y1="436.8" x2="1392.3" y2="462.8"><stop offset="0.00" stop-color="#990028"/><stop offset="0.20" stop-color="#990024"/><stop offset="0.40" stop-color="#990021"/><stop offset="0.60" stop-color="#99001e"/><stop offset="0.80" stop-color="#99001c"/><stop offset="1.00" stop-color="#990019"/></linearGradient>
<linearGradient id="o372" gradientUnits="userSpaceOnUse" x1="1326.7" y1="434.8" x2="1400.9" y2="460.0"><stop offset="0.00" stop-color="#990026"/><stop offset="0.20" stop-color="#990022"/><stop offset="0.40" stop-color="#99001f"/><stop offset="0.60" stop-color="#99001c"/><stop offset="0.80" stop-color="#990019"/><stop offset="1.00" stop-color="#990017"/></linearGradient>
<linearGradient id="o373" gradientUnits="userSpaceOnUse" x1="1332.0" y1="432.8" x2="1410.1" y2="457.0"><stop offset="0.00" stop-color="#990023"/><stop offset="0.20" stop-color="#99001f"/><stop offset="0.40" stop-color="#99001c"/><stop offset="0.60" stop-color="#990019"/><stop offset="0.80" stop-color="#990017"/><stop offset="1.00" stop-color="#990014"/></linearGradient>
<linearGradient id="o374" gradientUnits="userSpaceOnUse" x1="1337.7" y1="430.6" x2="1420.0" y2="453.8"><stop offset="0.00" stop-color="#990021"/><stop offset="0.20" stop-color="#99001d"/><stop offset="0.40" stop-color="#990019"/><stop offset="0.60" stop-color="#990016"/><stop offset="0.80" stop-color="#990014"/><stop offset="1.00" stop-color="#990012"/></linearGradient>
<linearGradient id="o375" gradientUnits="userSpaceOnUse" x1="1343.8" y1="428.2" x2="1430.8" y2="450.3"><stop offset="0.00" stop-color="#99001e"/><stop offset="0.20" stop-color="#99001a"/><stop offset="0.40" stop-color="#990017"/><stop offset="0.60" stop-color="#990014"/><stop offset="0.80" stop-color="#990011"/><stop offset="1.00" stop-color="#99000f"/></linearGradient>
<linearGradient id="o376" gradientUnits="userSpaceOnUse" x1="1350.4" y1="425.7" x2="1442.4" y2="446.5"><stop offset="0.00" stop-color="#99001b"/><stop offset="0.20" stop-color="#990017"/><stop offset="0.40" stop-color="#990014"/><stop offset="0.60" stop-color="#990011"/><stop offset="0.80" stop-color="#99000e"/><stop offset="1.00" stop-color="#99000c"/></linearGradient>
<linearGradient id="o377" gradientUnits="userSpaceOnUse" x1="1357.5" y1="423.0" x2="1455.1" y2="442.4"><stop offset="0.00" stop-color="#990018"/><stop offset="0.20" stop-color="#990014"/><stop offset="0.40" stop-color="#990011"/><stop offset="0.60" stop-color="#99000e"/><stop offset="0.80" stop-color="#99000c"/><stop offset="1.00" stop-color="#990009"/></linearGradient>
<linearGradient id="o378" gradientUnits="userSpaceOnUse" x1="1365.2" y1="420.0" x2="1469.1" y2="437.9"><stop offset="0.00" stop-color="#990016"/><stop offset="0.20" stop-color="#990012"/><stop offset="0.40" stop-color="#99000e"/><stop offset="0.60" stop-color="#99000b"/><stop offset="0.80" stop-color="#990009"/><stop offset="1.00" stop-color="#990007"/></linearGradient>
<linearGradient id="o379" gradientUnits="userSpaceOnUse" x1="1373.6" y1="416.8" x2="1484.6" y2="432.8"><stop offset="0.00" stop-color="#990013"/><stop offset="0.20" stop-color="#99000f"/><stop offset="0.40" stop-color="#99000b"/><stop offset="0.60" stop-color="#990008"/><stop offset="0.80" stop-color="#990006"/><stop offset="1.00" stop-color="#990004"/></linearGradient>
<linearGradient id="o380" gradientUnits="userSpaceOnUse" x1="1382.9" y1="413.2" x2="1501.8" y2="427.3"><stop offset="0.00" stop-color="#990010"/><stop offset="0.20" stop-color="#99000c"/><stop offset="0.40" stop-color="#990008"/><stop offset="0.60" stop-color="#990005"/><stop offset="0.80" stop-color="#990003"/><stop offset="1.00" stop-color="#990000"/></linearGradient>
<linearGradient id="o381" gradientUnits="userSpaceOnUse" x1="1393.1" y1="409.3" x2="1503.7" y2="419.4"><stop offset="0.00" stop-color="#99000c"/><stop offset="0.20" stop-color="#990009"/><stop offset="0.40" stop-color="#990006"/><stop offset="0.60" stop-color="#990003"/><stop offset="0.80" stop-color="#990001"/><stop offset="1.00" stop-color="#990000"/></linearGradient>
<linearGradient id="o382" gradientUnits="userSpaceOnUse" x1="1404.4" y1="404.9" x2="1491.0" y2="410.6"><stop offset="0.00" stop-color="#990009"/><stop offset="0.20" stop-color="#990006"/><stop offset="0.40" stop-color="#990004"/><stop offset="0.60" stop-color="#990002"/><stop offset="0.80" stop-color="#990000"/><stop offset="1.00" stop-color="#990000"/></linearGradient>
<linearGradient id="o383" gradientUnits="userSpaceOnUse" x1="1417.1" y1="400.0" x2="1479.3" y2="402.4"><stop offset="0.00" stop-color="#990006"/><stop offset="0.20" stop-color="#990004"/><stop offset="0.40" stop-color="#990002"/><stop offset="0.60" stop-color="#990001"/><stop offset="0.80" stop-color="#990000"/><stop offset="1.00" stop-color="#990000"/></linearGradient>
<linearGradient id="o384" gradientUnits="userSpaceOnUse" x1="1431.5" y1="394.5" x2="1468.6" y2="394.9"><stop offset="0.00" stop-color="#990002"/><stop offset="0.20" stop-color="#990001"/><stop offset="0.40" stop-color="#990000"/><stop offset="0.60" stop-color="#990000"/><stop offset="0.80" stop-color="#990000"/><stop offset="1.00" stop-color="#990000"/></linearGradient>
<clipPath id="tri"><polygon points="1440.8,390.9 1189.4,251.3 1078.5,530.5"/></clipPath>
<g id="innerg"><path d="M1198.8 391.4 L1442.6 391.9 L1433.7 387.0Z" fill="url(#w1)"/><path d="M1198.8 391.4 L1437.3 389.0 L1428.4 384.1Z" fill="url(#w2)"/><path d="M1198.8 391.4 L1432.1 386.1 L1423.2 381.1Z" fill="url(#w3)"/><path d="M1198.8 391.4 L1426.9 383.2 L1418.0 378.2Z" fill="url(#w4)"/><path d="M1198.8 391.4 L1421.6 380.3 L1412.7 375.3Z" fill="url(#w5)"/><path d="M1198.8 391.4 L1416.4 377.4 L1407.5 372.4Z" fill="url(#w6)"/><path d="M1198.8 391.4 L1411.2 374.5 L1402.3 369.5Z" fill="url(#w7)"/><path d="M1198.8 391.4 L1405.9 371.6 L1397.0 366.6Z" fill="url(#w8)"/><path d="M1198.8 391.4 L1400.7 368.6 L1391.8 363.7Z" fill="url(#w9)"/><path d="M1198.8 391.4 L1395.5 365.7 L1386.6 360.8Z" fill="url(#w10)"/><path d="M1198.8 391.4 L1390.2 362.8 L1381.3 357.9Z" fill="url(#w11)"/><path d="M1198.8 391.4 L1385.0 359.9 L1376.1 355.0Z" fill="url(#w12)"/><path d="M1198.8 391.4 L1379.7 357.0 L1370.8 352.1Z" fill="url(#w13)"/><path d="M1198.8 391.4 L1374.5 354.1 L1365.6 349.2Z" fill="url(#w14)"/><path d="M1198.8 391.4 L1369.3 351.2 L1360.4 346.3Z" fill="url(#w15)"/><path d="M1198.8 391.4 L1364.0 348.3 L1355.1 343.3Z" fill="url(#w16)"/><path d="M1198.8 391.4 L1358.8 345.4 L1349.9 340.4Z" fill="url(#w17)"/><path d="M1198.8 391.4 L1353.6 342.5 L1344.7 337.5Z" fill="url(#w18)"/><path d="M1198.8 391.4 L1348.3 339.6 L1339.4 334.6Z" fill="url(#w19)"/><path d="M1198.8 391.4 L1343.1 336.7 L1334.2 331.7Z" fill="url(#w20)"/><path d="M1198.8 391.4 L1337.9 333.7 L1328.9 328.8Z" fill="url(#w21)"/><path d="M1198.8 391.4 L1332.6 330.8 L1323.7 325.9Z" fill="url(#w22)"/><path d="M1198.8 391.4 L1327.4 327.9 L1318.5 323.0Z" fill="url(#w23)"/><path d="M1198.8 391.4 L1322.1 325.0 L1313.2 320.1Z" fill="url(#w24)"/><path d="M1198.8 391.4 L1316.9 322.1 L1308.0 317.2Z" fill="url(#w25)"/><path d="M1198.8 391.4 L1311.7 319.2 L1302.8 314.3Z" fill="url(#w26)"/><path d="M1198.8 391.4 L1306.4 316.3 L1297.5 311.4Z" fill="url(#w27)"/><path d="M1198.8 391.4 L1301.2 313.4 L1292.3 308.4Z" fill="url(#w28)"/><path d="M1198.8 391.4 L1296.0 310.5 L1287.1 305.5Z" fill="url(#w29)"/><path d="M1198.8 391.4 L1290.7 307.6 L1281.8 302.6Z" fill="url(#w30)"/><path d="M1198.8 391.4 L1285.5 304.7 L1276.6 299.7Z" fill="url(#w31)"/><path d="M1198.8 391.4 L1280.2 301.8 L1271.3 296.8Z" fill="url(#w32)"/><path d="M1198.8 391.4 L1275.0 298.8 L1266.1 293.9Z" fill="url(#w33)"/><path d="M1198.8 391.4 L1269.8 295.9 L1260.9 291.0Z" fill="url(#w34)"/><path d="M1198.8 391.4 L1264.5 293.0 L1255.6 288.1Z" fill="url(#w35)"/><path d="M1198.8 391.4 L1259.3 290.1 L1250.4 285.2Z" fill="url(#w36)"/><path d="M1198.8 391.4 L1254.1 287.2 L1245.2 282.3Z" fill="url(#w37)"/><path d="M1198.8 391.4 L1248.8 284.3 L1239.9 279.4Z" fill="url(#w38)"/><path d="M1198.8 391.4 L1243.6 281.4 L1234.7 276.5Z" fill="url(#w39)"/><path d="M1198.8 391.4 L1238.4 278.5 L1229.5 273.5Z" fill="url(#w40)"/><path d="M1198.8 391.4 L1233.1 275.6 L1224.2 270.6Z" fill="url(#w41)"/><path d="M1198.8 391.4 L1227.9 272.7 L1219.0 267.7Z" fill="url(#w42)"/><path d="M1198.8 391.4 L1222.6 269.8 L1213.7 264.8Z" fill="url(#w43)"/><path d="M1198.8 391.4 L1217.4 266.9 L1208.5 261.9Z" fill="url(#w44)"/><path d="M1198.8 391.4 L1212.2 264.0 L1203.3 259.0Z" fill="url(#w45)"/><path d="M1198.8 391.4 L1206.9 261.0 L1198.0 256.1Z" fill="url(#w46)"/><path d="M1198.8 391.4 L1201.7 258.1 L1192.8 253.2Z" fill="url(#w47)"/><path d="M1198.8 391.4 L1196.5 255.2 L1187.6 250.3Z" fill="url(#w48)"/><path d="M1198.8 391.4 L1190.2 249.3 L1186.3 259.2Z" fill="url(#w49)"/><path d="M1198.8 391.4 L1187.9 255.1 L1184.0 265.0Z" fill="url(#w50)"/><path d="M1198.8 391.4 L1185.6 260.9 L1181.7 270.8Z" fill="url(#w51)"/><path d="M1198.8 391.4 L1183.3 266.7 L1179.3 276.6Z" fill="url(#w52)"/><path d="M1198.8 391.4 L1181.0 272.5 L1177.0 282.4Z" fill="url(#w53)"/><path d="M1198.8 391.4 L1178.6 278.3 L1174.7 288.2Z" fill="url(#w54)"/><path d="M1198.8 391.4 L1176.3 284.2 L1172.4 294.0Z" fill="url(#w55)"/><path d="M1198.8 391.4 L1174.0 290.0 L1170.1 299.9Z" fill="url(#w56)"/><path d="M1198.8 391.4 L1171.7 295.8 L1167.8 305.7Z" fill="url(#w57)"/><path d="M1198.8 391.4 L1169.4 301.6 L1165.5 311.5Z" fill="url(#w58)"/><path d="M1198.8 391.4 L1167.1 307.4 L1163.2 317.3Z" fill="url(#w59)"/><path d="M1198.8 391.4 L1164.8 313.2 L1160.9 323.1Z" fill="url(#w60)"/><path d="M1198.8 391.4 L1162.5 319.1 L1158.5 328.9Z" fill="url(#w61)"/><path d="M1198.8 391.4 L1160.2 324.9 L1156.2 334.8Z" fill="url(#w62)"/><path d="M1198.8 391.4 L1157.9 330.7 L1153.9 340.6Z" fill="url(#w63)"/><path d="M1198.8 391.4 L1155.5 336.5 L1151.6 346.4Z" fill="url(#w64)"/><path d="M1198.8 391.4 L1153.2 342.3 L1149.3 352.2Z" fill="url(#w65)"/><path d="M1198.8 391.4 L1150.9 348.1 L1147.0 358.0Z" fill="url(#w66)"/><path d="M1198.8 391.4 L1148.6 354.0 L1144.7 363.8Z" fill="url(#w67)"/><path d="M1198.8 391.4 L1146.3 359.8 L1142.4 369.7Z" fill="url(#w68)"/><path d="M1198.8 391.4 L1144.0 365.6 L1140.1 375.5Z" fill="url(#w69)"/><path d="M1198.8 391.4 L1141.7 371.4 L1137.8 381.3Z" fill="url(#w70)"/><path d="M1198.8 391.4 L1139.4 377.2 L1135.4 387.1Z" fill="url(#w71)"/><path d="M1198.8 391.4 L1137.1 383.0 L1133.1 392.9Z" fill="url(#w72)"/><path d="M1198.8 391.4 L1134.8 388.9 L1130.8 398.7Z" fill="url(#w73)"/><path d="M1198.8 391.4 L1132.4 394.7 L1128.5 404.6Z" fill="url(#w74)"/><path d="M1198.8 391.4 L1130.1 400.5 L1126.2 410.4Z" fill="url(#w75)"/><path d="M1198.8 391.4 L1127.8 406.3 L1123.9 416.2Z" fill="url(#w76)"/><path d="M1198.8 391.4 L1125.5 412.1 L1121.6 422.0Z" fill="url(#w77)"/><path d="M1198.8 391.4 L1123.2 417.9 L1119.3 427.8Z" fill="url(#w78)"/><path d="M1198.8 391.4 L1120.9 423.8 L1117.0 433.6Z" fill="url(#w79)"/><path d="M1198.8 391.4 L1118.6 429.6 L1114.7 439.5Z" fill="url(#w80)"/><path d="M1198.8 391.4 L1116.3 435.4 L1112.3 445.3Z" fill="url(#w81)"/><path d="M1198.8 391.4 L1114.0 441.2 L1110.0 451.1Z" fill="url(#w82)"/><path d="M1198.8 391.4 L1111.6 447.0 L1107.7 456.9Z" fill="url(#w83)"/><path d="M1198.8 391.4 L1109.3 452.8 L1105.4 462.7Z" fill="url(#w84)"/><path d="M1198.8 391.4 L1107.0 458.6 L1103.1 468.5Z" fill="url(#w85)"/><path d="M1198.8 391.4 L1104.7 464.5 L1100.8 474.4Z" fill="url(#w86)"/><path d="M1198.8 391.4 L1102.4 470.3 L1098.5 480.2Z" fill="url(#w87)"/><path d="M1198.8 391.4 L1100.1 476.1 L1096.2 486.0Z" fill="url(#w88)"/><path d="M1198.8 391.4 L1097.8 481.9 L1093.9 491.8Z" fill="url(#w89)"/><path d="M1198.8 391.4 L1095.5 487.7 L1091.5 497.6Z" fill="url(#w90)"/><path d="M1198.8 391.4 L1093.2 493.5 L1089.2 503.4Z" fill="url(#w91)"/><path d="M1198.8 391.4 L1090.9 499.4 L1086.9 509.3Z" fill="url(#w92)"/><path d="M1198.8 391.4 L1088.5 505.2 L1084.6 515.1Z" fill="url(#w93)"/><path d="M1198.8 391.4 L1086.2 511.0 L1082.3 520.9Z" fill="url(#w94)"/><path d="M1198.8 391.4 L1083.9 516.8 L1080.0 526.7Z" fill="url(#w95)"/><path d="M1198.8 391.4 L1081.6 522.6 L1077.7 532.5Z" fill="url(#w96)"/><path d="M1198.8 391.4 L1075.9 531.5 L1088.7 526.6Z" fill="url(#w97)"/><path d="M1198.8 391.4 L1083.4 528.6 L1096.2 523.6Z" fill="url(#w98)"/><path d="M1198.8 391.4 L1090.9 525.7 L1103.8 520.7Z" fill="url(#w99)"/><path d="M1198.8 391.4 L1098.5 522.8 L1111.3 517.8Z" fill="url(#w100)"/><path d="M1198.8 391.4 L1106.0 519.9 L1118.9 514.9Z" fill="url(#w101)"/><path d="M1198.8 391.4 L1113.6 517.0 L1126.4 512.0Z" fill="url(#w102)"/><path d="M1198.8 391.4 L1121.1 514.0 L1134.0 509.1Z" fill="url(#w103)"/><path d="M1198.8 391.4 L1128.7 511.1 L1141.5 506.2Z" fill="url(#w104)"/><path d="M1198.8 391.4 L1136.2 508.2 L1149.1 503.3Z" fill="url(#w105)"/><path d="M1198.8 391.4 L1143.8 505.3 L1156.6 500.4Z" fill="url(#w106)"/><path d="M1198.8 391.4 L1151.3 502.4 L1164.2 497.5Z" fill="url(#w107)"/><path d="M1198.8 391.4 L1158.9 499.5 L1171.7 494.6Z" fill="url(#w108)"/><path d="M1198.8 391.4 L1166.4 496.6 L1179.2 491.7Z" fill="url(#w109)"/><path d="M1198.8 391.4 L1174.0 493.7 L1186.8 488.7Z" fill="url(#w110)"/><path d="M1198.8 391.4 L1181.5 490.8 L1194.3 485.8Z" fill="url(#w111)"/><path d="M1198.8 391.4 L1189.1 487.9 L1201.9 482.9Z" fill="url(#w112)"/><path d="M1198.8 391.4 L1196.6 485.0 L1209.4 480.0Z" fill="url(#w113)"/><path d="M1198.8 391.4 L1204.2 482.1 L1217.0 477.1Z" fill="url(#w114)"/><path d="M1198.8 391.4 L1211.7 479.2 L1224.5 474.2Z" fill="url(#w115)"/><path d="M1198.8 391.4 L1219.2 476.2 L1232.1 471.3Z" fill="url(#w116)"/><path d="M1198.8 391.4 L1226.8 473.3 L1239.6 468.4Z" fill="url(#w117)"/><path d="M1198.8 391.4 L1234.3 470.4 L1247.2 465.5Z" fill="url(#w118)"/><path d="M1198.8 391.4 L1241.9 467.5 L1254.7 462.6Z" fill="url(#w119)"/><path d="M1198.8 391.4 L1249.4 464.6 L1262.3 459.7Z" fill="url(#w120)"/><path d="M1198.8 391.4 L1257.0 461.7 L1269.8 456.8Z" fill="url(#w121)"/><path d="M1198.8 391.4 L1264.5 458.8 L1277.4 453.9Z" fill="url(#w122)"/><path d="M1198.8 391.4 L1272.1 455.9 L1284.9 450.9Z" fill="url(#w123)"/><path d="M1198.8 391.4 L1279.6 453.0 L1292.5 448.0Z" fill="url(#w124)"/><path d="M1198.8 391.4 L1287.2 450.1 L1300.0 445.1Z" fill="url(#w125)"/><path d="M1198.8 391.4 L1294.7 447.2 L1307.5 442.2Z" fill="url(#w126)"/><path d="M1198.8 391.4 L1302.3 444.3 L1315.1 439.3Z" fill="url(#w127)"/><path d="M1198.8 391.4 L1309.8 441.3 L1322.6 436.4Z" fill="url(#w128)"/><path d="M1198.8 391.4 L1317.4 438.4 L1330.2 433.5Z" fill="url(#w129)"/><path d="M1198.8 391.4 L1324.9 435.5 L1337.7 430.6Z" fill="url(#w130)"/><path d="M1198.8 391.4 L1332.5 432.6 L1345.3 427.7Z" fill="url(#w131)"/><path d="M1198.8 391.4 L1340.0 429.7 L1352.8 424.8Z" fill="url(#w132)"/><path d="M1198.8 391.4 L1347.5 426.8 L1360.4 421.9Z" fill="url(#w133)"/><path d="M1198.8 391.4 L1355.1 423.9 L1367.9 419.0Z" fill="url(#w134)"/><path d="M1198.8 391.4 L1362.6 421.0 L1375.5 416.0Z" fill="url(#w135)"/><path d="M1198.8 391.4 L1370.2 418.1 L1383.0 413.1Z" fill="url(#w136)"/><path d="M1198.8 391.4 L1377.7 415.2 L1390.6 410.2Z" fill="url(#w137)"/><path d="M1198.8 391.4 L1385.3 412.3 L1398.1 407.3Z" fill="url(#w138)"/><path d="M1198.8 391.4 L1392.8 409.4 L1405.7 404.4Z" fill="url(#w139)"/><path d="M1198.8 391.4 L1400.4 406.4 L1413.2 401.5Z" fill="url(#w140)"/><path d="M1198.8 391.4 L1407.9 403.5 L1420.8 398.6Z" fill="url(#w141)"/><path d="M1198.8 391.4 L1415.5 400.6 L1428.3 395.7Z" fill="url(#w142)"/><path d="M1198.8 391.4 L1423.0 397.7 L1435.8 392.8Z" fill="url(#w143)"/><path d="M1198.8 391.4 L1430.6 394.8 L1443.4 389.9Z" fill="url(#w144)"/></g>
<linearGradient id="ins1" x1="0" y1="0" x2="1" y2="1"><stop offset="0" stop-color="#6a9800"/><stop offset="0.5" stop-color="#949400"/><stop offset="1" stop-color="#9a7000"/></linearGradient>
<linearGradient id="ins2" x1="0" y1="0.2" x2="1" y2="1"><stop offset="0" stop-color="#aaff00"/><stop offset="0.5" stop-color="#ffff10"/><stop offset="1" stop-color="#ffb000"/></linearGradient>
<linearGradient id="rbr" x1="0" x2="0" y1="0" y2="1"><stop offset="0" stop-color="#ff1818"/><stop offset="1" stop-color="#dd0000"/></linearGradient>
<linearGradient id="rbg" x1="0" x2="0" y1="0" y2="1"><stop offset="0" stop-color="#1a8a1a"/><stop offset="1" stop-color="#0c660c"/></linearGradient>
<linearGradient id="rbb" x1="0" x2="0" y1="0" y2="1"><stop offset="0" stop-color="#5a5aff"/><stop offset="0.2" stop-color="#0808ff"/><stop offset="0.6" stop-color="#0000f0"/><stop offset="1" stop-color="#000058"/></linearGradient>
<linearGradient id="thd" x1="0" x2="0" y1="0" y2="1"><stop offset="0" stop-color="#1a1a1a"/><stop offset="1" stop-color="#080808"/></linearGradient>
<linearGradient id="bbar" x1="0" x2="0" y1="0" y2="1"><stop offset="0" stop-color="#474747"/><stop offset="0.5" stop-color="#2e2e2e"/><stop offset="1" stop-color="#262626"/></linearGradient>
<linearGradient id="bb" x1="0" x2="0" y1="0" y2="1"><stop offset="0" stop-color="#a8a8a8"/><stop offset="1" stop-color="#5a5a5a"/></linearGradient>
<linearGradient id="bbsel" x1="0" x2="0" y1="0" y2="1"><stop offset="0" stop-color="#2a2a2a"/><stop offset="1" stop-color="#333"/></linearGradient>
<linearGradient id="cg" x1="0" x2="0" y1="0" y2="1"><stop offset="0" stop-color="#6e6e6e"/><stop offset="1" stop-color="#b4b4b4"/></linearGradient></defs>
<rect x="0" y="0" width="1600" height="870" fill="#333"/>
<rect x="0" y="0" width="1600" height="23" fill="#0098bc"/>
<rect x="0" y="23" width="1600" height="66" fill="#232323"/>
<rect x="0.5" y="16" width="182" height="36.5" rx="3" fill="url(#gbtn)" stroke="#eee" stroke-width="1"/>
<text x="13" y="47.8" font-size="30" letter-spacing="2" fill="#1a6a10" font-family="Liberation Sans" stroke="#1a6a10" stroke-width="1.4" opacity="0.45" textLength="132" lengthAdjust="spacingAndGlyphs" transform="translate(0.8,0.8)">CalMAN</text>
<text x="13" y="47.8" font-size="30" letter-spacing="2" fill="#fff" font-family="Liberation Sans" stroke="#fff" stroke-width="1.4" textLength="132" lengthAdjust="spacingAndGlyphs">CalMAN</text>
<circle cx="166" cy="37" r="9.5" fill="url(#gcirc)"/>
<path d="M161.5 36 L170.5 36 L166 41 Z" fill="#fff"/>
<rect x="0" y="0" width="200" height="23" fill="#0098bc"/>
<circle cx="10" cy="10.8" r="7.3" fill="none" stroke="url(#rainbowc)" stroke-width="1.4" opacity="0.85"/>
<circle cx="10" cy="10.8" r="6.3" fill="#000"/>
<text x="10" y="13.3" font-size="7" fill="#fff" text-anchor="middle" font-weight="bold" font-family="Liberation Sans" >CM</text>
<text x="23" y="16" font-size="12.5" fill="#fff" text-anchor="start" font-weight="normal" font-family="Liberation Sans" textLength="336" lengthAdjust="spacingAndGlyphs" >CalMAN 2016 CalMAN Ultimate for Business 58 Days Remaining</text>
<rect x="1479" y="10" width="10" height="1" fill="#fff"/>
<rect x="1524.5" y="7.5" width="7" height="7" fill="none" stroke="#fff" stroke-width="1"/>
<path d="M1526.5 7.5 V5.5 H1533.5 V12.5 H1531.5" fill="none" stroke="#fff" stroke-width="1"/>
<path d="M1570 5 L1580 15 M1580 5 L1570 15" stroke="#fff" stroke-width="1.2"/>
<rect x="190" y="35.5" width="1410" height="5" fill="url(#rainbow)"/>
<rect x="0" y="58.5" width="26" height="27" rx="3" fill="url(#gray1)" stroke="#bbb"/>
<circle cx="12" cy="72" r="9" fill="#666"/>
<path d="M10 67 L16 72 L10 77 Z" fill="#fff"/>
<rect x="30" y="58.5" width="90" height="35" rx="3" fill="url(#tabg)" stroke="#777"/>
<line x1="87.5" y1="59" x2="87.5" y2="88" stroke="#555"/>
<text x="35.5" y="78.5" font-size="12" fill="#ddd" text-anchor="start" font-weight="normal" font-family="Liberation Sans" textLength="46.5" lengthAdjust="spacingAndGlyphs" >History 1</text>
<circle cx="103" cy="74" r="9" fill="#333"/>
<text x="103" y="79" font-size="12" fill="#777" text-anchor="middle" font-weight="normal" font-family="Liberation Sans" >+</text>
<rect x="0" y="89" width="1600" height="781" fill="#333"/>
<rect x="0" y="89" width="1.2" height="718" fill="#262626"/>
<path d="M1058 88 V61 Q1058 58 1061 58 H1210 Q1213 58 1213 61 V88 Z" fill="url(#tb)"/>
<rect x="1058" y="58.5" width="6" height="29.5" fill="#00dd00"/>
<text x="1067" y="70" font-size="11.5" fill="#eee" text-anchor="start" font-weight="normal" font-family="Liberation Sans" textLength="66" lengthAdjust="spacingAndGlyphs" >X-Rite i1Pro 2</text>
<text x="1067" y="84" font-size="11.5" fill="#eee" text-anchor="start" font-weight="normal" font-family="Liberation Sans" textLength="76" lengthAdjust="spacingAndGlyphs" >LCD Direct View</text>
<circle cx="1157.5" cy="73" r="10" fill="url(#ddc)"/>
<path d="M1152 71 L1163 71 L1157.5 77 Z" fill="#fff"/>
<rect x="1176.5" y="61" width="1" height="27" fill="#444"/>
<circle cx="1197.5" cy="73" r="13" fill="#0000ee" stroke="#fff" stroke-width="1"/>
<text x="1197.5" y="76.8" font-size="10.5" fill="#fff" text-anchor="middle" font-weight="normal" font-family="Liberation Sans" textLength="17" lengthAdjust="spacingAndGlyphs" stroke="#fff" stroke-width="0.25">236</text>
<path d="M1219 88 V61 Q1219 58 1222 58 H1345 Q1348 58 1348 61 V88 Z" fill="url(#tb)"/>
<rect x="1219" y="58.5" width="6" height="29.5" fill="#dddd00"/>
<text x="1228" y="70" font-size="11.5" fill="#eee" text-anchor="start" font-weight="normal" font-family="Liberation Sans" textLength="33" lengthAdjust="spacingAndGlyphs" >Source</text>
<circle cx="1332" cy="73" r="10" fill="url(#ddc)"/>
<path d="M1326.5 71 L1337.5 71 L1332 77 Z" fill="#fff"/>
<path d="M1355 88 V61 Q1355 58 1358 58 H1495 Q1498 58 1498 61 V88 Z" fill="url(#tb)"/>
<rect x="1355" y="58.5" width="6" height="29.5" fill="#dddd00"/>
<text x="1364" y="70" font-size="11.5" fill="#eee" text-anchor="start" font-weight="normal" font-family="Liberation Sans" textLength="105" lengthAdjust="spacingAndGlyphs" >Direct Display Control</text>
<circle cx="1482" cy="73" r="10" fill="url(#ddc)"/>
<path d="M1476.5 71 L1487.5 71 L1482 77 Z" fill="#fff"/>
<rect x="1501.5" y="58.5" width="33.0" height="27.5" rx="3" fill="url(#btn2)" stroke="#ddd"/>
<rect x="1537.5" y="58.5" width="33.0" height="27.5" rx="3" fill="url(#btn2)" stroke="#ddd"/>
<rect x="1574" y="58.5" width="31" height="27.5" rx="3" fill="url(#btn2)" stroke="#ddd"/>
<circle cx="1518" cy="72" r="10" fill="url(#tcg)"/>
<circle cx="1518" cy="72" r="5.6" fill="none" stroke="#ddd" stroke-width="2.6" stroke-dasharray="2.2 2.2"/>
<circle cx="1518" cy="72" r="4" fill="none" stroke="#ddd" stroke-width="2"/>
<circle cx="1554" cy="72" r="10" fill="url(#tcg)"/>
<text x="1554" y="77.5" font-size="15" fill="#eee" text-anchor="middle" font-weight="bold" font-family="Liberation Sans" >?</text>
<circle cx="1587" cy="72" r="10" fill="url(#tcg)"/>
<path d="M1583.5 71.5 L1589 66.5 L1589 76.5 Z" fill="#eee"/>
<text x="23.5" y="140" font-size="34.5" fill="#eee" text-anchor="start" font-weight="normal" font-family="Liberation Sans" textLength="311" lengthAdjust="spacingAndGlyphs" stroke="#eee" stroke-width="0.4">Saturation Sweeps</text>
<text x="174" y="184" font-size="12.5" fill="#ddd" text-anchor="middle" font-weight="normal" font-family="Liberation Sans" textLength="76" lengthAdjust="spacingAndGlyphs" >DeltaE 2000</text>
<rect x="41.5" y="188.5" width="299.0" height="364.0" fill="#232323"/>
<line x1="81.5" y1="188.5" x2="81.5" y2="552.5" stroke="#8a8a8a" stroke-width="1"/>
<line x1="121.5" y1="188.5" x2="121.5" y2="552.5" stroke="#8a8a8a" stroke-width="1"/>
<line x1="161.5" y1="188.5" x2="161.5" y2="552.5" stroke="#8a8a8a" stroke-width="1"/>
<line x1="201.5" y1="188.5" x2="201.5" y2="552.5" stroke="#8a8a8a" stroke-width="1"/>
<line x1="241.5" y1="188.5" x2="241.5" y2="552.5" stroke="#8a8a8a" stroke-width="1"/>
<line x1="281.5" y1="188.5" x2="281.5" y2="552.5" stroke="#8a8a8a" stroke-width="1"/>
<line x1="321.5" y1="188.5" x2="321.5" y2="552.5" stroke="#8a8a8a" stroke-width="1"/>
<rect x="41.5" y="188.5" width="299.0" height="364.0" fill="none" stroke="#9a9a9a" stroke-width="1"/>
<line x1="35" y1="188.5" x2="41.5" y2="188.5" stroke="#ccc" stroke-width="2"/>
<line x1="35" y1="249.5" x2="41.5" y2="249.5" stroke="#ccc" stroke-width="2"/>
<line x1="35" y1="310.5" x2="41.5" y2="310.5" stroke="#ccc" stroke-width="2"/>
<line x1="35" y1="370.5" x2="41.5" y2="370.5" stroke="#ccc" stroke-width="2"/>
<line x1="35" y1="431.5" x2="41.5" y2="431.5" stroke="#ccc" stroke-width="2"/>
<line x1="35" y1="492.5" x2="41.5" y2="492.5" stroke="#ccc" stroke-width="2"/>
<line x1="35" y1="552.5" x2="41.5" y2="552.5" stroke="#ccc" stroke-width="2"/>
<line x1="41.5" y1="552.5" x2="41.5" y2="558.5" stroke="#ccc" stroke-width="2"/>
<text x="41.5" y="572" font-size="13" fill="#ddd" text-anchor="middle" font-weight="normal" font-family="Liberation Sans" >0</text>
<line x1="81.5" y1="552.5" x2="81.5" y2="558.5" stroke="#ccc" stroke-width="2"/>
<text x="81.5" y="572" font-size="13" fill="#ddd" text-anchor="middle" font-weight="normal" font-family="Liberation Sans" >2</text>
<line x1="121.5" y1="552.5" x2="121.5" y2="558.5" stroke="#ccc" stroke-width="2"/>
<text x="121.5" y="572" font-size="13" fill="#ddd" text-anchor="middle" font-weight="normal" font-family="Liberation Sans" >4</text>
<line x1="161.5" y1="552.5" x2="161.5" y2="558.5" stroke="#ccc" stroke-width="2"/>
<text x="161.5" y="572" font-size="13" fill="#ddd" text-anchor="middle" font-weight="normal" font-family="Liberation Sans" >6</text>
<line x1="201.5" y1="552.5" x2="201.5" y2="558.5" stroke="#ccc" stroke-width="2"/>
<text x="201.5" y="572" font-size="13" fill="#ddd" text-anchor="middle" font-weight="normal" font-family="Liberation Sans" >8</text>
<line x1="241.5" y1="552.5" x2="241.5" y2="558.5" stroke="#ccc" stroke-width="2"/>
<text x="241.5" y="572" font-size="13" fill="#ddd" text-anchor="middle" font-weight="normal" font-family="Liberation Sans" >10</text>
<line x1="281.5" y1="552.5" x2="281.5" y2="558.5" stroke="#ccc" stroke-width="2"/>
<text x="281.5" y="572" font-size="13" fill="#ddd" text-anchor="middle" font-weight="normal" font-family="Liberation Sans" >12</text>
<line x1="321.5" y1="552.5" x2="321.5" y2="558.5" stroke="#ccc" stroke-width="2"/>
<text x="321.5" y="572" font-size="13" fill="#ddd" text-anchor="middle" font-weight="normal" font-family="Liberation Sans" >14</text>
<text x="41" y="224.33333333333334" font-size="13.5" fill="#ddd" text-anchor="end" font-weight="normal" font-family="Liberation Sans" >100%</text>
<text x="41" y="285.0" font-size="13.5" fill="#ddd" text-anchor="end" font-weight="normal" font-family="Liberation Sans" >80%</text>
<text x="41" y="345.66666666666663" font-size="13.5" fill="#ddd" text-anchor="end" font-weight="normal" font-family="Liberation Sans" >60%</text>
<text x="41" y="406.3333333333333" font-size="13.5" fill="#ddd" text-anchor="end" font-weight="normal" font-family="Liberation Sans" >40%</text>
<text x="41" y="466.99999999999994" font-size="13.5" fill="#ddd" text-anchor="end" font-weight="normal" font-family="Liberation Sans" >20%</text>
<text x="41" y="527.5" font-size="13" fill="#ddd" text-anchor="end" font-weight="normal" font-family="Liberation Sans" >100</text>
<rect x="42.0" y="194.5" width="76.0" height="6" fill="url(#deb1)" stroke="#000" stroke-width="1"/>
<rect x="42.0" y="202.5" width="101.0" height="6" fill="url(#deb2)" stroke="#000" stroke-width="1"/>
<rect x="42.0" y="209.5" width="98.0" height="6" fill="url(#deb3)" stroke="#000" stroke-width="1"/>
<rect x="42.0" y="216.5" width="101.0" height="6" fill="url(#deb4)" stroke="#000" stroke-width="1"/>
<rect x="42.0" y="223.5" width="66.0" height="6" fill="url(#deb5)" stroke="#000" stroke-width="1"/>
<rect x="42.0" y="230.5" width="33.0" height="6" fill="url(#deb6)" stroke="#000" stroke-width="1"/>
<rect x="42.0" y="255.5" width="69.6" height="6" fill="url(#deb7)" stroke="#000" stroke-width="1"/>
<rect x="42.0" y="262.5" width="96.0" height="6" fill="url(#deb8)" stroke="#000" stroke-width="1"/>
<rect x="42.0" y="269.5" width="82.8" height="6" fill="url(#deb9)" stroke="#000" stroke-width="1"/>
<rect x="42.0" y="277.5" width="91.0" height="6" fill="url(#deb10)" stroke="#000" stroke-width="1"/>
<rect x="42.0" y="284.5" width="62.8" height="6" fill="url(#deb11)" stroke="#000" stroke-width="1"/>
<rect x="42.0" y="291.5" width="46.6" height="6" fill="url(#deb12)" stroke="#000" stroke-width="1"/>
<rect x="42.0" y="316.5" width="66.0" height="6" fill="url(#deb13)" stroke="#000" stroke-width="1"/>
<rect x="42.0" y="323.5" width="89.0" height="6" fill="url(#deb14)" stroke="#000" stroke-width="1"/>
<rect x="42.0" y="330.5" width="54.8" height="6" fill="url(#deb15)" stroke="#000" stroke-width="1"/>
<rect x="42.0" y="337.5" width="82.6" height="6" fill="url(#deb16)" stroke="#000" stroke-width="1"/>
<rect x="42.0" y="344.5" width="62.6" height="6" fill="url(#deb17)" stroke="#000" stroke-width="1"/>
<rect x="42.0" y="351.5" width="33.6" height="6" fill="url(#deb18)" stroke="#000" stroke-width="1"/>
<rect x="42.0" y="376.5" width="57.8" height="6" fill="url(#deb19)" stroke="#000" stroke-width="1"/>
<rect x="42.0" y="384.5" width="80.0" height="6" fill="url(#deb20)" stroke="#000" stroke-width="1"/>
<rect x="42.0" y="391.5" width="35.4" height="6" fill="url(#deb21)" stroke="#000" stroke-width="1"/>
<rect x="42.0" y="398.5" width="71.6" height="6" fill="url(#deb22)" stroke="#000" stroke-width="1"/>
<rect x="42.0" y="405.5" width="44.8" height="6" fill="url(#deb23)" stroke="#000" stroke-width="1"/>
<rect x="42.0" y="412.5" width="32.6" height="6" fill="url(#deb24)" stroke="#000" stroke-width="1"/>
<rect x="42.0" y="437.5" width="52.2" height="6" fill="url(#deb25)" stroke="#000" stroke-width="1"/>
<rect x="42.0" y="444.5" width="61.6" height="6" fill="url(#deb26)" stroke="#000" stroke-width="1"/>
<rect x="42.0" y="451.5" width="14.4" height="6" fill="url(#deb27)" stroke="#000" stroke-width="1"/>
<rect x="42.0" y="459.5" width="40.6" height="6" fill="url(#deb28)" stroke="#000" stroke-width="1"/>
<rect x="42.0" y="466.5" width="40.6" height="6" fill="url(#deb29)" stroke="#000" stroke-width="1"/>
<rect x="42.0" y="473.5" width="40.6" height="6" fill="url(#deb30)" stroke="#000" stroke-width="1"/>
<rect x="42.5" y="541.5" width="30" height="5.5" fill="url(#debw)" stroke="#000" stroke-width="2"/>
<text x="448.5" y="124" font-size="13" fill="#ddd" text-anchor="middle" font-weight="normal" font-family="Liberation Sans" >DeltaL</text>
<rect x="391.5" y="130" width="139.0" height="278" fill="#232323"/>
<line x1="391.5" y1="130.0" x2="530.5" y2="130.0" stroke="#8a8a8a"/>
<line x1="385.5" y1="130.0" x2="391.5" y2="130.0" stroke="#ccc" stroke-width="2"/>
<text x="386.0" y="135.0" font-size="14" fill="#ddd" text-anchor="end" font-weight="normal" font-family="Liberation Sans" >15</text>
<line x1="391.5" y1="176.3" x2="530.5" y2="176.3" stroke="#8a8a8a"/>
<line x1="385.5" y1="176.3" x2="391.5" y2="176.3" stroke="#ccc" stroke-width="2"/>
<text x="386.0" y="181.33333333333334" font-size="14" fill="#ddd" text-anchor="end" font-weight="normal" font-family="Liberation Sans" >10</text>
<line x1="391.5" y1="222.7" x2="530.5" y2="222.7" stroke="#8a8a8a"/>
<line x1="385.5" y1="222.7" x2="391.5" y2="222.7" stroke="#ccc" stroke-width="2"/>
<text x="386.0" y="227.66666666666669" font-size="14" fill="#ddd" text-anchor="end" font-weight="normal" font-family="Liberation Sans" >5</text>
<line x1="391.5" y1="269.0" x2="530.5" y2="269.0" stroke="#8a8a8a"/>
<line x1="385.5" y1="269.0" x2="391.5" y2="269.0" stroke="#ccc" stroke-width="2"/>
<text x="386.0" y="274.0" font-size="14" fill="#ddd" text-anchor="end" font-weight="normal" font-family="Liberation Sans" >0</text>
<line x1="391.5" y1="315.3" x2="530.5" y2="315.3" stroke="#8a8a8a"/>
<line x1="385.5" y1="315.3" x2="391.5" y2="315.3" stroke="#ccc" stroke-width="2"/>
<text x="386.0" y="320.33333333333337" font-size="14" fill="#ddd" text-anchor="end" font-weight="normal" font-family="Liberation Sans" >-5</text>
<line x1="391.5" y1="361.7" x2="530.5" y2="361.7" stroke="#8a8a8a"/>
<line x1="385.5" y1="361.7" x2="391.5" y2="361.7" stroke="#ccc" stroke-width="2"/>
<text x="386.0" y="366.6666666666667" font-size="14" fill="#ddd" text-anchor="end" font-weight="normal" font-family="Liberation Sans" >-10</text>
<line x1="391.5" y1="408.0" x2="530.5" y2="408.0" stroke="#8a8a8a"/>
<line x1="385.5" y1="408.0" x2="391.5" y2="408.0" stroke="#ccc" stroke-width="2"/>
<text x="386.0" y="413.0" font-size="14" fill="#ddd" text-anchor="end" font-weight="normal" font-family="Liberation Sans" >-15</text>
<rect x="391.5" y="130" width="139.0" height="278" fill="none" stroke="#9a9a9a"/>
<line x1="391.5" y1="408" x2="391.5" y2="413" stroke="#9a9a9a"/>
<line x1="530.5" y1="408" x2="530.5" y2="413" stroke="#9a9a9a"/>
<text x="461.0" y="422" font-size="13" fill="#ddd" text-anchor="middle" font-weight="normal" font-family="Liberation Sans" >100%</text>
<rect x="406.0" y="265.8" width="110" height="3.2" fill="url(#dyl)" stroke="#000" stroke-width="1.2"/>
<text x="637.5" y="124" font-size="13" fill="#ddd" text-anchor="middle" font-weight="normal" font-family="Liberation Sans" >DeltaC</text>
<rect x="580.5" y="130" width="139.0" height="278" fill="#232323"/>
<line x1="580.5" y1="130.0" x2="719.5" y2="130.0" stroke="#8a8a8a"/>
<line x1="574.5" y1="130.0" x2="580.5" y2="130.0" stroke="#ccc" stroke-width="2"/>
<text x="575.0" y="135.0" font-size="14" fill="#ddd" text-anchor="end" font-weight="normal" font-family="Liberation Sans" >15</text>
<line x1="580.5" y1="176.3" x2="719.5" y2="176.3" stroke="#8a8a8a"/>
<line x1="574.5" y1="176.3" x2="580.5" y2="176.3" stroke="#ccc" stroke-width="2"/>
<text x="575.0" y="181.33333333333334" font-size="14" fill="#ddd" text-anchor="end" font-weight="normal" font-family="Liberation Sans" >10</text>
<line x1="580.5" y1="222.7" x2="719.5" y2="222.7" stroke="#8a8a8a"/>
<line x1="574.5" y1="222.7" x2="580.5" y2="222.7" stroke="#ccc" stroke-width="2"/>
<text x="575.0" y="227.66666666666669" font-size="14" fill="#ddd" text-anchor="end" font-weight="normal" font-family="Liberation Sans" >5</text>
<line x1="580.5" y1="269.0" x2="719.5" y2="269.0" stroke="#8a8a8a"/>
<line x1="574.5" y1="269.0" x2="580.5" y2="269.0" stroke="#ccc" stroke-width="2"/>
<text x="575.0" y="274.0" font-size="14" fill="#ddd" text-anchor="end" font-weight="normal" font-family="Liberation Sans" >0</text>
<line x1="580.5" y1="315.3" x2="719.5" y2="315.3" stroke="#8a8a8a"/>
<line x1="574.5" y1="315.3" x2="580.5" y2="315.3" stroke="#ccc" stroke-width="2"/>
<text x="575.0" y="320.33333333333337" font-size="14" fill="#ddd" text-anchor="end" font-weight="normal" font-family="Liberation Sans" >-5</text>
<line x1="580.5" y1="361.7" x2="719.5" y2="361.7" stroke="#8a8a8a"/>
<line x1="574.5" y1="361.7" x2="580.5" y2="361.7" stroke="#ccc" stroke-width="2"/>
<text x="575.0" y="366.6666666666667" font-size="14" fill="#ddd" text-anchor="end" font-weight="normal" font-family="Liberation Sans" >-10</text>
<line x1="580.5" y1="408.0" x2="719.5" y2="408.0" stroke="#8a8a8a"/>
<line x1="574.5" y1="408.0" x2="580.5" y2="408.0" stroke="#ccc" stroke-width="2"/>
<text x="575.0" y="413.0" font-size="14" fill="#ddd" text-anchor="end" font-weight="normal" font-family="Liberation Sans" >-15</text>
<rect x="580.5" y="130" width="139.0" height="278" fill="none" stroke="#9a9a9a"/>
<line x1="580.5" y1="408" x2="580.5" y2="413" stroke="#9a9a9a"/>
<line x1="719.5" y1="408" x2="719.5" y2="413" stroke="#9a9a9a"/>
<text x="650.0" y="422" font-size="13" fill="#ddd" text-anchor="middle" font-weight="normal" font-family="Liberation Sans" >100%</text>
<rect x="595.0" y="215.3" width="110" height="53.7" fill="url(#dyc)" stroke="#000" stroke-width="1.2"/>
<text x="826.5" y="124" font-size="13" fill="#ddd" text-anchor="middle" font-weight="normal" font-family="Liberation Sans" >DeltaH</text>
<rect x="769.5" y="130" width="139.0" height="278" fill="#232323"/>
<line x1="769.5" y1="130.0" x2="908.5" y2="130.0" stroke="#8a8a8a"/>
<line x1="763.5" y1="130.0" x2="769.5" y2="130.0" stroke="#ccc" stroke-width="2"/>
<text x="764.0" y="135.0" font-size="14" fill="#ddd" text-anchor="end" font-weight="normal" font-family="Liberation Sans" >15</text>
<line x1="769.5" y1="176.3" x2="908.5" y2="176.3" stroke="#8a8a8a"/>
<line x1="763.5" y1="176.3" x2="769.5" y2="176.3" stroke="#ccc" stroke-width="2"/>
<text x="764.0" y="181.33333333333334" font-size="14" fill="#ddd" text-anchor="end" font-weight="normal" font-family="Liberation Sans" >10</text>
<line x1="769.5" y1="222.7" x2="908.5" y2="222.7" stroke="#8a8a8a"/>
<line x1="763.5" y1="222.7" x2="769.5" y2="222.7" stroke="#ccc" stroke-width="2"/>
<text x="764.0" y="227.66666666666669" font-size="14" fill="#ddd" text-anchor="end" font-weight="normal" font-family="Liberation Sans" >5</text>
<line x1="769.5" y1="269.0" x2="908.5" y2="269.0" stroke="#8a8a8a"/>
<line x1="763.5" y1="269.0" x2="769.5" y2="269.0" stroke="#ccc" stroke-width="2"/>
<text x="764.0" y="274.0" font-size="14" fill="#ddd" text-anchor="end" font-weight="normal" font-family="Liberation Sans" >0</text>
<line x1="769.5" y1="315.3" x2="908.5" y2="315.3" stroke="#8a8a8a"/>
<line x1="763.5" y1="315.3" x2="769.5" y2="315.3" stroke="#ccc" stroke-width="2"/>
<text x="764.0" y="320.33333333333337" font-size="14" fill="#ddd" text-anchor="end" font-weight="normal" font-family="Liberation Sans" >-5</text>
<line x1="769.5" y1="361.7" x2="908.5" y2="361.7" stroke="#8a8a8a"/>
<line x1="763.5" y1="361.7" x2="769.5" y2="361.7" stroke="#ccc" stroke-width="2"/>
<text x="764.0" y="366.6666666666667" font-size="14" fill="#ddd" text-anchor="end" font-weight="normal" font-family="Liberation Sans" >-10</text>
<line x1="769.5" y1="408.0" x2="908.5" y2="408.0" stroke="#8a8a8a"/>
<line x1="763.5" y1="408.0" x2="769.5" y2="408.0" stroke="#ccc" stroke-width="2"/>
<text x="764.0" y="413.0" font-size="14" fill="#ddd" text-anchor="end" font-weight="normal" font-family="Liberation Sans" >-15</text>
<rect x="769.5" y="130" width="139.0" height="278" fill="none" stroke="#9a9a9a"/>
<line x1="769.5" y1="408" x2="769.5" y2="413" stroke="#9a9a9a"/>
<line x1="908.5" y1="408" x2="908.5" y2="413" stroke="#9a9a9a"/>
<text x="839.0" y="422" font-size="13" fill="#ddd" text-anchor="middle" font-weight="normal" font-family="Liberation Sans" >100%</text>
<rect x="784.0" y="252.5" width="110" height="16.5" fill="url(#dyh)" stroke="#000" stroke-width="1.2"/>
<rect x="360" y="437" width="567" height="143" fill="#000"/>
<text transform="translate(372.5,484) rotate(-90)" font-size="11.5" fill="#eee" font-family="Liberation Sans" stroke="#eee" stroke-width="0.35" textLength="30.5" lengthAdjust="spacingAndGlyphs">Actual</text>
<text transform="translate(372.5,549) rotate(-90)" font-size="11.5" fill="#eee" font-family="Liberation Sans" stroke="#eee" stroke-width="0.35" textLength="30" lengthAdjust="spacingAndGlyphs">Target</text>
<rect x="380.0" y="443" width="95" height="58" fill="#c0c3a4"/>
<rect x="380.0" y="501" width="95" height="59" fill="#c0c0a4"/>
<rect x="380.5" y="443.5" width="94" height="116" fill="none" stroke="#fff" stroke-width="1"/>
<text x="427.5" y="573" font-size="11.5" fill="#fff" text-anchor="middle" font-weight="normal" font-family="Liberation Sans" >20%</text>
<rect x="490.8" y="443" width="95" height="58" fill="#c1c486"/>
<rect x="490.8" y="501" width="95" height="59" fill="#c1c188"/>
<rect x="491.3" y="443.5" width="94" height="116" fill="none" stroke="#fff" stroke-width="1"/>
<text x="538.3" y="573" font-size="11.5" fill="#fff" text-anchor="middle" font-weight="normal" font-family="Liberation Sans" >40%</text>
<rect x="601.6" y="443" width="95" height="58" fill="#c0c268"/>
<rect x="601.6" y="501" width="95" height="59" fill="#c0be6c"/>
<rect x="602.1" y="443.5" width="94" height="116" fill="none" stroke="#fff" stroke-width="1"/>
<text x="649.1" y="573" font-size="11.5" fill="#fff" text-anchor="middle" font-weight="normal" font-family="Liberation Sans" >60%</text>
<rect x="712.4" y="443" width="95" height="58" fill="#bec440"/>
<rect x="712.4" y="501" width="95" height="59" fill="#c0be48"/>
<rect x="712.9" y="443.5" width="94" height="116" fill="none" stroke="#fff" stroke-width="1"/>
<text x="759.9" y="573" font-size="11.5" fill="#fff" text-anchor="middle" font-weight="normal" font-family="Liberation Sans" >80%</text>
<rect x="823.2" y="443" width="95" height="58" fill="#c0c000"/>
<rect x="823.2" y="501" width="95" height="59" fill="#c4bc20"/>
<rect x="823.7" y="443.5" width="94" height="116" fill="none" stroke="#fff" stroke-width="1"/>
<text x="870.7" y="573" font-size="11.5" fill="#fff" text-anchor="middle" font-weight="normal" font-family="Liberation Sans" >100%</text>
<rect x="933" y="101" width="667" height="492" fill="#1e1e1e"/>
<rect x="940" y="107" width="652.5" height="479" fill="#333"/>
<text x="1254" y="123" font-size="12.5" fill="#ddd" text-anchor="middle" font-weight="normal" font-family="Liberation Sans" textLength="75" lengthAdjust="spacingAndGlyphs" >CIE 1931 xy</text>
<rect x="968.5" y="127.5" width="621.0" height="434.0" fill="#232323" stroke="#9a9a9a"/>
<line x1="967.6" y1="561.5" x2="967.6" y2="566.5" stroke="#ccc"/>
<text x="967.6" y="580" font-size="15.5" fill="#ddd" text-anchor="middle" font-weight="normal" font-family="Liberation Serif" >0</text>
<line x1="1041.53" y1="561.5" x2="1041.53" y2="566.5" stroke="#ccc"/>
<text x="1041.53" y="580" font-size="15.5" fill="#ddd" text-anchor="middle" font-weight="normal" font-family="Liberation Serif" >0.1</text>
<line x1="1115.46" y1="561.5" x2="1115.46" y2="566.5" stroke="#ccc"/>
<text x="1115.46" y="580" font-size="15.5" fill="#ddd" text-anchor="middle" font-weight="normal" font-family="Liberation Serif" >0.2</text>
<line x1="1189.3899999999999" y1="561.5" x2="1189.3899999999999" y2="566.5" stroke="#ccc"/>
<text x="1189.3899999999999" y="580" font-size="15.5" fill="#ddd" text-anchor="middle" font-weight="normal" font-family="Liberation Serif" >0.3</text>
<line x1="1263.32" y1="561.5" x2="1263.32" y2="566.5" stroke="#ccc"/>
<text x="1263.32" y="580" font-size="15.5" fill="#ddd" text-anchor="middle" font-weight="normal" font-family="Liberation Serif" >0.4</text>
<line x1="1337.25" y1="561.5" x2="1337.25" y2="566.5" stroke="#ccc"/>
<text x="1337.25" y="580" font-size="15.5" fill="#ddd" text-anchor="middle" font-weight="normal" font-family="Liberation Serif" >0.5</text>
<line x1="1411.1799999999998" y1="561.5" x2="1411.1799999999998" y2="566.5" stroke="#ccc"/>
<text x="1411.1799999999998" y="580" font-size="15.5" fill="#ddd" text-anchor="middle" font-weight="normal" font-family="Liberation Serif" >0.6</text>
<line x1="1485.1100000000001" y1="561.5" x2="1485.1100000000001" y2="566.5" stroke="#ccc"/>
<text x="1485.1100000000001" y="580" font-size="15.5" fill="#ddd" text-anchor="middle" font-weight="normal" font-family="Liberation Serif" >0.7</text>
<line x1="1559.04" y1="561.5" x2="1559.04" y2="566.5" stroke="#ccc"/>
<text x="1559.04" y="580" font-size="15.5" fill="#ddd" text-anchor="middle" font-weight="normal" font-family="Liberation Serif" >0.8</text>
<line x1="962.5" y1="561.5" x2="968.5" y2="561.5" stroke="#ccc" stroke-width="2"/>
<text x="962.5" y="566.5" font-size="15.5" fill="#ddd" text-anchor="end" font-weight="normal" font-family="Liberation Serif" >0</text>
<line x1="962.5" y1="509.8" x2="968.5" y2="509.8" stroke="#ccc" stroke-width="2"/>
<text x="962.5" y="514.8" font-size="15.5" fill="#ddd" text-anchor="end" font-weight="normal" font-family="Liberation Serif" >0.1</text>
<line x1="962.5" y1="458.1" x2="968.5" y2="458.1" stroke="#ccc" stroke-width="2"/>
<text x="962.5" y="463.1" font-size="15.5" fill="#ddd" text-anchor="end" font-weight="normal" font-family="Liberation Serif" >0.2</text>
<line x1="962.5" y1="406.4" x2="968.5" y2="406.4" stroke="#ccc" stroke-width="2"/>
<text x="962.5" y="411.4" font-size="15.5" fill="#ddd" text-anchor="end" font-weight="normal" font-family="Liberation Serif" >0.3</text>
<line x1="962.5" y1="354.7" x2="968.5" y2="354.7" stroke="#ccc" stroke-width="2"/>
<text x="962.5" y="359.7" font-size="15.5" fill="#ddd" text-anchor="end" font-weight="normal" font-family="Liberation Serif" >0.4</text>
<line x1="962.5" y1="303.0" x2="968.5" y2="303.0" stroke="#ccc" stroke-width="2"/>
<text x="962.5" y="308.0" font-size="15.5" fill="#ddd" text-anchor="end" font-weight="normal" font-family="Liberation Serif" >0.5</text>
<line x1="962.5" y1="251.3" x2="968.5" y2="251.3" stroke="#ccc" stroke-width="2"/>
<text x="962.5" y="256.3" font-size="15.5" fill="#ddd" text-anchor="end" font-weight="normal" font-family="Liberation Serif" >0.6</text>
<line x1="962.5" y1="199.6" x2="968.5" y2="199.6" stroke="#ccc" stroke-width="2"/>
<text x="962.5" y="204.60000000000002" font-size="15.5" fill="#ddd" text-anchor="end" font-weight="normal" font-family="Liberation Serif" >0.7</text>
<line x1="962.5" y1="147.9" x2="968.5" y2="147.9" stroke="#ccc" stroke-width="2"/>
<text x="962.5" y="152.89999999999998" font-size="15.5" fill="#ddd" text-anchor="end" font-weight="normal" font-family="Liberation Serif" >0.8</text>
<g clip-path="url(#horse)"><path d="M1198.8 391.4 L1899 397 L1898 368Z" fill="url(#o145)"/><path d="M1198.8 391.4 L1899 379 L1898 349Z" fill="url(#o146)"/><path d="M1198.8 391.4 L1898 360 L1896 331Z" fill="url(#o147)"/><path d="M1198.8 391.4 L1897 342 L1894 313Z" fill="url(#o148)"/><path d="M1198.8 391.4 L1895 324 L1892 295Z" fill="url(#o149)"/><path d="M1198.8 391.4 L1893 305 L1889 276Z" fill="url(#o150)"/><path d="M1198.8 391.4 L1891 287 L1886 258Z" fill="url(#o151)"/><path d="M1198.8 391.4 L1888 269 L1882 240Z" fill="url(#o152)"/><path d="M1198.8 391.4 L1885 251 L1878 223Z" fill="url(#o153)"/><path d="M1198.8 391.4 L1881 233 L1873 205Z" fill="url(#o154)"/><path d="M1198.8 391.4 L1876 216 L1868 187Z" fill="url(#o155)"/><path d="M1198.8 391.4 L1871 198 L1863 170Z" fill="url(#o156)"/><path d="M1198.8 391.4 L1866 180 L1857 153Z" fill="url(#o157)"/><path d="M1198.8 391.4 L1860 163 L1850 135Z" fill="url(#o158)"/><path d="M1198.8 391.4 L1854 146 L1843 118Z" fill="url(#o159)"/><path d="M1198.8 391.4 L1848 129 L1836 102Z" fill="url(#o160)"/><path d="M1198.8 391.4 L1840 112 L1828 85Z" fill="url(#o161)"/><path d="M1198.8 391.4 L1833 95 L1820 69Z" fill="url(#o162)"/><path d="M1198.8 391.4 L1825 79 L1811 53Z" fill="url(#o163)"/><path d="M1198.8 391.4 L1817 62 L1802 37Z" fill="url(#o164)"/><path d="M1198.8 391.4 L1808 46 L1793 21Z" fill="url(#o165)"/><path d="M1198.8 391.4 L1798 30 L1783 6Z" fill="url(#o166)"/><path d="M1198.8 391.4 L1789 15 L1773 -10Z" fill="url(#o167)"/><path d="M1198.8 391.4 L1779 -1 L1762 -24Z" fill="url(#o168)"/><path d="M1198.8 391.4 L1768 -16 L1751 -39Z" fill="url(#o169)"/><path d="M1198.8 391.4 L1757 -30 L1739 -53Z" fill="url(#o170)"/><path d="M1198.8 391.4 L1746 -45 L1727 -67Z" fill="url(#o171)"/><path d="M1198.8 391.4 L1735 -59 L1715 -81Z" fill="url(#o172)"/><path d="M1198.8 391.4 L1723 -73 L1703 -94Z" fill="url(#o173)"/><path d="M1198.8 391.4 L1710 -86 L1690 -107Z" fill="url(#o174)"/><path d="M1198.8 391.4 L1698 -100 L1677 -120Z" fill="url(#o175)"/><path d="M1198.8 391.4 L1685 -113 L1663 -132Z" fill="url(#o176)"/><path d="M1198.8 391.4 L1671 -125 L1649 -144Z" fill="url(#o177)"/><path d="M1198.8 391.4 L1658 -137 L1635 -156Z" fill="url(#o178)"/><path d="M1198.8 391.4 L1644 -149 L1621 -167Z" fill="url(#o179)"/><path d="M1198.8 391.4 L1629 -161 L1606 -178Z" fill="url(#o180)"/><path d="M1198.8 391.4 L1615 -172 L1591 -189Z" fill="url(#o181)"/><path d="M1198.8 391.4 L1600 -182 L1575 -199Z" fill="url(#o182)"/><path d="M1198.8 391.4 L1585 -193 L1560 -208Z" fill="url(#o183)"/><path d="M1198.8 391.4 L1569 -203 L1544 -218Z" fill="url(#o184)"/><path d="M1198.8 391.4 L1554 -212 L1528 -226Z" fill="url(#o185)"/><path d="M1198.8 391.4 L1538 -221 L1512 -235Z" fill="url(#o186)"/><path d="M1198.8 391.4 L1521 -230 L1495 -243Z" fill="url(#o187)"/><path d="M1198.8 391.4 L1505 -238 L1478 -250Z" fill="url(#o188)"/><path d="M1198.8 391.4 L1489 -246 L1462 -257Z" fill="url(#o189)"/><path d="M1198.8 391.4 L1472 -253 L1444 -264Z" fill="url(#o190)"/><path d="M1198.8 391.4 L1455 -260 L1427 -270Z" fill="url(#o191)"/><path d="M1198.8 391.4 L1438 -267 L1410 -276Z" fill="url(#o192)"/><path d="M1198.8 391.4 L1420 -273 L1392 -281Z" fill="url(#o193)"/><path d="M1198.8 391.4 L1403 -278 L1375 -286Z" fill="url(#o194)"/><path d="M1198.8 391.4 L1385 -283 L1357 -291Z" fill="url(#o195)"/><path d="M1198.8 391.4 L1368 -288 L1339 -294Z" fill="url(#o196)"/><path d="M1198.8 391.4 L1350 -292 L1321 -298Z" fill="url(#o197)"/><path d="M1198.8 391.4 L1332 -296 L1303 -301Z" fill="url(#o198)"/><path d="M1198.8 391.4 L1314 -299 L1285 -303Z" fill="url(#o199)"/><path d="M1198.8 391.4 L1296 -302 L1266 -305Z" fill="url(#o200)"/><path d="M1198.8 391.4 L1277 -304 L1248 -307Z" fill="url(#o201)"/><path d="M1198.8 391.4 L1259 -306 L1230 -308Z" fill="url(#o202)"/><path d="M1198.8 391.4 L1241 -307 L1212 -308Z" fill="url(#o203)"/><path d="M1198.8 391.4 L1223 -308 L1193 -309Z" fill="url(#o204)"/><path d="M1198.8 391.4 L1204 -309 L1175 -308Z" fill="url(#o205)"/><path d="M1198.8 391.4 L1186 -308 L1157 -307Z" fill="url(#o206)"/><path d="M1198.8 391.4 L1168 -308 L1138 -306Z" fill="url(#o207)"/><path d="M1198.8 391.4 L1149 -307 L1120 -304Z" fill="url(#o208)"/><path d="M1198.8 391.4 L1131 -305 L1102 -302Z" fill="url(#o209)"/><path d="M1198.8 391.4 L1113 -303 L1084 -299Z" fill="url(#o210)"/><path d="M1198.8 391.4 L1095 -301 L1066 -296Z" fill="url(#o211)"/><path d="M1198.8 391.4 L1077 -298 L1048 -292Z" fill="url(#o212)"/><path d="M1198.8 391.4 L1059 -294 L1030 -288Z" fill="url(#o213)"/><path d="M1198.8 391.4 L1041 -291 L1012 -283Z" fill="url(#o214)"/><path d="M1198.8 391.4 L1023 -286 L995 -278Z" fill="url(#o215)"/><path d="M1198.8 391.4 L1005 -281 L977 -273Z" fill="url(#o216)"/><path d="M1198.8 391.4 L988 -276 L960 -267Z" fill="url(#o217)"/><path d="M1198.8 391.4 L970 -270 L943 -260Z" fill="url(#o218)"/><path d="M1198.8 391.4 L953 -264 L926 -253Z" fill="url(#o219)"/><path d="M1198.8 391.4 L936 -257 L909 -246Z" fill="url(#o220)"/><path d="M1198.8 391.4 L919 -250 L892 -238Z" fill="url(#o221)"/><path d="M1198.8 391.4 L902 -243 L876 -230Z" fill="url(#o222)"/><path d="M1198.8 391.4 L886 -235 L860 -221Z" fill="url(#o223)"/><path d="M1198.8 391.4 L870 -226 L844 -212Z" fill="url(#o224)"/><path d="M1198.8 391.4 L854 -218 L828 -203Z" fill="url(#o225)"/><path d="M1198.8 391.4 L838 -208 L813 -193Z" fill="url(#o226)"/><path d="M1198.8 391.4 L822 -199 L798 -182Z" fill="url(#o227)"/><path d="M1198.8 391.4 L807 -189 L783 -172Z" fill="url(#o228)"/><path d="M1198.8 391.4 L792 -178 L768 -161Z" fill="url(#o229)"/><path d="M1198.8 391.4 L777 -167 L754 -149Z" fill="url(#o230)"/><path d="M1198.8 391.4 L763 -156 L740 -137Z" fill="url(#o231)"/><path d="M1198.8 391.4 L748 -144 L726 -125Z" fill="url(#o232)"/><path d="M1198.8 391.4 L734 -132 L713 -113Z" fill="url(#o233)"/><path d="M1198.8 391.4 L721 -120 L700 -100Z" fill="url(#o234)"/><path d="M1198.8 391.4 L708 -107 L687 -86Z" fill="url(#o235)"/><path d="M1198.8 391.4 L695 -94 L675 -73Z" fill="url(#o236)"/><path d="M1198.8 391.4 L682 -81 L663 -59Z" fill="url(#o237)"/><path d="M1198.8 391.4 L670 -67 L651 -45Z" fill="url(#o238)"/><path d="M1198.8 391.4 L658 -53 L640 -30Z" fill="url(#o239)"/><path d="M1198.8 391.4 L647 -39 L629 -16Z" fill="url(#o240)"/><path d="M1198.8 391.4 L636 -24 L619 -1Z" fill="url(#o241)"/><path d="M1198.8 391.4 L625 -10 L609 15Z" fill="url(#o242)"/><path d="M1198.8 391.4 L615 6 L599 30Z" fill="url(#o243)"/><path d="M1198.8 391.4 L605 21 L590 46Z" fill="url(#o244)"/><path d="M1198.8 391.4 L595 37 L581 62Z" fill="url(#o245)"/><path d="M1198.8 391.4 L586 53 L573 79Z" fill="url(#o246)"/><path d="M1198.8 391.4 L578 69 L565 95Z" fill="url(#o247)"/><path d="M1198.8 391.4 L569 85 L557 112Z" fill="url(#o248)"/><path d="M1198.8 391.4 L562 102 L550 129Z" fill="url(#o249)"/><path d="M1198.8 391.4 L554 118 L543 146Z" fill="url(#o250)"/><path d="M1198.8 391.4 L547 135 L537 163Z" fill="url(#o251)"/><path d="M1198.8 391.4 L541 153 L531 180Z" fill="url(#o252)"/><path d="M1198.8 391.4 L535 170 L526 198Z" fill="url(#o253)"/><path d="M1198.8 391.4 L529 187 L521 216Z" fill="url(#o254)"/><path d="M1198.8 391.4 L524 205 L517 233Z" fill="url(#o255)"/><path d="M1198.8 391.4 L519 223 L513 251Z" fill="url(#o256)"/><path d="M1198.8 391.4 L515 240 L510 269Z" fill="url(#o257)"/><path d="M1198.8 391.4 L512 258 L507 287Z" fill="url(#o258)"/><path d="M1198.8 391.4 L508 276 L504 305Z" fill="url(#o259)"/><path d="M1198.8 391.4 L506 295 L502 324Z" fill="url(#o260)"/><path d="M1198.8 391.4 L503 313 L501 342Z" fill="url(#o261)"/><path d="M1198.8 391.4 L501 331 L499 360Z" fill="url(#o262)"/><path d="M1198.8 391.4 L500 349 L499 379Z" fill="url(#o263)"/><path d="M1198.8 391.4 L499 368 L499 397Z" fill="url(#o264)"/><path d="M1198.8 391.4 L499 386 L499 415Z" fill="url(#o265)"/><path d="M1198.8 391.4 L499 404 L500 434Z" fill="url(#o266)"/><path d="M1198.8 391.4 L499 423 L501 452Z" fill="url(#o267)"/><path d="M1198.8 391.4 L501 441 L503 470Z" fill="url(#o268)"/><path d="M1198.8 391.4 L502 459 L506 488Z" fill="url(#o269)"/><path d="M1198.8 391.4 L504 477 L508 506Z" fill="url(#o270)"/><path d="M1198.8 391.4 L507 495 L512 524Z" fill="url(#o271)"/><path d="M1198.8 391.4 L510 514 L515 542Z" fill="url(#o272)"/><path d="M1198.8 391.4 L513 532 L519 560Z" fill="url(#o273)"/><path d="M1198.8 391.4 L517 549 L524 578Z" fill="url(#o274)"/><path d="M1198.8 391.4 L521 567 L529 595Z" fill="url(#o275)"/><path d="M1198.8 391.4 L526 585 L535 613Z" fill="url(#o276)"/><path d="M1198.8 391.4 L531 602 L541 630Z" fill="url(#o277)"/><path d="M1198.8 391.4 L537 620 L547 647Z" fill="url(#o278)"/><path d="M1198.8 391.4 L543 637 L554 664Z" fill="url(#o279)"/><path d="M1198.8 391.4 L550 654 L562 681Z" fill="url(#o280)"/><path d="M1198.8 391.4 L557 671 L569 698Z" fill="url(#o281)"/><path d="M1198.8 391.4 L565 688 L578 714Z" fill="url(#o282)"/><path d="M1198.8 391.4 L573 704 L586 730Z" fill="url(#o283)"/><path d="M1198.8 391.4 L581 721 L595 746Z" fill="url(#o284)"/><path d="M1198.8 391.4 L590 737 L605 762Z" fill="url(#o285)"/><path d="M1198.8 391.4 L599 752 L615 777Z" fill="url(#o286)"/><path d="M1198.8 391.4 L609 768 L625 792Z" fill="url(#o287)"/><path d="M1198.8 391.4 L619 783 L636 807Z" fill="url(#o288)"/><path d="M1198.8 391.4 L629 798 L647 822Z" fill="url(#o289)"/><path d="M1198.8 391.4 L640 813 L658 836Z" fill="url(#o290)"/><path d="M1198.8 391.4 L651 828 L670 850Z" fill="url(#o291)"/><path d="M1198.8 391.4 L663 842 L682 864Z" fill="url(#o292)"/><path d="M1198.8 391.4 L675 856 L695 877Z" fill="url(#o293)"/><path d="M1198.8 391.4 L687 869 L708 890Z" fill="url(#o294)"/><path d="M1198.8 391.4 L700 882 L721 903Z" fill="url(#o295)"/><path d="M1198.8 391.4 L713 895 L734 915Z" fill="url(#o296)"/><path d="M1198.8 391.4 L726 908 L748 927Z" fill="url(#o297)"/><path d="M1198.8 391.4 L740 920 L763 939Z" fill="url(#o298)"/><path d="M1198.8 391.4 L754 932 L777 950Z" fill="url(#o299)"/><path d="M1198.8 391.4 L768 943 L792 961Z" fill="url(#o300)"/><path d="M1198.8 391.4 L783 954 L807 971Z" fill="url(#o301)"/><path d="M1198.8 391.4 L798 965 L822 981Z" fill="url(#o302)"/><path d="M1198.8 391.4 L813 975 L838 991Z" fill="url(#o303)"/><path d="M1198.8 391.4 L828 985 L854 1000Z" fill="url(#o304)"/><path d="M1198.8 391.4 L844 995 L870 1009Z" fill="url(#o305)"/><path d="M1198.8 391.4 L860 1004 L886 1018Z" fill="url(#o306)"/><path d="M1198.8 391.4 L876 1013 L902 1026Z" fill="url(#o307)"/><path d="M1198.8 391.4 L892 1021 L919 1033Z" fill="url(#o308)"/><path d="M1198.8 391.4 L909 1029 L936 1040Z" fill="url(#o309)"/><path d="M1198.8 391.4 L926 1036 L953 1047Z" fill="url(#o310)"/><path d="M1198.8 391.4 L943 1043 L970 1053Z" fill="url(#o311)"/><path d="M1198.8 391.4 L960 1049 L988 1059Z" fill="url(#o312)"/><path d="M1198.8 391.4 L977 1055 L1005 1064Z" fill="url(#o313)"/><path d="M1198.8 391.4 L995 1061 L1023 1069Z" fill="url(#o314)"/><path d="M1198.8 391.4 L1012 1066 L1041 1073Z" fill="url(#o315)"/><path d="M1198.8 391.4 L1030 1071 L1059 1077Z" fill="url(#o316)"/><path d="M1198.8 391.4 L1048 1075 L1077 1081Z" fill="url(#o317)"/><path d="M1198.8 391.4 L1066 1079 L1095 1084Z" fill="url(#o318)"/><path d="M1198.8 391.4 L1084 1082 L1113 1086Z" fill="url(#o319)"/><path d="M1198.8 391.4 L1102 1085 L1131 1088Z" fill="url(#o320)"/><path d="M1198.8 391.4 L1120 1087 L1149 1090Z" fill="url(#o321)"/><path d="M1198.8 391.4 L1138 1089 L1168 1091Z" fill="url(#o322)"/><path d="M1198.8 391.4 L1157 1090 L1186 1091Z" fill="url(#o323)"/><path d="M1198.8 391.4 L1175 1091 L1204 1091Z" fill="url(#o324)"/><path d="M1198.8 391.4 L1193 1091 L1223 1091Z" fill="url(#o325)"/><path d="M1198.8 391.4 L1212 1091 L1241 1090Z" fill="url(#o326)"/><path d="M1198.8 391.4 L1230 1091 L1259 1089Z" fill="url(#o327)"/><path d="M1198.8 391.4 L1248 1090 L1277 1087Z" fill="url(#o328)"/><path d="M1198.8 391.4 L1266 1088 L1296 1085Z" fill="url(#o329)"/><path d="M1198.8 391.4 L1285 1086 L1314 1082Z" fill="url(#o330)"/><path d="M1198.8 391.4 L1303 1084 L1332 1079Z" fill="url(#o331)"/><path d="M1198.8 391.4 L1321 1081 L1350 1075Z" fill="url(#o332)"/><path d="M1198.8 391.4 L1339 1077 L1368 1071Z" fill="url(#o333)"/><path d="M1198.8 391.4 L1357 1073 L1385 1066Z" fill="url(#o334)"/><path d="M1198.8 391.4 L1375 1069 L1403 1061Z" fill="url(#o335)"/><path d="M1198.8 391.4 L1392 1064 L1420 1055Z" fill="url(#o336)"/><path d="M1198.8 391.4 L1410 1059 L1438 1049Z" fill="url(#o337)"/><path d="M1198.8 391.4 L1427 1053 L1455 1043Z" fill="url(#o338)"/><path d="M1198.8 391.4 L1444 1047 L1472 1036Z" fill="url(#o339)"/><path d="M1198.8 391.4 L1462 1040 L1489 1029Z" fill="url(#o340)"/><path d="M1198.8 391.4 L1478 1033 L1505 1021Z" fill="url(#o341)"/><path d="M1198.8 391.4 L1495 1026 L1521 1013Z" fill="url(#o342)"/><path d="M1198.8 391.4 L1512 1018 L1538 1004Z" fill="url(#o343)"/><path d="M1198.8 391.4 L1528 1009 L1554 995Z" fill="url(#o344)"/><path d="M1198.8 391.4 L1544 1000 L1569 985Z" fill="url(#o345)"/><path d="M1198.8 391.4 L1560 991 L1585 975Z" fill="url(#o346)"/><path d="M1198.8 391.4 L1575 981 L1600 965Z" fill="url(#o347)"/><path d="M1198.8 391.4 L1591 971 L1615 954Z" fill="url(#o348)"/><path d="M1198.8 391.4 L1606 961 L1629 943Z" fill="url(#o349)"/><path d="M1198.8 391.4 L1621 950 L1644 932Z" fill="url(#o350)"/><path d="M1198.8 391.4 L1635 939 L1658 920Z" fill="url(#o351)"/><path d="M1198.8 391.4 L1649 927 L1671 908Z" fill="url(#o352)"/><path d="M1198.8 391.4 L1663 915 L1685 895Z" fill="url(#o353)"/><path d="M1198.8 391.4 L1677 903 L1698 882Z" fill="url(#o354)"/><path d="M1198.8 391.4 L1690 890 L1710 869Z" fill="url(#o355)"/><path d="M1198.8 391.4 L1703 877 L1723 856Z" fill="url(#o356)"/><path d="M1198.8 391.4 L1715 864 L1735 842Z" fill="url(#o357)"/><path d="M1198.8 391.4 L1727 850 L1746 828Z" fill="url(#o358)"/><path d="M1198.8 391.4 L1739 836 L1757 813Z" fill="url(#o359)"/><path d="M1198.8 391.4 L1751 822 L1768 798Z" fill="url(#o360)"/><path d="M1198.8 391.4 L1762 807 L1779 783Z" fill="url(#o361)"/><path d="M1198.8 391.4 L1773 792 L1789 768Z" fill="url(#o362)"/><path d="M1198.8 391.4 L1783 777 L1798 752Z" fill="url(#o363)"/><path d="M1198.8 391.4 L1793 762 L1808 737Z" fill="url(#o364)"/><path d="M1198.8 391.4 L1802 746 L1817 721Z" fill="url(#o365)"/><path d="M1198.8 391.4 L1811 730 L1825 704Z" fill="url(#o366)"/><path d="M1198.8 391.4 L1820 714 L1833 688Z" fill="url(#o367)"/><path d="M1198.8 391.4 L1828 698 L1840 671Z" fill="url(#o368)"/><path d="M1198.8 391.4 L1836 681 L1848 654Z" fill="url(#o369)"/><path d="M1198.8 391.4 L1843 664 L1854 637Z" fill="url(#o370)"/><path d="M1198.8 391.4 L1850 647 L1860 620Z" fill="url(#o371)"/><path d="M1198.8 391.4 L1857 630 L1866 602Z" fill="url(#o372)"/><path d="M1198.8 391.4 L1863 613 L1871 585Z" fill="url(#o373)"/><path d="M1198.8 391.4 L1868 595 L1876 567Z" fill="url(#o374)"/><path d="M1198.8 391.4 L1873 578 L1881 549Z" fill="url(#o375)"/><path d="M1198.8 391.4 L1878 560 L1885 532Z" fill="url(#o376)"/><path d="M1198.8 391.4 L1882 542 L1888 514Z" fill="url(#o377)"/><path d="M1198.8 391.4 L1886 524 L1891 495Z" fill="url(#o378)"/><path d="M1198.8 391.4 L1889 506 L1893 477Z" fill="url(#o379)"/><path d="M1198.8 391.4 L1892 488 L1895 459Z" fill="url(#o380)"/><path d="M1198.8 391.4 L1894 470 L1897 441Z" fill="url(#o381)"/><path d="M1198.8 391.4 L1896 452 L1898 423Z" fill="url(#o382)"/><path d="M1198.8 391.4 L1898 434 L1899 404Z" fill="url(#o383)"/><path d="M1198.8 391.4 L1898 415 L1899 386Z" fill="url(#o384)"/></g>
<g clip-path="url(#tri)"><use href="#innerg"/><use href="#innerg"/></g>
<rect x="1182.5" y="244.1" width="13" height="13" fill="none" stroke="#fff" stroke-width="2"/>
<rect x="1184.8" y="274.1" width="13" height="13" fill="none" stroke="#fff" stroke-width="2"/>
<rect x="1186.4" y="301.9" width="13" height="13" fill="none" stroke="#fff" stroke-width="2"/>
<rect x="1188.7" y="327.7" width="13" height="13" fill="none" stroke="#fff" stroke-width="2"/>
<rect x="1190.3" y="355.8" width="13" height="13" fill="none" stroke="#fff" stroke-width="2"/>
<rect x="1271.2" y="292.9" width="13" height="13" fill="none" stroke="#fff" stroke-width="2"/>
<rect x="1254.0" y="312.5" width="13" height="13" fill="none" stroke="#fff" stroke-width="2"/>
<rect x="1239.9" y="329.3" width="13" height="13" fill="none" stroke="#fff" stroke-width="2"/>
<rect x="1223.9" y="345.7" width="13" height="13" fill="none" stroke="#fff" stroke-width="2"/>
<rect x="1208.3" y="365.6" width="13" height="13" fill="none" stroke="#fff" stroke-width="2"/>
<rect x="1239.9" y="383.2" width="13" height="13" fill="none" stroke="#fff" stroke-width="2"/>
<rect x="1289.2" y="383.2" width="13" height="13" fill="none" stroke="#fff" stroke-width="2"/>
<rect x="1333.3" y="383.2" width="13" height="13" fill="none" stroke="#fff" stroke-width="2"/>
<rect x="1380.2" y="383.2" width="13" height="13" fill="none" stroke="#fff" stroke-width="2"/>
<rect x="1434.5" y="383.2" width="13" height="13" fill="none" stroke="#fff" stroke-width="2"/>
<rect x="1127.0" y="384.4" width="13" height="13" fill="none" stroke="#fff" stroke-width="2"/>
<rect x="1140.3" y="384.4" width="13" height="13" fill="none" stroke="#fff" stroke-width="2"/>
<rect x="1153.9" y="384.4" width="13" height="13" fill="none" stroke="#fff" stroke-width="2"/>
<rect x="1166.8" y="384.4" width="13" height="13" fill="none" stroke="#fff" stroke-width="2"/>
<rect x="1180.5" y="384.4" width="13" height="13" fill="none" stroke="#fff" stroke-width="2"/>
<rect x="1167.6" y="411.7" width="13" height="13" fill="none" stroke="#fff" stroke-width="2"/>
<rect x="1144.2" y="439.5" width="13" height="13" fill="none" stroke="#fff" stroke-width="2"/>
<rect x="1121.1" y="465.3" width="13" height="13" fill="none" stroke="#fff" stroke-width="2"/>
<rect x="1097.3" y="492.2" width="13" height="13" fill="none" stroke="#fff" stroke-width="2"/>
<rect x="1071.5" y="521.9" width="13" height="13" fill="none" stroke="#fff" stroke-width="2"/>
<rect x="1194.2" y="402.7" width="13" height="13" fill="none" stroke="#fff" stroke-width="2"/>
<rect x="1195.4" y="421.5" width="13" height="13" fill="none" stroke="#fff" stroke-width="2"/>
<rect x="1195.4" y="436.7" width="13" height="13" fill="none" stroke="#fff" stroke-width="2"/>
<rect x="1196.9" y="454.3" width="13" height="13" fill="none" stroke="#fff" stroke-width="2"/>
<rect x="1197.7" y="474.2" width="13" height="13" fill="none" stroke="#fff" stroke-width="2"/>
<rect x="1193.0" y="384.4" width="13" height="13" fill="none" stroke="#000" stroke-width="2"/>
<ellipse cx="1156.4" cy="223.4" rx="4.4" ry="3.9000000000000004" fill="rgba(100,185,100,0.68)" stroke="#000" stroke-width="1.3"/>
<ellipse cx="1168.3" cy="255.7" rx="4.4" ry="3.9000000000000004" fill="rgba(112,181,109,0.68)" stroke="#000" stroke-width="1.3"/>
<ellipse cx="1174.3" cy="293.0" rx="4.4" ry="3.9000000000000004" fill="rgba(124,178,119,0.68)" stroke="#000" stroke-width="1.3"/>
<ellipse cx="1182.3" cy="326.3" rx="4.4" ry="3.9000000000000004" fill="rgba(137,174,128,0.68)" stroke="#000" stroke-width="1.3"/>
<ellipse cx="1191.2" cy="357.8" rx="4.4" ry="3.9000000000000004" fill="rgba(149,170,138,0.68)" stroke="#000" stroke-width="1.3"/>
<ellipse cx="1277.7" cy="292.8" rx="4.4" ry="3.9000000000000004" fill="rgba(200,190,60,0.68)" stroke="#000" stroke-width="1.3"/>
<ellipse cx="1261.7" cy="311.1" rx="4.4" ry="3.9000000000000004" fill="rgba(193,185,77,0.68)" stroke="#000" stroke-width="1.3"/>
<ellipse cx="1246.4" cy="330.7" rx="4.4" ry="3.9000000000000004" fill="rgba(187,181,94,0.68)" stroke="#000" stroke-width="1.3"/>
<ellipse cx="1230.4" cy="350.6" rx="4.4" ry="3.9000000000000004" fill="rgba(180,176,111,0.68)" stroke="#000" stroke-width="1.3"/>
<ellipse cx="1213.6" cy="369.0" rx="4.4" ry="3.9000000000000004" fill="rgba(174,171,128,0.68)" stroke="#000" stroke-width="1.3"/>
<ellipse cx="1251.5" cy="393.6" rx="4.4" ry="3.9000000000000004" fill="rgba(172,146,135,0.68)" stroke="#000" stroke-width="1.3"/>
<ellipse cx="1310.1" cy="393.6" rx="4.4" ry="3.9000000000000004" fill="rgba(178,132,124,0.68)" stroke="#000" stroke-width="1.3"/>
<ellipse cx="1365.6" cy="392.4" rx="4.4" ry="3.9000000000000004" fill="rgba(184,118,112,0.68)" stroke="#000" stroke-width="1.3"/>
<ellipse cx="1419.6" cy="397.1" rx="4.4" ry="3.9000000000000004" fill="rgba(189,104,101,0.68)" stroke="#000" stroke-width="1.3"/>
<ellipse cx="1456.7" cy="401.0" rx="4.4" ry="3.9000000000000004" fill="rgba(195,90,90,0.68)" stroke="#000" stroke-width="1.3"/>
<ellipse cx="1115.9" cy="386.6" rx="4.4" ry="3.9000000000000004" fill="rgba(70,185,185,0.68)" stroke="#000" stroke-width="1.3"/>
<ellipse cx="1132.3" cy="387.7" rx="4.4" ry="3.9000000000000004" fill="rgba(88,181,178,0.68)" stroke="#000" stroke-width="1.3"/>
<ellipse cx="1149.5" cy="387.7" rx="4.4" ry="3.9000000000000004" fill="rgba(106,178,172,0.68)" stroke="#000" stroke-width="1.3"/>
<ellipse cx="1166.3" cy="388.9" rx="4.4" ry="3.9000000000000004" fill="rgba(123,174,165,0.68)" stroke="#000" stroke-width="1.3"/>
<ellipse cx="1182.3" cy="390.1" rx="4.4" ry="3.9000000000000004" fill="rgba(141,170,159,0.68)" stroke="#000" stroke-width="1.3"/>
<ellipse cx="1174.1" cy="419.0" rx="4.4" ry="3.9000000000000004" fill="rgba(149,149,160,0.68)" stroke="#000" stroke-width="1.3"/>
<ellipse cx="1149.5" cy="449.9" rx="4.4" ry="3.9000000000000004" fill="rgba(137,137,168,0.68)" stroke="#000" stroke-width="1.3"/>
<ellipse cx="1126.4" cy="478.4" rx="4.4" ry="3.9000000000000004" fill="rgba(124,124,175,0.68)" stroke="#000" stroke-width="1.3"/>
<ellipse cx="1104.6" cy="507.7" rx="4.4" ry="3.9000000000000004" fill="rgba(112,112,182,0.68)" stroke="#000" stroke-width="1.3"/>
<ellipse cx="1079.5" cy="537.4" rx="4.4" ry="3.9000000000000004" fill="rgba(100,100,190,0.68)" stroke="#000" stroke-width="1.3"/>
<ellipse cx="1203.4" cy="410.4" rx="4.4" ry="3.9000000000000004" fill="rgba(171,148,160,0.68)" stroke="#000" stroke-width="1.3"/>
<ellipse cx="1205.8" cy="431.1" rx="4.4" ry="3.9000000000000004" fill="rgba(176,134,168,0.68)" stroke="#000" stroke-width="1.3"/>
<ellipse cx="1212.4" cy="448.3" rx="4.4" ry="3.9000000000000004" fill="rgba(181,121,175,0.68)" stroke="#000" stroke-width="1.3"/>
<ellipse cx="1216.3" cy="466.3" rx="4.4" ry="3.9000000000000004" fill="rgba(185,108,182,0.68)" stroke="#000" stroke-width="1.3"/>
<ellipse cx="1221.0" cy="485.8" rx="4.4" ry="3.9000000000000004" fill="rgba(190,95,190,0.68)" stroke="#000" stroke-width="1.3"/>
<ellipse cx="1196.5" cy="390.9" rx="4.2" ry="3.7" fill="#fff" stroke="#000" stroke-width="1.3"/>
<rect x="1371" y="131" width="215" height="168" fill="#2a2a2a"/>
<rect x="1373.5" y="133.5" width="209" height="162" fill="url(#ins1)"/>
<polygon points="1373.5,150.6 1582.5,277.7 1582.5,295.5 1373.5,295.5" fill="url(#ins2)"/>
<rect x="1373.5" y="133.5" width="209" height="162" fill="none" stroke="#9a9a9a" stroke-width="1.5"/>
<ellipse cx="1476.8" cy="174.6" rx="4.4" ry="3.9000000000000004" fill="#c4b400" stroke="#000" stroke-width="1.3"/>
<rect x="1470.3" y="207.8" width="13" height="13" fill="none" stroke="#fff" stroke-width="2"/>
<ellipse cx="1389.5" cy="282.5" rx="4.4" ry="3.9000000000000004" fill="#c0c050" stroke="#000" stroke-width="1.3"/>
<text x="14" y="645" font-size="27" fill="#eee" text-anchor="start" font-weight="normal" font-family="Liberation Sans" textLength="210" lengthAdjust="spacingAndGlyphs" >Current Reading</text>
<text x="14" y="682" font-size="23" fill="#eee" text-anchor="start" font-weight="normal" font-family="Liberation Sans" textLength="99" lengthAdjust="spacingAndGlyphs" >x: 0.4191</text>
<text x="14" y="717.5" font-size="23" fill="#eee" text-anchor="start" font-weight="normal" font-family="Liberation Sans" textLength="99" lengthAdjust="spacingAndGlyphs" >y: 0.5176</text>
<text x="14" y="752.5" font-size="23" fill="#eee" text-anchor="start" font-weight="normal" font-family="Liberation Sans" textLength="93" lengthAdjust="spacingAndGlyphs" >fL: 28.64</text>
<text x="14" y="788" font-size="23" fill="#eee" text-anchor="start" font-weight="normal" font-family="Liberation Sans" textLength="140" lengthAdjust="spacingAndGlyphs" >cd/m²: 98.14</text>
<text x="448" y="621" font-size="12.5" fill="#ddd" text-anchor="middle" font-weight="normal" font-family="Liberation Sans" textLength="79" lengthAdjust="spacingAndGlyphs" >RGB Balance</text>
<rect x="339.5" y="626.5" width="243.0" height="159.0" fill="#232323"/>
<line x1="339.5" y1="626.5" x2="582.5" y2="626.5" stroke="#8a8a8a"/>
<line x1="333.5" y1="626.5" x2="339.5" y2="626.5" stroke="#ccc" stroke-width="2"/>
<text x="334.5" y="631.5" font-size="13.5" fill="#ddd" text-anchor="end" font-weight="normal" font-family="Liberation Sans" >40</text>
<line x1="339.5" y1="666.2" x2="582.5" y2="666.2" stroke="#8a8a8a"/>
<line x1="333.5" y1="666.2" x2="339.5" y2="666.2" stroke="#ccc" stroke-width="2"/>
<text x="334.5" y="671.25" font-size="13.5" fill="#ddd" text-anchor="end" font-weight="normal" font-family="Liberation Sans" >20</text>
<line x1="339.5" y1="706.0" x2="582.5" y2="706.0" stroke="#8a8a8a"/>
<line x1="333.5" y1="706.0" x2="339.5" y2="706.0" stroke="#ccc" stroke-width="2"/>
<text x="334.5" y="711.0" font-size="13.5" fill="#ddd" text-anchor="end" font-weight="normal" font-family="Liberation Sans" >0</text>
<line x1="339.5" y1="745.8" x2="582.5" y2="745.8" stroke="#8a8a8a"/>
<line x1="333.5" y1="745.8" x2="339.5" y2="745.8" stroke="#ccc" stroke-width="2"/>
<text x="334.5" y="750.75" font-size="13.5" fill="#ddd" text-anchor="end" font-weight="normal" font-family="Liberation Sans" >-20</text>
<line x1="339.5" y1="785.5" x2="582.5" y2="785.5" stroke="#8a8a8a"/>
<line x1="333.5" y1="785.5" x2="339.5" y2="785.5" stroke="#ccc" stroke-width="2"/>
<text x="334.5" y="790.5" font-size="13.5" fill="#ddd" text-anchor="end" font-weight="normal" font-family="Liberation Sans" >-40</text>
<rect x="339.5" y="626.5" width="243.0" height="159.0" fill="none" stroke="#9a9a9a"/>
<line x1="339.5" y1="785.5" x2="339.5" y2="790.5" stroke="#9a9a9a"/>
<line x1="582.5" y1="785.5" x2="582.5" y2="790.5" stroke="#9a9a9a"/>
<text x="461" y="799" font-size="13" fill="#ddd" text-anchor="middle" font-weight="normal" font-family="Liberation Sans" >100%</text>
<rect x="364" y="706.5" width="64" height="5.5" fill="url(#rbr)" stroke="#000"/>
<rect x="429.5" y="700.5" width="64" height="6" fill="url(#rbg)" stroke="#000"/>
<rect x="494.5" y="706.5" width="64" height="72.5" fill="url(#rbb)" stroke="#000"/>
<rect x="603" y="606" width="679" height="13" fill="#303030"/>
<rect x="603" y="619" width="679" height="14" fill="#141414"/>
<rect x="603" y="606" width="19" height="27" fill="#000"/>
<text x="781" y="625" font-size="16" fill="#fff" text-anchor="start" font-weight="normal" font-family="Liberation Sans" textLength="39" lengthAdjust="spacingAndGlyphs" stroke="#fff" stroke-width="0.5">20%</text>
<text x="885" y="625" font-size="16" fill="#fff" text-anchor="start" font-weight="normal" font-family="Liberation Sans" textLength="39" lengthAdjust="spacingAndGlyphs" stroke="#fff" stroke-width="0.5">40%</text>
<text x="989" y="625" font-size="16" fill="#fff" text-anchor="start" font-weight="normal" font-family="Liberation Sans" textLength="39" lengthAdjust="spacingAndGlyphs" stroke="#fff" stroke-width="0.5">60%</text>
<text x="1093" y="625" font-size="16" fill="#fff" text-anchor="start" font-weight="normal" font-family="Liberation Sans" textLength="39" lengthAdjust="spacingAndGlyphs" stroke="#fff" stroke-width="0.5">80%</text>
<text x="1197" y="625" font-size="16" fill="#fff" text-anchor="start" font-weight="normal" font-family="Liberation Sans" textLength="50" lengthAdjust="spacingAndGlyphs" stroke="#fff" stroke-width="0.5">100%</text>
<rect x="603" y="633" width="679" height="25" fill="#404040"/>
<rect x="603" y="633" width="19" height="25" fill="#262626"/>
<text x="628" y="651" font-size="17" fill="#f2f2f2" text-anchor="start" font-weight="normal" font-family="Liberation Sans" textLength="76" lengthAdjust="spacingAndGlyphs" >x: CIE31</text>
<text x="780.5" y="651" font-size="17" fill="#f2f2f2" text-anchor="start" font-weight="normal" font-family="Liberation Sans" textLength="64.9" lengthAdjust="spacingAndGlyphs" >0.3332</text>
<text x="884.5" y="651" font-size="17" fill="#f2f2f2" text-anchor="start" font-weight="normal" font-family="Liberation Sans" textLength="64.9" lengthAdjust="spacingAndGlyphs" >0.3559</text>
<text x="988.5" y="651" font-size="17" fill="#f2f2f2" text-anchor="start" font-weight="normal" font-family="Liberation Sans" textLength="64.9" lengthAdjust="spacingAndGlyphs" >0.3772</text>
<text x="1092.5" y="651" font-size="17" fill="#f2f2f2" text-anchor="start" font-weight="normal" font-family="Liberation Sans" textLength="64.9" lengthAdjust="spacingAndGlyphs" >0.3983</text>
<text x="1196.5" y="651" font-size="17" fill="#f2f2f2" text-anchor="start" font-weight="normal" font-family="Liberation Sans" textLength="64.9" lengthAdjust="spacingAndGlyphs" >0.4191</text>
<rect x="603" y="658" width="679" height="25" fill="#7e7e7e"/>
<rect x="603" y="658" width="19" height="25" fill="#262626"/>
<text x="628" y="676" font-size="17" fill="#f2f2f2" text-anchor="start" font-weight="normal" font-family="Liberation Sans" textLength="76" lengthAdjust="spacingAndGlyphs" >y: CIE31</text>
<text x="780.5" y="676" font-size="17" fill="#f2f2f2" text-anchor="start" font-weight="normal" font-family="Liberation Sans" textLength="64.9" lengthAdjust="spacingAndGlyphs" >0.3689</text>
<text x="884.5" y="676" font-size="17" fill="#f2f2f2" text-anchor="start" font-weight="normal" font-family="Liberation Sans" textLength="64.9" lengthAdjust="spacingAndGlyphs" >0.4067</text>
<text x="988.5" y="676" font-size="17" fill="#f2f2f2" text-anchor="start" font-weight="normal" font-family="Liberation Sans" textLength="64.9" lengthAdjust="spacingAndGlyphs" >0.4444</text>
<text x="1092.5" y="676" font-size="17" fill="#f2f2f2" text-anchor="start" font-weight="normal" font-family="Liberation Sans" textLength="64.9" lengthAdjust="spacingAndGlyphs" >0.4840</text>
<text x="1196.5" y="676" font-size="17" fill="#f2f2f2" text-anchor="start" font-weight="normal" font-family="Liberation Sans" textLength="64.9" lengthAdjust="spacingAndGlyphs" >0.5176</text>
<rect x="603" y="683" width="679" height="25" fill="#404040"/>
<rect x="603" y="683" width="19" height="25" fill="#262626"/>
<text x="628" y="701" font-size="17" fill="#f2f2f2" text-anchor="start" font-weight="normal" font-family="Liberation Sans" textLength="13" lengthAdjust="spacingAndGlyphs" >Y</text>
<text x="780.5" y="701" font-size="17" fill="#f2f2f2" text-anchor="start" font-weight="normal" font-family="Liberation Sans" textLength="88.7" lengthAdjust="spacingAndGlyphs" >105.2114</text>
<text x="884.5" y="701" font-size="17" fill="#f2f2f2" text-anchor="start" font-weight="normal" font-family="Liberation Sans" textLength="88.7" lengthAdjust="spacingAndGlyphs" >104.1295</text>
<text x="988.5" y="701" font-size="17" fill="#f2f2f2" text-anchor="start" font-weight="normal" font-family="Liberation Sans" textLength="88.7" lengthAdjust="spacingAndGlyphs" >101.8506</text>
<text x="1092.5" y="701" font-size="17" fill="#f2f2f2" text-anchor="start" font-weight="normal" font-family="Liberation Sans" textLength="88.7" lengthAdjust="spacingAndGlyphs" >101.4857</text>
<text x="1196.5" y="701" font-size="17" fill="#f2f2f2" text-anchor="start" font-weight="normal" font-family="Liberation Sans" textLength="76.8" lengthAdjust="spacingAndGlyphs" >98.1401</text>
<rect x="603" y="708" width="679" height="25" fill="#7e7e7e"/>
<rect x="603" y="708" width="19" height="25" fill="#262626"/>
<text x="628" y="726" font-size="17" fill="#f2f2f2" text-anchor="start" font-weight="normal" font-family="Liberation Sans" textLength="138" lengthAdjust="spacingAndGlyphs" >Target x:CIE31</text>
<text x="780.5" y="726" font-size="17" fill="#f2f2f2" text-anchor="start" font-weight="normal" font-family="Liberation Sans" textLength="64.9" lengthAdjust="spacingAndGlyphs" >0.3344</text>
<text x="884.5" y="726" font-size="17" fill="#f2f2f2" text-anchor="start" font-weight="normal" font-family="Liberation Sans" textLength="64.9" lengthAdjust="spacingAndGlyphs" >0.3564</text>
<text x="988.5" y="726" font-size="17" fill="#f2f2f2" text-anchor="start" font-weight="normal" font-family="Liberation Sans" textLength="64.9" lengthAdjust="spacingAndGlyphs" >0.3773</text>
<text x="1092.5" y="726" font-size="17" fill="#f2f2f2" text-anchor="start" font-weight="normal" font-family="Liberation Sans" textLength="64.9" lengthAdjust="spacingAndGlyphs" >0.3969</text>
<text x="1196.5" y="726" font-size="17" fill="#f2f2f2" text-anchor="start" font-weight="normal" font-family="Liberation Sans" textLength="64.9" lengthAdjust="spacingAndGlyphs" >0.4193</text>
<rect x="603" y="733" width="679" height="25" fill="#404040"/>
<rect x="603" y="733" width="19" height="25" fill="#262626"/>
<text x="628" y="751" font-size="17" fill="#f2f2f2" text-anchor="start" font-weight="normal" font-family="Liberation Sans" textLength="138" lengthAdjust="spacingAndGlyphs" >Target y:CIE31</text>
<text x="780.5" y="751" font-size="17" fill="#f2f2f2" text-anchor="start" font-weight="normal" font-family="Liberation Sans" textLength="64.9" lengthAdjust="spacingAndGlyphs" >0.3648</text>
<text x="884.5" y="751" font-size="17" fill="#f2f2f2" text-anchor="start" font-weight="normal" font-family="Liberation Sans" textLength="64.9" lengthAdjust="spacingAndGlyphs" >0.4013</text>
<text x="988.5" y="751" font-size="17" fill="#f2f2f2" text-anchor="start" font-weight="normal" font-family="Liberation Sans" textLength="64.9" lengthAdjust="spacingAndGlyphs" >0.4358</text>
<text x="1092.5" y="751" font-size="17" fill="#f2f2f2" text-anchor="start" font-weight="normal" font-family="Liberation Sans" textLength="64.9" lengthAdjust="spacingAndGlyphs" >0.4682</text>
<text x="1196.5" y="751" font-size="17" fill="#f2f2f2" text-anchor="start" font-weight="normal" font-family="Liberation Sans" textLength="64.9" lengthAdjust="spacingAndGlyphs" >0.5053</text>
<rect x="603" y="758" width="679" height="25" fill="#7e7e7e"/>
<rect x="603" y="758" width="19" height="25" fill="#262626"/>
<text x="628" y="776" font-size="17" fill="#f2f2f2" text-anchor="start" font-weight="normal" font-family="Liberation Sans" textLength="81" lengthAdjust="spacingAndGlyphs" >Target Y</text>
<text x="780.5" y="776" font-size="17" fill="#f2f2f2" text-anchor="start" font-weight="normal" font-family="Liberation Sans" textLength="88.7" lengthAdjust="spacingAndGlyphs" >102.0888</text>
<text x="884.5" y="776" font-size="17" fill="#f2f2f2" text-anchor="start" font-weight="normal" font-family="Liberation Sans" textLength="88.7" lengthAdjust="spacingAndGlyphs" >100.2968</text>
<text x="988.5" y="776" font-size="17" fill="#f2f2f2" text-anchor="start" font-weight="normal" font-family="Liberation Sans" textLength="76.8" lengthAdjust="spacingAndGlyphs" >98.9199</text>
<text x="1092.5" y="776" font-size="17" fill="#f2f2f2" text-anchor="start" font-weight="normal" font-family="Liberation Sans" textLength="76.8" lengthAdjust="spacingAndGlyphs" >97.8394</text>
<text x="1196.5" y="776" font-size="17" fill="#f2f2f2" text-anchor="start" font-weight="normal" font-family="Liberation Sans" textLength="76.8" lengthAdjust="spacingAndGlyphs" >96.7947</text>
<rect x="0" y="807" width="1600" height="63" fill="url(#bbar)"/>
<rect x="1" y="808" width="45" height="62" rx="4" fill="url(#bb)"/>
<circle cx="23.5" cy="817" r="7" fill="#777"/>
<path d="M19 820 L23.5 814.5 L28 820 Z" fill="#222"/>
<rect x="6" y="834" width="35" height="30" rx="3" fill="#ffff00"/>
<rect x="52.0" y="808" width="150" height="62" rx="4" fill="url(#bb)"/>
<rect x="57.0" y="813" width="140" height="36" rx="3" fill="#c0c2a6"/>
<path d="M57.5 848 V816 Q57.5 813.5 60.0 813.5 H194.0" fill="none" stroke="rgba(60,60,0,0.35)" stroke-width="1"/>
<text x="127" y="864" font-size="11" fill="#1e1e1e" text-anchor="middle" font-weight="normal" font-family="Liberation Sans" stroke="#1e1e1e" stroke-width="0.3">20%</text>
<rect x="204.0" y="808" width="150" height="62" rx="4" fill="url(#bb)"/>
<rect x="209.0" y="813" width="140" height="36" rx="3" fill="#c2c288"/>
<path d="M209.5 848 V816 Q209.5 813.5 212.0 813.5 H346.0" fill="none" stroke="rgba(60,60,0,0.35)" stroke-width="1"/>
<text x="279" y="864" font-size="11" fill="#1e1e1e" text-anchor="middle" font-weight="normal" font-family="Liberation Sans" stroke="#1e1e1e" stroke-width="0.3">40%</text>
<rect x="356.0" y="808" width="150" height="62" rx="4" fill="url(#bb)"/>
<rect x="361.0" y="813" width="140" height="36" rx="3" fill="#c0c068"/>
<path d="M361.5 848 V816 Q361.5 813.5 364.0 813.5 H498.0" fill="none" stroke="rgba(60,60,0,0.35)" stroke-width="1"/>
<text x="431" y="864" font-size="11" fill="#1e1e1e" text-anchor="middle" font-weight="normal" font-family="Liberation Sans" stroke="#1e1e1e" stroke-width="0.3">60%</text>
<rect x="508.0" y="808" width="150" height="62" rx="4" fill="url(#bb)"/>
<rect x="513.0" y="813" width="140" height="36" rx="3" fill="#bec046"/>
<path d="M513.5 848 V816 Q513.5 813.5 516.0 813.5 H650.0" fill="none" stroke="rgba(60,60,0,0.35)" stroke-width="1"/>
<text x="583" y="864" font-size="11" fill="#1e1e1e" text-anchor="middle" font-weight="normal" font-family="Liberation Sans" stroke="#1e1e1e" stroke-width="0.3">80%</text>
<rect x="661.0" y="809.5" width="148" height="62" rx="5" fill="#333" stroke="#1c1c1c" stroke-width="3"/>
<rect x="665.0" y="813" width="140" height="36" rx="3" fill="#c0be00"/>
<text x="735" y="864" font-size="11" fill="#fff" text-anchor="middle" font-weight="bold" font-family="Liberation Sans" >100%</text>
<rect x="1277" y="808" width="48" height="64" rx="4" fill="url(#bb)"/>
<line x1="1277" y1="826.5" x2="1325" y2="826.5" stroke="#3a3a3a"/>
<circle cx="1301" cy="816.5" r="7.5" fill="url(#cg)"/>
<path d="M1296.5 818.5 L1301 814 L1305.5 818.5 Z" fill="#333"/>
<rect x="1286.5" y="833" width="29" height="30" rx="4" fill="none" stroke="#2a2a2a" stroke-width="2.5"/>
<rect x="1294" y="841" width="14" height="7" fill="#1a1a1a"/>
<rect x="1294" y="848" width="14" height="7" fill="#000"/>
<rect x="1326" y="808" width="226" height="30" rx="3" fill="url(#bb)"/>
<line x1="1372.5" y1="808" x2="1372.5" y2="838" stroke="#3a3a3a"/>
<line x1="1417.5" y1="808" x2="1417.5" y2="838" stroke="#3a3a3a"/>
<line x1="1462.5" y1="808" x2="1462.5" y2="838" stroke="#3a3a3a"/>
<line x1="1507.5" y1="808" x2="1507.5" y2="838" stroke="#3a3a3a"/>
<circle cx="1349" cy="822.5" r="10" fill="url(#cg)"/>
<circle cx="1395" cy="822.5" r="10" fill="url(#cg)"/>
<circle cx="1440" cy="822.5" r="10" fill="url(#cg)"/>
<circle cx="1485" cy="822.5" r="10" fill="url(#cg)"/>
<circle cx="1530" cy="822.5" r="10" fill="url(#cg)"/>
<rect x="1345" y="818.5" width="8" height="8" fill="#333"/>
<path d="M1392 816.5 L1400.5 822.5 L1392 828.5 Z" fill="#333"/>
<path d="M1436.5 817.5 h-2 v10 h2 M1443.5 817.5 h2 v10 h-2" fill="none" stroke="#333" stroke-width="1.6"/>
<rect x="1437.8" y="822" width="1.6" height="1.6" fill="#333"/><rect x="1440.6" y="822" width="1.6" height="1.6" fill="#333"/>
<path d="M1485 822.5 C1482 819,1479 819,1479 822.5 C1479 826,1482 826,1485 822.5 C1488 819,1491 819,1491 822.5 C1491 826,1488 826,1485 822.5 Z" fill="none" stroke="#333" stroke-width="1.8"/>
<path d="M1534.5 820 A5 5 0 0 0 1525 821" fill="none" stroke="#333" stroke-width="2"/>
<path d="M1525 825 A5 5 0 0 0 1534.5 824" fill="none" stroke="#333" stroke-width="2"/>
<path d="M1536 816.5 L1536 821 L1531.5 821 Z" fill="#333"/>
<path d="M1523.5 828.5 L1523.5 824 L1528 824 Z" fill="#333"/>
<rect x="1552" y="808" width="46" height="30" fill="#2a2a2a"/>
<circle cx="1576" cy="822.5" r="10" fill="#222"/>
<rect x="1326" y="839" width="136" height="33" rx="3" fill="url(#bb)"/>
<rect x="1463" y="839" width="136" height="33" rx="3" fill="url(#bb)"/>
<circle cx="1357" cy="854.5" r="10" fill="url(#cg)"/>
<circle cx="1570" cy="854.5" r="10" fill="url(#cg)"/>
<path d="M1356 850 L1352 854.5 L1356 859 M1360.5 850 L1356.5 854.5 L1360.5 859" fill="none" stroke="#333" stroke-width="1.5"/>
<path d="M1568 850 L1572 854.5 L1568 859 M1563.5 850 L1567.5 854.5 L1563.5 859" fill="none" stroke="#333" stroke-width="1.5"/>
<text x="1408.5" y="861.5" font-size="25" fill="#2a2a2a" text-anchor="middle" font-family="Liberation Sans" stroke="#2a2a2a" stroke-width="0.6" textLength="50" lengthAdjust="spacingAndGlyphs">Back</text>
<text x="1516" y="861.5" font-size="25" fill="#2a2a2a" text-anchor="middle" font-family="Liberation Sans" stroke="#2a2a2a" stroke-width="0.6" textLength="50" lengthAdjust="spacingAndGlyphs">Next</text></svg></body></html>
